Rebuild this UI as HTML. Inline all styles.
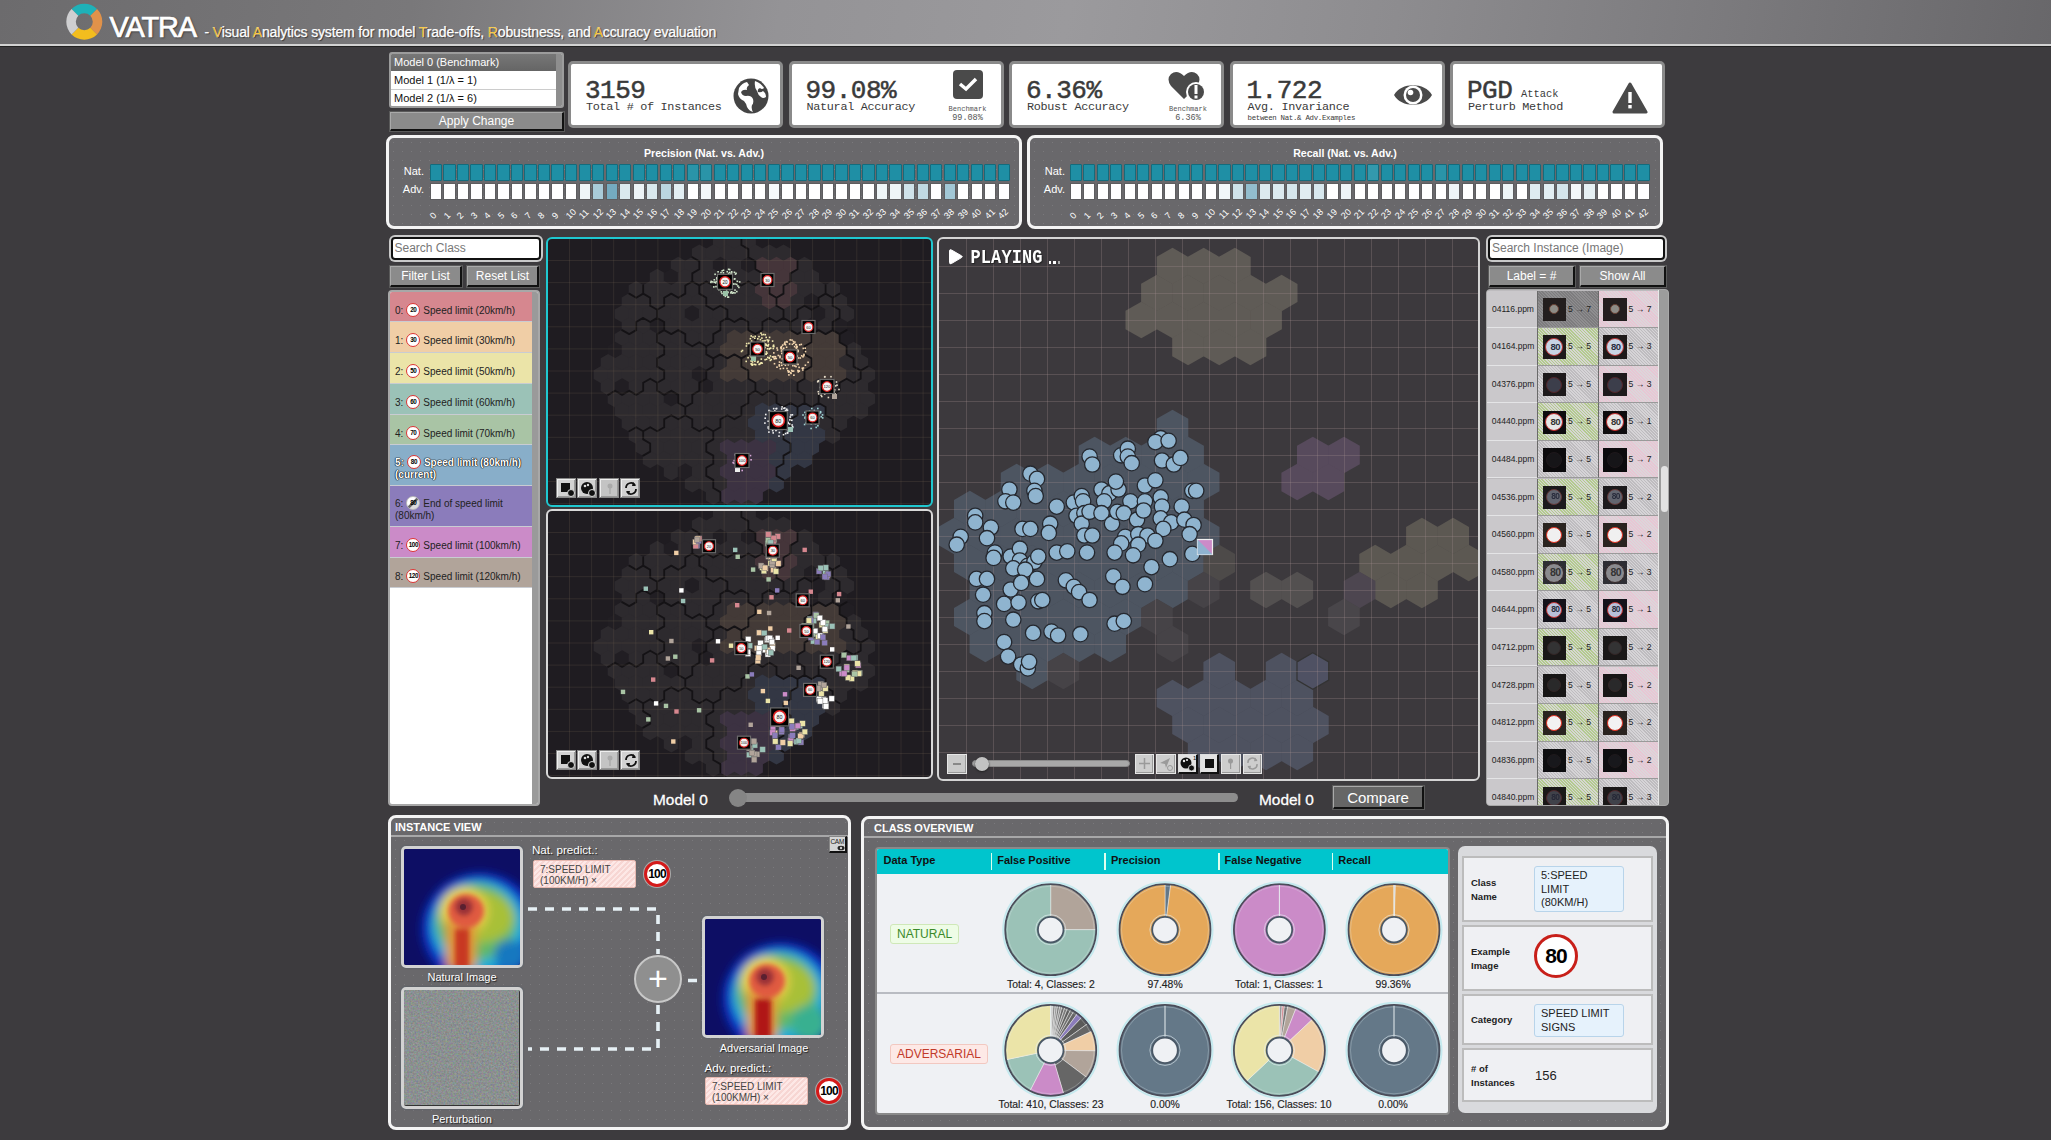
<!DOCTYPE html><html><head><meta charset="utf-8"><style>
*{box-sizing:border-box;margin:0;padding:0}
html,body{width:2051px;height:1140px;overflow:hidden;background:#3d3b3e;font-family:"Liberation Sans",sans-serif}
.abs{position:absolute}
#hdr{position:absolute;left:0;top:0;width:2051px;height:44px;background:linear-gradient(100deg,#6c6b6d 0%,#79787a 20%,#949396 38%,#9b9a9d 52%,#8d8c8f 68%,#7b7a7d 84%,#68676a 100%)}
#hdrline{position:absolute;left:0;top:44px;width:2051px;height:3px;background:#d2d2d2;border-bottom:1px solid #222}
.dots{background-color:#69686b;background-image:radial-gradient(circle,#7a797c 0.7px,transparent 0.9px);background-size:9px 9px}
.btn{position:absolute;background:#8b8b8b;border:1px solid #a9a9a9;border-right:2px solid #111;border-bottom:2px solid #111;color:#fff;text-align:center;font-size:12px;box-shadow:0 0 0 1px #5a5a5a}
.card{position:absolute;top:61px;width:215px;height:67px;background:#fff;border:3px solid #8a8a8a;border-radius:5px;font-family:"Liberation Mono",monospace;color:#3a3a3a}
.card .big{position:absolute;left:14px;top:13.5px;font-size:26px;line-height:26px;letter-spacing:-0.5px;-webkit-text-stroke:0.5px #3a3a3a}
.card .lab{position:absolute;left:15px;top:37px;font-size:11.8px;line-height:12px;letter-spacing:-0.3px}
.panel{position:absolute;border:3px solid #f4f4f4;border-radius:8px}
.inp{position:absolute;background:#fff;border:2px solid #111;box-shadow:0 0 0 2px #c9c9c9;border-radius:4px;color:#777;font-size:12px;padding-left:2px}
</style></head><body>
<div id="hdr"></div><div id="hdrline"></div>
<svg class="abs" style="left:0;top:0" width="120" height="44"><path d="M71.57,8.97 A18,18 0 0 1 97.03,8.97 L90.31,15.69 A8.5,8.5 0 0 0 78.29,15.69Z" fill="#1fb1b8"/><path d="M97.03,8.97 A18,18 0 0 1 97.03,34.43 L90.31,27.71 A8.5,8.5 0 0 0 90.31,15.69Z" fill="#e0924a"/><path d="M97.03,34.43 A18,18 0 0 1 71.57,34.43 L78.29,27.71 A8.5,8.5 0 0 0 90.31,27.71Z" fill="#f3bd1e"/><path d="M71.57,34.43 A18,18 0 0 1 71.57,8.97 L78.29,15.69 A8.5,8.5 0 0 0 78.29,27.71Z" fill="#cfcfd1"/></svg>
<div class="abs" style="left:109.5px;top:9.5px;font-size:29px;line-height:34px;color:#fff;letter-spacing:-1.2px;text-shadow:1px 1px 2px #333;-webkit-text-stroke:0.7px #fff">VATRA</div>
<div class="abs" style="left:204.5px;top:23px;font-size:14px;line-height:18px;color:#fff;text-shadow:1px 1px 1px #333;white-space:nowrap;letter-spacing:-0.15px;-webkit-text-stroke:0.25px #fff">- <span style="color:#f4b400">V</span>isual <span style="color:#f4b400">A</span>nalytics system for model <span style="color:#f4b400">T</span>rade-offs, <span style="color:#f4b400">R</span>obustness, and <span style="color:#f4b400">A</span>ccuracy evaluation</div>
<div class="abs" style="left:389px;top:52px;width:175px;height:56px;background:#fff;border:2px solid #9c9c9c;border-radius:3px;overflow:hidden;font-size:11px;color:#111"><div style="position:absolute;left:0;top:0;width:165px;height:17px;background:linear-gradient(#777,#656565);color:#fff;padding:2px 0 0 3px">Model 0 (Benchmark)</div><div style="position:absolute;left:0;top:18px;width:165px;height:18px;padding:2px 0 0 3px;border-bottom:1px solid #ccc">Model 1 (1/λ = 1)</div><div style="position:absolute;left:0;top:36px;width:165px;height:18px;padding:2px 0 0 3px">Model 2 (1/λ = 6)</div><div style="position:absolute;left:165px;top:0;width:8px;height:54px;background:#8e8e8e"></div></div>
<div class="btn" style="left:390px;top:112px;width:174px;height:19px;line-height:17px">Apply Change</div>
<div class="card" style="left:568px"><div class="big">3159</div><div class="lab">Total # of Instances</div><svg class="abs" style="left:161px;top:13px" width="38" height="38" viewBox="0 0 38 38"><circle cx="19" cy="19" r="17.5" fill="#444"/><path d="M7,11 Q10,6 15,5 L17,8 Q14,10 15,13 Q11,12 9,15 Q10,19 14,19 Q19,18 21,22 Q22,26 20,28 Q19,32 21,35 Q17,34 15,30 Q14,26 12,24 Q7,22 6,17Z M23,4 Q29,6 32,11 Q30,13 28,11 Q25,12 26,15 Q29,16 31,14 Q34,16 34,20 Q31,22 29,20 Q26,18 25,14 Q22,10 23,4Z" fill="#fff"/></svg></div>
<div class="card" style="left:788.5px"><div class="big">99.08%</div><div class="lab">Natural Accuracy</div><div class="abs" style="left:161px;top:6px;width:30px;height:29px;background:#4a4a4a;border-radius:4px"></div><svg class="abs" style="left:166px;top:12px" width="20" height="16"><path d="M2,8 L8,13 L18,3" stroke="#fff" stroke-width="3.5" fill="none"/></svg><div class="abs" style="left:152px;top:40.5px;width:48px;text-align:center;font-size:7px;line-height:8px;color:#555">Benchmark<br><span style="font-size:8.5px;line-height:11px">99.08%</span></div></div>
<div class="card" style="left:1009px"><div class="big">6.36%</div><div class="lab">Robust Accuracy</div><svg class="abs" style="left:155px;top:5px" width="40" height="36" viewBox="0 0 40 36"><path d="M17,30 L4,17 Q-1,10 4,5 Q10,0 17,7 Q24,0 30,5 Q35,10 30,17Z" fill="#4a4a4a"/><circle cx="29" cy="23" r="10" fill="#fff"/><circle cx="29" cy="23" r="8" fill="#4a4a4a"/><rect x="27.5" y="16" width="3" height="9" fill="#fff"/><rect x="27.5" y="26.5" width="3" height="3" fill="#fff"/></svg><div class="abs" style="left:152px;top:40.5px;width:48px;text-align:center;font-size:7px;line-height:8px;color:#555">Benchmark<br><span style="font-size:8.5px;line-height:11px">6.36%</span></div></div>
<div class="card" style="left:1229.5px"><div class="big">1.722</div><div class="lab">Avg. Invariance</div><svg class="abs" style="left:160px;top:14px" width="40" height="34" viewBox="0 0 40 34"><path d="M1,17 C8,4 32,4 39,17 C32,30 8,30 1,17Z" fill="#4a4a4a"/><circle cx="20" cy="17" r="9.5" fill="#fff"/><circle cx="20" cy="17" r="7" fill="#4a4a4a"/><circle cx="17.5" cy="14.5" r="2.8" fill="#fff"/></svg><div class="abs" style="left:15px;top:49.5px;font-size:7.4px;line-height:8px;letter-spacing:-0.3px">between Nat.& Adv.Examples</div></div>
<div class="card" style="left:1450px"><div class="big">PGD</div><div class="lab">Perturb Method</div><svg class="abs" style="left:159px;top:18px" width="36" height="32" viewBox="0 0 36 32"><path d="M18,2 L34,30 L2,30Z" fill="#4a4a4a" stroke="#4a4a4a" stroke-width="3" stroke-linejoin="round"/><rect x="16.3" y="10" width="3.4" height="11" fill="#fff"/><rect x="16.3" y="23" width="3.4" height="3.4" fill="#fff"/></svg><div class="abs" style="left:68px;top:24px;font-size:10.4px;line-height:12px">Attack</div></div>
<div class="panel dots" style="left:386px;top:135px;width:636px;height:94px"><div class="abs" style="left:0;top:9px;width:630px;text-align:center;color:#fff;font-size:10.6px;font-weight:bold">Precision (Nat. vs. Adv.)</div><div class="abs" style="left:10px;top:27px;width:25px;text-align:right;color:#fff;font-size:11px">Nat.</div><div class="abs" style="left:8px;top:45px;width:27px;text-align:right;color:#fff;font-size:11px">Adv.</div><div class="abs" style="left:40.80px;top:26px;width:12.2px;height:17px;background:#1f8fa5;border:1px solid #146b7c;border-radius:1px"></div><div class="abs" style="left:40.80px;top:45px;width:12.2px;height:17px;background:rgb(255,255,255);border:1px solid #5d5d5f"></div><div class="abs" style="left:46.30px;top:73px;width:14px;height:10px;color:#fff;font-size:9px;line-height:10px;transform:rotate(-45deg);transform-origin:0 100%;white-space:nowrap">0</div><div class="abs" style="left:54.32px;top:26px;width:12.2px;height:17px;background:#1f8fa5;border:1px solid #146b7c;border-radius:1px"></div><div class="abs" style="left:54.32px;top:45px;width:12.2px;height:17px;background:rgb(255,255,255);border:1px solid #5d5d5f"></div><div class="abs" style="left:59.82px;top:73px;width:14px;height:10px;color:#fff;font-size:9px;line-height:10px;transform:rotate(-45deg);transform-origin:0 100%;white-space:nowrap">1</div><div class="abs" style="left:67.84px;top:26px;width:12.2px;height:17px;background:#1f8fa5;border:1px solid #146b7c;border-radius:1px"></div><div class="abs" style="left:67.84px;top:45px;width:12.2px;height:17px;background:rgb(255,255,255);border:1px solid #5d5d5f"></div><div class="abs" style="left:73.34px;top:73px;width:14px;height:10px;color:#fff;font-size:9px;line-height:10px;transform:rotate(-45deg);transform-origin:0 100%;white-space:nowrap">2</div><div class="abs" style="left:81.36px;top:26px;width:12.2px;height:17px;background:#1f8fa5;border:1px solid #146b7c;border-radius:1px"></div><div class="abs" style="left:81.36px;top:45px;width:12.2px;height:17px;background:rgb(255,255,255);border:1px solid #5d5d5f"></div><div class="abs" style="left:86.86px;top:73px;width:14px;height:10px;color:#fff;font-size:9px;line-height:10px;transform:rotate(-45deg);transform-origin:0 100%;white-space:nowrap">3</div><div class="abs" style="left:94.88px;top:26px;width:12.2px;height:17px;background:#1f8fa5;border:1px solid #146b7c;border-radius:1px"></div><div class="abs" style="left:94.88px;top:45px;width:12.2px;height:17px;background:rgb(255,255,255);border:1px solid #5d5d5f"></div><div class="abs" style="left:100.38px;top:73px;width:14px;height:10px;color:#fff;font-size:9px;line-height:10px;transform:rotate(-45deg);transform-origin:0 100%;white-space:nowrap">4</div><div class="abs" style="left:108.40px;top:26px;width:12.2px;height:17px;background:#1f8fa5;border:1px solid #146b7c;border-radius:1px"></div><div class="abs" style="left:108.40px;top:45px;width:12.2px;height:17px;background:rgb(255,255,255);border:1px solid #5d5d5f"></div><div class="abs" style="left:113.90px;top:73px;width:14px;height:10px;color:#fff;font-size:9px;line-height:10px;transform:rotate(-45deg);transform-origin:0 100%;white-space:nowrap">5</div><div class="abs" style="left:121.92px;top:26px;width:12.2px;height:17px;background:#1f8fa5;border:1px solid #146b7c;border-radius:1px"></div><div class="abs" style="left:121.92px;top:45px;width:12.2px;height:17px;background:rgb(255,255,255);border:1px solid #5d5d5f"></div><div class="abs" style="left:127.42px;top:73px;width:14px;height:10px;color:#fff;font-size:9px;line-height:10px;transform:rotate(-45deg);transform-origin:0 100%;white-space:nowrap">6</div><div class="abs" style="left:135.44px;top:26px;width:12.2px;height:17px;background:#1f8fa5;border:1px solid #146b7c;border-radius:1px"></div><div class="abs" style="left:135.44px;top:45px;width:12.2px;height:17px;background:rgb(255,255,255);border:1px solid #5d5d5f"></div><div class="abs" style="left:140.94px;top:73px;width:14px;height:10px;color:#fff;font-size:9px;line-height:10px;transform:rotate(-45deg);transform-origin:0 100%;white-space:nowrap">7</div><div class="abs" style="left:148.96px;top:26px;width:12.2px;height:17px;background:#1f8fa5;border:1px solid #146b7c;border-radius:1px"></div><div class="abs" style="left:148.96px;top:45px;width:12.2px;height:17px;background:rgb(255,255,255);border:1px solid #5d5d5f"></div><div class="abs" style="left:154.46px;top:73px;width:14px;height:10px;color:#fff;font-size:9px;line-height:10px;transform:rotate(-45deg);transform-origin:0 100%;white-space:nowrap">8</div><div class="abs" style="left:162.48px;top:26px;width:12.2px;height:17px;background:#1f8fa5;border:1px solid #146b7c;border-radius:1px"></div><div class="abs" style="left:162.48px;top:45px;width:12.2px;height:17px;background:rgb(255,255,255);border:1px solid #5d5d5f"></div><div class="abs" style="left:167.98px;top:73px;width:14px;height:10px;color:#fff;font-size:9px;line-height:10px;transform:rotate(-45deg);transform-origin:0 100%;white-space:nowrap">9</div><div class="abs" style="left:176.00px;top:26px;width:12.2px;height:17px;background:#1f8fa5;border:1px solid #146b7c;border-radius:1px"></div><div class="abs" style="left:176.00px;top:45px;width:12.2px;height:17px;background:rgb(255,255,255);border:1px solid #5d5d5f"></div><div class="abs" style="left:181.50px;top:73px;width:14px;height:10px;color:#fff;font-size:9px;line-height:10px;transform:rotate(-45deg);transform-origin:0 100%;white-space:nowrap">10</div><div class="abs" style="left:189.52px;top:26px;width:12.2px;height:17px;background:#1f8fa5;border:1px solid #146b7c;border-radius:1px"></div><div class="abs" style="left:189.52px;top:45px;width:12.2px;height:17px;background:rgb(238,245,247);border:1px solid #5d5d5f"></div><div class="abs" style="left:195.02px;top:73px;width:14px;height:10px;color:#fff;font-size:9px;line-height:10px;transform:rotate(-45deg);transform-origin:0 100%;white-space:nowrap">11</div><div class="abs" style="left:203.04px;top:26px;width:12.2px;height:17px;background:#1f8fa5;border:1px solid #146b7c;border-radius:1px"></div><div class="abs" style="left:203.04px;top:45px;width:12.2px;height:17px;background:rgb(169,203,216);border:1px solid #5d5d5f"></div><div class="abs" style="left:208.54px;top:73px;width:14px;height:10px;color:#fff;font-size:9px;line-height:10px;transform:rotate(-45deg);transform-origin:0 100%;white-space:nowrap">12</div><div class="abs" style="left:216.56px;top:26px;width:12.2px;height:17px;background:#1f8fa5;border:1px solid #146b7c;border-radius:1px"></div><div class="abs" style="left:216.56px;top:45px;width:12.2px;height:17px;background:rgb(116,171,192);border:1px solid #5d5d5f"></div><div class="abs" style="left:222.06px;top:73px;width:14px;height:10px;color:#fff;font-size:9px;line-height:10px;transform:rotate(-45deg);transform-origin:0 100%;white-space:nowrap">13</div><div class="abs" style="left:230.08px;top:26px;width:12.2px;height:17px;background:#1f8fa5;border:1px solid #146b7c;border-radius:1px"></div><div class="abs" style="left:230.08px;top:45px;width:12.2px;height:17px;background:rgb(218,233,238);border:1px solid #5d5d5f"></div><div class="abs" style="left:235.58px;top:73px;width:14px;height:10px;color:#fff;font-size:9px;line-height:10px;transform:rotate(-45deg);transform-origin:0 100%;white-space:nowrap">14</div><div class="abs" style="left:243.60px;top:26px;width:12.2px;height:17px;background:#1f8fa5;border:1px solid #146b7c;border-radius:1px"></div><div class="abs" style="left:243.60px;top:45px;width:12.2px;height:17px;background:rgb(236,243,246);border:1px solid #5d5d5f"></div><div class="abs" style="left:249.10px;top:73px;width:14px;height:10px;color:#fff;font-size:9px;line-height:10px;transform:rotate(-45deg);transform-origin:0 100%;white-space:nowrap">15</div><div class="abs" style="left:257.12px;top:26px;width:12.2px;height:17px;background:#1f8fa5;border:1px solid #146b7c;border-radius:1px"></div><div class="abs" style="left:257.12px;top:45px;width:12.2px;height:17px;background:rgb(217,232,237);border:1px solid #5d5d5f"></div><div class="abs" style="left:262.62px;top:73px;width:14px;height:10px;color:#fff;font-size:9px;line-height:10px;transform:rotate(-45deg);transform-origin:0 100%;white-space:nowrap">16</div><div class="abs" style="left:270.64px;top:26px;width:12.2px;height:17px;background:#1f8fa5;border:1px solid #146b7c;border-radius:1px"></div><div class="abs" style="left:270.64px;top:45px;width:12.2px;height:17px;background:rgb(187,214,224);border:1px solid #5d5d5f"></div><div class="abs" style="left:276.14px;top:73px;width:14px;height:10px;color:#fff;font-size:9px;line-height:10px;transform:rotate(-45deg);transform-origin:0 100%;white-space:nowrap">17</div><div class="abs" style="left:284.16px;top:26px;width:12.2px;height:17px;background:#1f8fa5;border:1px solid #146b7c;border-radius:1px"></div><div class="abs" style="left:284.16px;top:45px;width:12.2px;height:17px;background:rgb(226,238,242);border:1px solid #5d5d5f"></div><div class="abs" style="left:289.66px;top:73px;width:14px;height:10px;color:#fff;font-size:9px;line-height:10px;transform:rotate(-45deg);transform-origin:0 100%;white-space:nowrap">18</div><div class="abs" style="left:297.68px;top:26px;width:12.2px;height:17px;background:#2a94a8;border:1px solid #146b7c;border-radius:1px"></div><div class="abs" style="left:297.68px;top:45px;width:12.2px;height:17px;background:rgb(255,255,255);border:1px solid #5d5d5f"></div><div class="abs" style="left:303.18px;top:73px;width:14px;height:10px;color:#fff;font-size:9px;line-height:10px;transform:rotate(-45deg);transform-origin:0 100%;white-space:nowrap">19</div><div class="abs" style="left:311.20px;top:26px;width:12.2px;height:17px;background:#2a94a8;border:1px solid #146b7c;border-radius:1px"></div><div class="abs" style="left:311.20px;top:45px;width:12.2px;height:17px;background:rgb(243,248,249);border:1px solid #5d5d5f"></div><div class="abs" style="left:316.70px;top:73px;width:14px;height:10px;color:#fff;font-size:9px;line-height:10px;transform:rotate(-45deg);transform-origin:0 100%;white-space:nowrap">20</div><div class="abs" style="left:324.72px;top:26px;width:12.2px;height:17px;background:#1f8fa5;border:1px solid #146b7c;border-radius:1px"></div><div class="abs" style="left:324.72px;top:45px;width:12.2px;height:17px;background:rgb(255,255,255);border:1px solid #5d5d5f"></div><div class="abs" style="left:330.22px;top:73px;width:14px;height:10px;color:#fff;font-size:9px;line-height:10px;transform:rotate(-45deg);transform-origin:0 100%;white-space:nowrap">21</div><div class="abs" style="left:338.24px;top:26px;width:12.2px;height:17px;background:#1f8fa5;border:1px solid #146b7c;border-radius:1px"></div><div class="abs" style="left:338.24px;top:45px;width:12.2px;height:17px;background:rgb(255,255,255);border:1px solid #5d5d5f"></div><div class="abs" style="left:343.74px;top:73px;width:14px;height:10px;color:#fff;font-size:9px;line-height:10px;transform:rotate(-45deg);transform-origin:0 100%;white-space:nowrap">22</div><div class="abs" style="left:351.76px;top:26px;width:12.2px;height:17px;background:#1f8fa5;border:1px solid #146b7c;border-radius:1px"></div><div class="abs" style="left:351.76px;top:45px;width:12.2px;height:17px;background:rgb(255,255,255);border:1px solid #5d5d5f"></div><div class="abs" style="left:357.26px;top:73px;width:14px;height:10px;color:#fff;font-size:9px;line-height:10px;transform:rotate(-45deg);transform-origin:0 100%;white-space:nowrap">23</div><div class="abs" style="left:365.28px;top:26px;width:12.2px;height:17px;background:#1f8fa5;border:1px solid #146b7c;border-radius:1px"></div><div class="abs" style="left:365.28px;top:45px;width:12.2px;height:17px;background:rgb(255,255,255);border:1px solid #5d5d5f"></div><div class="abs" style="left:370.78px;top:73px;width:14px;height:10px;color:#fff;font-size:9px;line-height:10px;transform:rotate(-45deg);transform-origin:0 100%;white-space:nowrap">24</div><div class="abs" style="left:378.80px;top:26px;width:12.2px;height:17px;background:#1f8fa5;border:1px solid #146b7c;border-radius:1px"></div><div class="abs" style="left:378.80px;top:45px;width:12.2px;height:17px;background:rgb(246,250,251);border:1px solid #5d5d5f"></div><div class="abs" style="left:384.30px;top:73px;width:14px;height:10px;color:#fff;font-size:9px;line-height:10px;transform:rotate(-45deg);transform-origin:0 100%;white-space:nowrap">25</div><div class="abs" style="left:392.32px;top:26px;width:12.2px;height:17px;background:#1f8fa5;border:1px solid #146b7c;border-radius:1px"></div><div class="abs" style="left:392.32px;top:45px;width:12.2px;height:17px;background:rgb(255,255,255);border:1px solid #5d5d5f"></div><div class="abs" style="left:397.82px;top:73px;width:14px;height:10px;color:#fff;font-size:9px;line-height:10px;transform:rotate(-45deg);transform-origin:0 100%;white-space:nowrap">26</div><div class="abs" style="left:405.84px;top:26px;width:12.2px;height:17px;background:#1f8fa5;border:1px solid #146b7c;border-radius:1px"></div><div class="abs" style="left:405.84px;top:45px;width:12.2px;height:17px;background:rgb(255,255,255);border:1px solid #5d5d5f"></div><div class="abs" style="left:411.34px;top:73px;width:14px;height:10px;color:#fff;font-size:9px;line-height:10px;transform:rotate(-45deg);transform-origin:0 100%;white-space:nowrap">27</div><div class="abs" style="left:419.36px;top:26px;width:12.2px;height:17px;background:#1f8fa5;border:1px solid #146b7c;border-radius:1px"></div><div class="abs" style="left:419.36px;top:45px;width:12.2px;height:17px;background:rgb(255,255,255);border:1px solid #5d5d5f"></div><div class="abs" style="left:424.86px;top:73px;width:14px;height:10px;color:#fff;font-size:9px;line-height:10px;transform:rotate(-45deg);transform-origin:0 100%;white-space:nowrap">28</div><div class="abs" style="left:432.88px;top:26px;width:12.2px;height:17px;background:#1f8fa5;border:1px solid #146b7c;border-radius:1px"></div><div class="abs" style="left:432.88px;top:45px;width:12.2px;height:17px;background:rgb(255,255,255);border:1px solid #5d5d5f"></div><div class="abs" style="left:438.38px;top:73px;width:14px;height:10px;color:#fff;font-size:9px;line-height:10px;transform:rotate(-45deg);transform-origin:0 100%;white-space:nowrap">29</div><div class="abs" style="left:446.40px;top:26px;width:12.2px;height:17px;background:#1f8fa5;border:1px solid #146b7c;border-radius:1px"></div><div class="abs" style="left:446.40px;top:45px;width:12.2px;height:17px;background:rgb(255,255,255);border:1px solid #5d5d5f"></div><div class="abs" style="left:451.90px;top:73px;width:14px;height:10px;color:#fff;font-size:9px;line-height:10px;transform:rotate(-45deg);transform-origin:0 100%;white-space:nowrap">30</div><div class="abs" style="left:459.92px;top:26px;width:12.2px;height:17px;background:#1f8fa5;border:1px solid #146b7c;border-radius:1px"></div><div class="abs" style="left:459.92px;top:45px;width:12.2px;height:17px;background:rgb(255,255,255);border:1px solid #5d5d5f"></div><div class="abs" style="left:465.42px;top:73px;width:14px;height:10px;color:#fff;font-size:9px;line-height:10px;transform:rotate(-45deg);transform-origin:0 100%;white-space:nowrap">31</div><div class="abs" style="left:473.44px;top:26px;width:12.2px;height:17px;background:#1f8fa5;border:1px solid #146b7c;border-radius:1px"></div><div class="abs" style="left:473.44px;top:45px;width:12.2px;height:17px;background:rgb(255,255,255);border:1px solid #5d5d5f"></div><div class="abs" style="left:478.94px;top:73px;width:14px;height:10px;color:#fff;font-size:9px;line-height:10px;transform:rotate(-45deg);transform-origin:0 100%;white-space:nowrap">32</div><div class="abs" style="left:486.96px;top:26px;width:12.2px;height:17px;background:#1f8fa5;border:1px solid #146b7c;border-radius:1px"></div><div class="abs" style="left:486.96px;top:45px;width:12.2px;height:17px;background:rgb(238,245,247);border:1px solid #5d5d5f"></div><div class="abs" style="left:492.46px;top:73px;width:14px;height:10px;color:#fff;font-size:9px;line-height:10px;transform:rotate(-45deg);transform-origin:0 100%;white-space:nowrap">33</div><div class="abs" style="left:500.48px;top:26px;width:12.2px;height:17px;background:#1f8fa5;border:1px solid #146b7c;border-radius:1px"></div><div class="abs" style="left:500.48px;top:45px;width:12.2px;height:17px;background:rgb(238,245,247);border:1px solid #5d5d5f"></div><div class="abs" style="left:505.98px;top:73px;width:14px;height:10px;color:#fff;font-size:9px;line-height:10px;transform:rotate(-45deg);transform-origin:0 100%;white-space:nowrap">34</div><div class="abs" style="left:514.00px;top:26px;width:12.2px;height:17px;background:#1f8fa5;border:1px solid #146b7c;border-radius:1px"></div><div class="abs" style="left:514.00px;top:45px;width:12.2px;height:17px;background:rgb(207,226,233);border:1px solid #5d5d5f"></div><div class="abs" style="left:519.50px;top:73px;width:14px;height:10px;color:#fff;font-size:9px;line-height:10px;transform:rotate(-45deg);transform-origin:0 100%;white-space:nowrap">35</div><div class="abs" style="left:527.52px;top:26px;width:12.2px;height:17px;background:#1f8fa5;border:1px solid #146b7c;border-radius:1px"></div><div class="abs" style="left:527.52px;top:45px;width:12.2px;height:17px;background:rgb(192,217,226);border:1px solid #5d5d5f"></div><div class="abs" style="left:533.02px;top:73px;width:14px;height:10px;color:#fff;font-size:9px;line-height:10px;transform:rotate(-45deg);transform-origin:0 100%;white-space:nowrap">36</div><div class="abs" style="left:541.04px;top:26px;width:12.2px;height:17px;background:#1f8fa5;border:1px solid #146b7c;border-radius:1px"></div><div class="abs" style="left:541.04px;top:45px;width:12.2px;height:17px;background:rgb(255,255,255);border:1px solid #5d5d5f"></div><div class="abs" style="left:546.54px;top:73px;width:14px;height:10px;color:#fff;font-size:9px;line-height:10px;transform:rotate(-45deg);transform-origin:0 100%;white-space:nowrap">37</div><div class="abs" style="left:554.56px;top:26px;width:12.2px;height:17px;background:#1f8fa5;border:1px solid #146b7c;border-radius:1px"></div><div class="abs" style="left:554.56px;top:45px;width:12.2px;height:17px;background:rgb(162,199,213);border:1px solid #5d5d5f"></div><div class="abs" style="left:560.06px;top:73px;width:14px;height:10px;color:#fff;font-size:9px;line-height:10px;transform:rotate(-45deg);transform-origin:0 100%;white-space:nowrap">38</div><div class="abs" style="left:568.08px;top:26px;width:12.2px;height:17px;background:#1f8fa5;border:1px solid #146b7c;border-radius:1px"></div><div class="abs" style="left:568.08px;top:45px;width:12.2px;height:17px;background:rgb(255,255,255);border:1px solid #5d5d5f"></div><div class="abs" style="left:573.58px;top:73px;width:14px;height:10px;color:#fff;font-size:9px;line-height:10px;transform:rotate(-45deg);transform-origin:0 100%;white-space:nowrap">39</div><div class="abs" style="left:581.60px;top:26px;width:12.2px;height:17px;background:#1f8fa5;border:1px solid #146b7c;border-radius:1px"></div><div class="abs" style="left:581.60px;top:45px;width:12.2px;height:17px;background:rgb(255,255,255);border:1px solid #5d5d5f"></div><div class="abs" style="left:587.10px;top:73px;width:14px;height:10px;color:#fff;font-size:9px;line-height:10px;transform:rotate(-45deg);transform-origin:0 100%;white-space:nowrap">40</div><div class="abs" style="left:595.12px;top:26px;width:12.2px;height:17px;background:#1f8fa5;border:1px solid #146b7c;border-radius:1px"></div><div class="abs" style="left:595.12px;top:45px;width:12.2px;height:17px;background:rgb(255,255,255);border:1px solid #5d5d5f"></div><div class="abs" style="left:600.62px;top:73px;width:14px;height:10px;color:#fff;font-size:9px;line-height:10px;transform:rotate(-45deg);transform-origin:0 100%;white-space:nowrap">41</div><div class="abs" style="left:608.64px;top:26px;width:12.2px;height:17px;background:#1f8fa5;border:1px solid #146b7c;border-radius:1px"></div><div class="abs" style="left:608.64px;top:45px;width:12.2px;height:17px;background:rgb(255,255,255);border:1px solid #5d5d5f"></div><div class="abs" style="left:614.14px;top:73px;width:14px;height:10px;color:#fff;font-size:9px;line-height:10px;transform:rotate(-45deg);transform-origin:0 100%;white-space:nowrap">42</div></div>
<div class="panel dots" style="left:1027px;top:135px;width:636px;height:94px"><div class="abs" style="left:0;top:9px;width:630px;text-align:center;color:#fff;font-size:10.6px;font-weight:bold">Recall (Nat. vs. Adv.)</div><div class="abs" style="left:10px;top:27px;width:25px;text-align:right;color:#fff;font-size:11px">Nat.</div><div class="abs" style="left:8px;top:45px;width:27px;text-align:right;color:#fff;font-size:11px">Adv.</div><div class="abs" style="left:39.60px;top:26px;width:12.2px;height:17px;background:#1f8fa5;border:1px solid #146b7c;border-radius:1px"></div><div class="abs" style="left:39.60px;top:45px;width:12.2px;height:17px;background:rgb(255,255,255);border:1px solid #5d5d5f"></div><div class="abs" style="left:45.10px;top:73px;width:14px;height:10px;color:#fff;font-size:9px;line-height:10px;transform:rotate(-45deg);transform-origin:0 100%;white-space:nowrap">0</div><div class="abs" style="left:53.12px;top:26px;width:12.2px;height:17px;background:#1f8fa5;border:1px solid #146b7c;border-radius:1px"></div><div class="abs" style="left:53.12px;top:45px;width:12.2px;height:17px;background:rgb(255,255,255);border:1px solid #5d5d5f"></div><div class="abs" style="left:58.62px;top:73px;width:14px;height:10px;color:#fff;font-size:9px;line-height:10px;transform:rotate(-45deg);transform-origin:0 100%;white-space:nowrap">1</div><div class="abs" style="left:66.64px;top:26px;width:12.2px;height:17px;background:#1f8fa5;border:1px solid #146b7c;border-radius:1px"></div><div class="abs" style="left:66.64px;top:45px;width:12.2px;height:17px;background:rgb(255,255,255);border:1px solid #5d5d5f"></div><div class="abs" style="left:72.14px;top:73px;width:14px;height:10px;color:#fff;font-size:9px;line-height:10px;transform:rotate(-45deg);transform-origin:0 100%;white-space:nowrap">2</div><div class="abs" style="left:80.16px;top:26px;width:12.2px;height:17px;background:#1f8fa5;border:1px solid #146b7c;border-radius:1px"></div><div class="abs" style="left:80.16px;top:45px;width:12.2px;height:17px;background:rgb(255,255,255);border:1px solid #5d5d5f"></div><div class="abs" style="left:85.66px;top:73px;width:14px;height:10px;color:#fff;font-size:9px;line-height:10px;transform:rotate(-45deg);transform-origin:0 100%;white-space:nowrap">3</div><div class="abs" style="left:93.68px;top:26px;width:12.2px;height:17px;background:#1f8fa5;border:1px solid #146b7c;border-radius:1px"></div><div class="abs" style="left:93.68px;top:45px;width:12.2px;height:17px;background:rgb(255,255,255);border:1px solid #5d5d5f"></div><div class="abs" style="left:99.18px;top:73px;width:14px;height:10px;color:#fff;font-size:9px;line-height:10px;transform:rotate(-45deg);transform-origin:0 100%;white-space:nowrap">4</div><div class="abs" style="left:107.20px;top:26px;width:12.2px;height:17px;background:#1f8fa5;border:1px solid #146b7c;border-radius:1px"></div><div class="abs" style="left:107.20px;top:45px;width:12.2px;height:17px;background:rgb(255,255,255);border:1px solid #5d5d5f"></div><div class="abs" style="left:112.70px;top:73px;width:14px;height:10px;color:#fff;font-size:9px;line-height:10px;transform:rotate(-45deg);transform-origin:0 100%;white-space:nowrap">5</div><div class="abs" style="left:120.72px;top:26px;width:12.2px;height:17px;background:#1f8fa5;border:1px solid #146b7c;border-radius:1px"></div><div class="abs" style="left:120.72px;top:45px;width:12.2px;height:17px;background:rgb(255,255,255);border:1px solid #5d5d5f"></div><div class="abs" style="left:126.22px;top:73px;width:14px;height:10px;color:#fff;font-size:9px;line-height:10px;transform:rotate(-45deg);transform-origin:0 100%;white-space:nowrap">6</div><div class="abs" style="left:134.24px;top:26px;width:12.2px;height:17px;background:#1f8fa5;border:1px solid #146b7c;border-radius:1px"></div><div class="abs" style="left:134.24px;top:45px;width:12.2px;height:17px;background:rgb(255,255,255);border:1px solid #5d5d5f"></div><div class="abs" style="left:139.74px;top:73px;width:14px;height:10px;color:#fff;font-size:9px;line-height:10px;transform:rotate(-45deg);transform-origin:0 100%;white-space:nowrap">7</div><div class="abs" style="left:147.76px;top:26px;width:12.2px;height:17px;background:#1f8fa5;border:1px solid #146b7c;border-radius:1px"></div><div class="abs" style="left:147.76px;top:45px;width:12.2px;height:17px;background:rgb(255,255,255);border:1px solid #5d5d5f"></div><div class="abs" style="left:153.26px;top:73px;width:14px;height:10px;color:#fff;font-size:9px;line-height:10px;transform:rotate(-45deg);transform-origin:0 100%;white-space:nowrap">8</div><div class="abs" style="left:161.28px;top:26px;width:12.2px;height:17px;background:#1f8fa5;border:1px solid #146b7c;border-radius:1px"></div><div class="abs" style="left:161.28px;top:45px;width:12.2px;height:17px;background:rgb(255,255,255);border:1px solid #5d5d5f"></div><div class="abs" style="left:166.78px;top:73px;width:14px;height:10px;color:#fff;font-size:9px;line-height:10px;transform:rotate(-45deg);transform-origin:0 100%;white-space:nowrap">9</div><div class="abs" style="left:174.80px;top:26px;width:12.2px;height:17px;background:#1f8fa5;border:1px solid #146b7c;border-radius:1px"></div><div class="abs" style="left:174.80px;top:45px;width:12.2px;height:17px;background:rgb(255,255,255);border:1px solid #5d5d5f"></div><div class="abs" style="left:180.30px;top:73px;width:14px;height:10px;color:#fff;font-size:9px;line-height:10px;transform:rotate(-45deg);transform-origin:0 100%;white-space:nowrap">10</div><div class="abs" style="left:188.32px;top:26px;width:12.2px;height:17px;background:#1f8fa5;border:1px solid #146b7c;border-radius:1px"></div><div class="abs" style="left:188.32px;top:45px;width:12.2px;height:17px;background:rgb(241,247,249);border:1px solid #5d5d5f"></div><div class="abs" style="left:193.82px;top:73px;width:14px;height:10px;color:#fff;font-size:9px;line-height:10px;transform:rotate(-45deg);transform-origin:0 100%;white-space:nowrap">11</div><div class="abs" style="left:201.84px;top:26px;width:12.2px;height:17px;background:#1f8fa5;border:1px solid #146b7c;border-radius:1px"></div><div class="abs" style="left:201.84px;top:45px;width:12.2px;height:17px;background:rgb(207,226,233);border:1px solid #5d5d5f"></div><div class="abs" style="left:207.34px;top:73px;width:14px;height:10px;color:#fff;font-size:9px;line-height:10px;transform:rotate(-45deg);transform-origin:0 100%;white-space:nowrap">12</div><div class="abs" style="left:215.36px;top:26px;width:12.2px;height:17px;background:#1f8fa5;border:1px solid #146b7c;border-radius:1px"></div><div class="abs" style="left:215.36px;top:45px;width:12.2px;height:17px;background:rgb(146,189,205);border:1px solid #5d5d5f"></div><div class="abs" style="left:220.86px;top:73px;width:14px;height:10px;color:#fff;font-size:9px;line-height:10px;transform:rotate(-45deg);transform-origin:0 100%;white-space:nowrap">13</div><div class="abs" style="left:228.88px;top:26px;width:12.2px;height:17px;background:#1f8fa5;border:1px solid #146b7c;border-radius:1px"></div><div class="abs" style="left:228.88px;top:45px;width:12.2px;height:17px;background:rgb(220,234,239);border:1px solid #5d5d5f"></div><div class="abs" style="left:234.38px;top:73px;width:14px;height:10px;color:#fff;font-size:9px;line-height:10px;transform:rotate(-45deg);transform-origin:0 100%;white-space:nowrap">14</div><div class="abs" style="left:242.40px;top:26px;width:12.2px;height:17px;background:#1f8fa5;border:1px solid #146b7c;border-radius:1px"></div><div class="abs" style="left:242.40px;top:45px;width:12.2px;height:17px;background:rgb(220,234,239);border:1px solid #5d5d5f"></div><div class="abs" style="left:247.90px;top:73px;width:14px;height:10px;color:#fff;font-size:9px;line-height:10px;transform:rotate(-45deg);transform-origin:0 100%;white-space:nowrap">15</div><div class="abs" style="left:255.92px;top:26px;width:12.2px;height:17px;background:#1f8fa5;border:1px solid #146b7c;border-radius:1px"></div><div class="abs" style="left:255.92px;top:45px;width:12.2px;height:17px;background:rgb(213,230,236);border:1px solid #5d5d5f"></div><div class="abs" style="left:261.42px;top:73px;width:14px;height:10px;color:#fff;font-size:9px;line-height:10px;transform:rotate(-45deg);transform-origin:0 100%;white-space:nowrap">16</div><div class="abs" style="left:269.44px;top:26px;width:12.2px;height:17px;background:#1f8fa5;border:1px solid #146b7c;border-radius:1px"></div><div class="abs" style="left:269.44px;top:45px;width:12.2px;height:17px;background:rgb(225,237,241);border:1px solid #5d5d5f"></div><div class="abs" style="left:274.94px;top:73px;width:14px;height:10px;color:#fff;font-size:9px;line-height:10px;transform:rotate(-45deg);transform-origin:0 100%;white-space:nowrap">17</div><div class="abs" style="left:282.96px;top:26px;width:12.2px;height:17px;background:#1f8fa5;border:1px solid #146b7c;border-radius:1px"></div><div class="abs" style="left:282.96px;top:45px;width:12.2px;height:17px;background:rgb(215,231,237);border:1px solid #5d5d5f"></div><div class="abs" style="left:288.46px;top:73px;width:14px;height:10px;color:#fff;font-size:9px;line-height:10px;transform:rotate(-45deg);transform-origin:0 100%;white-space:nowrap">18</div><div class="abs" style="left:296.48px;top:26px;width:12.2px;height:17px;background:#1f8fa5;border:1px solid #146b7c;border-radius:1px"></div><div class="abs" style="left:296.48px;top:45px;width:12.2px;height:17px;background:rgb(255,255,255);border:1px solid #5d5d5f"></div><div class="abs" style="left:301.98px;top:73px;width:14px;height:10px;color:#fff;font-size:9px;line-height:10px;transform:rotate(-45deg);transform-origin:0 100%;white-space:nowrap">19</div><div class="abs" style="left:310.00px;top:26px;width:12.2px;height:17px;background:#1f8fa5;border:1px solid #146b7c;border-radius:1px"></div><div class="abs" style="left:310.00px;top:45px;width:12.2px;height:17px;background:rgb(238,245,247);border:1px solid #5d5d5f"></div><div class="abs" style="left:315.50px;top:73px;width:14px;height:10px;color:#fff;font-size:9px;line-height:10px;transform:rotate(-45deg);transform-origin:0 100%;white-space:nowrap">20</div><div class="abs" style="left:323.52px;top:26px;width:12.2px;height:17px;background:#1f8fa5;border:1px solid #146b7c;border-radius:1px"></div><div class="abs" style="left:323.52px;top:45px;width:12.2px;height:17px;background:rgb(255,255,255);border:1px solid #5d5d5f"></div><div class="abs" style="left:329.02px;top:73px;width:14px;height:10px;color:#fff;font-size:9px;line-height:10px;transform:rotate(-45deg);transform-origin:0 100%;white-space:nowrap">21</div><div class="abs" style="left:337.04px;top:26px;width:12.2px;height:17px;background:#3399ad;border:1px solid #146b7c;border-radius:1px"></div><div class="abs" style="left:337.04px;top:45px;width:12.2px;height:17px;background:rgb(255,255,255);border:1px solid #5d5d5f"></div><div class="abs" style="left:342.54px;top:73px;width:14px;height:10px;color:#fff;font-size:9px;line-height:10px;transform:rotate(-45deg);transform-origin:0 100%;white-space:nowrap">22</div><div class="abs" style="left:350.56px;top:26px;width:12.2px;height:17px;background:#1f8fa5;border:1px solid #146b7c;border-radius:1px"></div><div class="abs" style="left:350.56px;top:45px;width:12.2px;height:17px;background:rgb(255,255,255);border:1px solid #5d5d5f"></div><div class="abs" style="left:356.06px;top:73px;width:14px;height:10px;color:#fff;font-size:9px;line-height:10px;transform:rotate(-45deg);transform-origin:0 100%;white-space:nowrap">23</div><div class="abs" style="left:364.08px;top:26px;width:12.2px;height:17px;background:#1f8fa5;border:1px solid #146b7c;border-radius:1px"></div><div class="abs" style="left:364.08px;top:45px;width:12.2px;height:17px;background:rgb(255,255,255);border:1px solid #5d5d5f"></div><div class="abs" style="left:369.58px;top:73px;width:14px;height:10px;color:#fff;font-size:9px;line-height:10px;transform:rotate(-45deg);transform-origin:0 100%;white-space:nowrap">24</div><div class="abs" style="left:377.60px;top:26px;width:12.2px;height:17px;background:#1f8fa5;border:1px solid #146b7c;border-radius:1px"></div><div class="abs" style="left:377.60px;top:45px;width:12.2px;height:17px;background:rgb(255,255,255);border:1px solid #5d5d5f"></div><div class="abs" style="left:383.10px;top:73px;width:14px;height:10px;color:#fff;font-size:9px;line-height:10px;transform:rotate(-45deg);transform-origin:0 100%;white-space:nowrap">25</div><div class="abs" style="left:391.12px;top:26px;width:12.2px;height:17px;background:#1f8fa5;border:1px solid #146b7c;border-radius:1px"></div><div class="abs" style="left:391.12px;top:45px;width:12.2px;height:17px;background:rgb(255,255,255);border:1px solid #5d5d5f"></div><div class="abs" style="left:396.62px;top:73px;width:14px;height:10px;color:#fff;font-size:9px;line-height:10px;transform:rotate(-45deg);transform-origin:0 100%;white-space:nowrap">26</div><div class="abs" style="left:404.64px;top:26px;width:12.2px;height:17px;background:#2a94a8;border:1px solid #146b7c;border-radius:1px"></div><div class="abs" style="left:404.64px;top:45px;width:12.2px;height:17px;background:rgb(255,255,255);border:1px solid #5d5d5f"></div><div class="abs" style="left:410.14px;top:73px;width:14px;height:10px;color:#fff;font-size:9px;line-height:10px;transform:rotate(-45deg);transform-origin:0 100%;white-space:nowrap">27</div><div class="abs" style="left:418.16px;top:26px;width:12.2px;height:17px;background:#1f8fa5;border:1px solid #146b7c;border-radius:1px"></div><div class="abs" style="left:418.16px;top:45px;width:12.2px;height:17px;background:rgb(238,245,247);border:1px solid #5d5d5f"></div><div class="abs" style="left:423.66px;top:73px;width:14px;height:10px;color:#fff;font-size:9px;line-height:10px;transform:rotate(-45deg);transform-origin:0 100%;white-space:nowrap">28</div><div class="abs" style="left:431.68px;top:26px;width:12.2px;height:17px;background:#1f8fa5;border:1px solid #146b7c;border-radius:1px"></div><div class="abs" style="left:431.68px;top:45px;width:12.2px;height:17px;background:rgb(255,255,255);border:1px solid #5d5d5f"></div><div class="abs" style="left:437.18px;top:73px;width:14px;height:10px;color:#fff;font-size:9px;line-height:10px;transform:rotate(-45deg);transform-origin:0 100%;white-space:nowrap">29</div><div class="abs" style="left:445.20px;top:26px;width:12.2px;height:17px;background:#1f8fa5;border:1px solid #146b7c;border-radius:1px"></div><div class="abs" style="left:445.20px;top:45px;width:12.2px;height:17px;background:rgb(255,255,255);border:1px solid #5d5d5f"></div><div class="abs" style="left:450.70px;top:73px;width:14px;height:10px;color:#fff;font-size:9px;line-height:10px;transform:rotate(-45deg);transform-origin:0 100%;white-space:nowrap">30</div><div class="abs" style="left:458.72px;top:26px;width:12.2px;height:17px;background:#1f8fa5;border:1px solid #146b7c;border-radius:1px"></div><div class="abs" style="left:458.72px;top:45px;width:12.2px;height:17px;background:rgb(255,255,255);border:1px solid #5d5d5f"></div><div class="abs" style="left:464.22px;top:73px;width:14px;height:10px;color:#fff;font-size:9px;line-height:10px;transform:rotate(-45deg);transform-origin:0 100%;white-space:nowrap">31</div><div class="abs" style="left:472.24px;top:26px;width:12.2px;height:17px;background:#1f8fa5;border:1px solid #146b7c;border-radius:1px"></div><div class="abs" style="left:472.24px;top:45px;width:12.2px;height:17px;background:rgb(238,245,247);border:1px solid #5d5d5f"></div><div class="abs" style="left:477.74px;top:73px;width:14px;height:10px;color:#fff;font-size:9px;line-height:10px;transform:rotate(-45deg);transform-origin:0 100%;white-space:nowrap">32</div><div class="abs" style="left:485.76px;top:26px;width:12.2px;height:17px;background:#1f8fa5;border:1px solid #146b7c;border-radius:1px"></div><div class="abs" style="left:485.76px;top:45px;width:12.2px;height:17px;background:rgb(255,255,255);border:1px solid #5d5d5f"></div><div class="abs" style="left:491.26px;top:73px;width:14px;height:10px;color:#fff;font-size:9px;line-height:10px;transform:rotate(-45deg);transform-origin:0 100%;white-space:nowrap">33</div><div class="abs" style="left:499.28px;top:26px;width:12.2px;height:17px;background:#1f8fa5;border:1px solid #146b7c;border-radius:1px"></div><div class="abs" style="left:499.28px;top:45px;width:12.2px;height:17px;background:rgb(222,235,240);border:1px solid #5d5d5f"></div><div class="abs" style="left:504.78px;top:73px;width:14px;height:10px;color:#fff;font-size:9px;line-height:10px;transform:rotate(-45deg);transform-origin:0 100%;white-space:nowrap">34</div><div class="abs" style="left:512.80px;top:26px;width:12.2px;height:17px;background:#1f8fa5;border:1px solid #146b7c;border-radius:1px"></div><div class="abs" style="left:512.80px;top:45px;width:12.2px;height:17px;background:rgb(226,238,242);border:1px solid #5d5d5f"></div><div class="abs" style="left:518.30px;top:73px;width:14px;height:10px;color:#fff;font-size:9px;line-height:10px;transform:rotate(-45deg);transform-origin:0 100%;white-space:nowrap">35</div><div class="abs" style="left:526.32px;top:26px;width:12.2px;height:17px;background:#1f8fa5;border:1px solid #146b7c;border-radius:1px"></div><div class="abs" style="left:526.32px;top:45px;width:12.2px;height:17px;background:rgb(212,229,235);border:1px solid #5d5d5f"></div><div class="abs" style="left:531.82px;top:73px;width:14px;height:10px;color:#fff;font-size:9px;line-height:10px;transform:rotate(-45deg);transform-origin:0 100%;white-space:nowrap">36</div><div class="abs" style="left:539.84px;top:26px;width:12.2px;height:17px;background:#1f8fa5;border:1px solid #146b7c;border-radius:1px"></div><div class="abs" style="left:539.84px;top:45px;width:12.2px;height:17px;background:rgb(243,248,249);border:1px solid #5d5d5f"></div><div class="abs" style="left:545.34px;top:73px;width:14px;height:10px;color:#fff;font-size:9px;line-height:10px;transform:rotate(-45deg);transform-origin:0 100%;white-space:nowrap">37</div><div class="abs" style="left:553.36px;top:26px;width:12.2px;height:17px;background:#1f8fa5;border:1px solid #146b7c;border-radius:1px"></div><div class="abs" style="left:553.36px;top:45px;width:12.2px;height:17px;background:rgb(230,240,243);border:1px solid #5d5d5f"></div><div class="abs" style="left:558.86px;top:73px;width:14px;height:10px;color:#fff;font-size:9px;line-height:10px;transform:rotate(-45deg);transform-origin:0 100%;white-space:nowrap">38</div><div class="abs" style="left:566.88px;top:26px;width:12.2px;height:17px;background:#1f8fa5;border:1px solid #146b7c;border-radius:1px"></div><div class="abs" style="left:566.88px;top:45px;width:12.2px;height:17px;background:rgb(255,255,255);border:1px solid #5d5d5f"></div><div class="abs" style="left:572.38px;top:73px;width:14px;height:10px;color:#fff;font-size:9px;line-height:10px;transform:rotate(-45deg);transform-origin:0 100%;white-space:nowrap">39</div><div class="abs" style="left:580.40px;top:26px;width:12.2px;height:17px;background:#1f8fa5;border:1px solid #146b7c;border-radius:1px"></div><div class="abs" style="left:580.40px;top:45px;width:12.2px;height:17px;background:rgb(255,255,255);border:1px solid #5d5d5f"></div><div class="abs" style="left:585.90px;top:73px;width:14px;height:10px;color:#fff;font-size:9px;line-height:10px;transform:rotate(-45deg);transform-origin:0 100%;white-space:nowrap">40</div><div class="abs" style="left:593.92px;top:26px;width:12.2px;height:17px;background:#1f8fa5;border:1px solid #146b7c;border-radius:1px"></div><div class="abs" style="left:593.92px;top:45px;width:12.2px;height:17px;background:rgb(255,255,255);border:1px solid #5d5d5f"></div><div class="abs" style="left:599.42px;top:73px;width:14px;height:10px;color:#fff;font-size:9px;line-height:10px;transform:rotate(-45deg);transform-origin:0 100%;white-space:nowrap">41</div><div class="abs" style="left:607.44px;top:26px;width:12.2px;height:17px;background:#1f8fa5;border:1px solid #146b7c;border-radius:1px"></div><div class="abs" style="left:607.44px;top:45px;width:12.2px;height:17px;background:rgb(255,255,255);border:1px solid #5d5d5f"></div><div class="abs" style="left:612.94px;top:73px;width:14px;height:10px;color:#fff;font-size:9px;line-height:10px;transform:rotate(-45deg);transform-origin:0 100%;white-space:nowrap">42</div></div>
<div class="inp" style="left:390.5px;top:236.5px;width:150px;height:23px;line-height:19px">Search Class</div>
<div class="btn" style="left:390px;top:266px;width:72px;height:21px;line-height:19px">Filter List</div>
<div class="btn" style="left:467px;top:266px;width:72px;height:21px;line-height:19px">Reset List</div>
<div class="abs" style="left:388px;top:290px;width:152px;height:516px;background:#fff;border:2px solid #a8a8a8;border-radius:4px;overflow:hidden"><div class="abs" style="left:0;top:0px;width:142px;height:30px;background:#d6878f;border-bottom:1.5px solid #c9ccd2;color:#222;font-size:10px;line-height:37px;padding-left:5px;">0:<span style="display:inline-block;width:14px;height:14px;border-radius:50%;border:1.5px solid #d33;background:#fff;font-size:6.3px;line-height:11px;text-align:center;color:#000;vertical-align:middle;margin:-2px 3px 0 3px;text-shadow:none;font-weight:bold;letter-spacing:-0.4px">20</span>Speed limit (20km/h)</div><div class="abs" style="left:0;top:30px;width:142px;height:31px;background:#f0cea6;border-bottom:1.5px solid #c9ccd2;color:#222;font-size:10px;line-height:38px;padding-left:5px;">1:<span style="display:inline-block;width:14px;height:14px;border-radius:50%;border:1.5px solid #d33;background:#fff;font-size:6.3px;line-height:11px;text-align:center;color:#000;vertical-align:middle;margin:-2px 3px 0 3px;text-shadow:none;font-weight:bold;letter-spacing:-0.4px">30</span>Speed limit (30km/h)</div><div class="abs" style="left:0;top:61px;width:142px;height:31px;background:#ebe4a8;border-bottom:1.5px solid #c9ccd2;color:#222;font-size:10px;line-height:38px;padding-left:5px;">2:<span style="display:inline-block;width:14px;height:14px;border-radius:50%;border:1.5px solid #d33;background:#fff;font-size:6.3px;line-height:11px;text-align:center;color:#000;vertical-align:middle;margin:-2px 3px 0 3px;text-shadow:none;font-weight:bold;letter-spacing:-0.4px">50</span>Speed limit (50km/h)</div><div class="abs" style="left:0;top:92px;width:142px;height:31px;background:#9bc2b7;border-bottom:1.5px solid #c9ccd2;color:#222;font-size:10px;line-height:38px;padding-left:5px;">3:<span style="display:inline-block;width:14px;height:14px;border-radius:50%;border:1.5px solid #d33;background:#fff;font-size:6.3px;line-height:11px;text-align:center;color:#000;vertical-align:middle;margin:-2px 3px 0 3px;text-shadow:none;font-weight:bold;letter-spacing:-0.4px">60</span>Speed limit (60km/h)</div><div class="abs" style="left:0;top:123px;width:142px;height:30px;background:#a9c4a5;border-bottom:1.5px solid #c9ccd2;color:#222;font-size:10px;line-height:37px;padding-left:5px;">4:<span style="display:inline-block;width:14px;height:14px;border-radius:50%;border:1.5px solid #d33;background:#fff;font-size:6.3px;line-height:11px;text-align:center;color:#000;vertical-align:middle;margin:-2px 3px 0 3px;text-shadow:none;font-weight:bold;letter-spacing:-0.4px">70</span>Speed limit (70km/h)</div><div class="abs" style="left:0;top:153px;width:142px;height:41px;background:#88aec9;border-bottom:1.5px solid #c9ccd2;color:#fff;font-size:10px;line-height:11px;padding:12px 0 0 5px;text-shadow:0 0 1px #000,0 0 1px #000,0 0 1px #000;font-weight:bold;">5:<span style="display:inline-block;width:14px;height:14px;border-radius:50%;border:1.5px solid #d33;background:#fff;font-size:6.3px;line-height:11px;text-align:center;color:#000;vertical-align:middle;margin:-2px 3px 0 3px;text-shadow:none;font-weight:bold;letter-spacing:-0.4px">80</span>Speed limit (80km/h)<br>(current)</div><div class="abs" style="left:0;top:194px;width:142px;height:41px;background:#8b7cbb;border-bottom:1.5px solid #c9ccd2;color:#222;font-size:10px;line-height:11px;padding:12px 0 0 5px;">6:<span style="display:inline-block;width:14px;height:14px;border-radius:50%;border:1.5px solid #bbb;background:linear-gradient(135deg,#fff 40%,#666 45%,#666 55%,#ddd 60%);font-size:6.3px;line-height:11px;text-align:center;color:#000;vertical-align:middle;margin:-2px 3px 0 3px;text-shadow:none;font-weight:bold;letter-spacing:-0.4px">80</span>End of speed limit<br>(80km/h)</div><div class="abs" style="left:0;top:235px;width:142px;height:31px;background:#cb8bc8;border-bottom:1.5px solid #c9ccd2;color:#222;font-size:10px;line-height:38px;padding-left:5px;">7:<span style="display:inline-block;width:14px;height:14px;border-radius:50%;border:1.5px solid #d33;background:#fff;font-size:6.3px;line-height:11px;text-align:center;color:#000;vertical-align:middle;margin:-2px 3px 0 3px;text-shadow:none;font-weight:bold;letter-spacing:-0.4px">100</span>Speed limit (100km/h)</div><div class="abs" style="left:0;top:266px;width:142px;height:30px;background:#b1a49a;border-bottom:1.5px solid #c9ccd2;color:#222;font-size:10px;line-height:37px;padding-left:5px;">8:<span style="display:inline-block;width:14px;height:14px;border-radius:50%;border:1.5px solid #d33;background:#fff;font-size:6.3px;line-height:11px;text-align:center;color:#000;vertical-align:middle;margin:-2px 3px 0 3px;text-shadow:none;font-weight:bold;letter-spacing:-0.4px">120</span>Speed limit (120km/h)</div><div class="abs" style="left:142px;top:0;width:8px;height:514px;background:#9a9a9a"></div></div>
<div class="abs" style="left:546px;top:237px;width:387px;height:270px;border:2.5px solid #1fc8d0;border-radius:6px;background:#1f1c21;overflow:hidden"><svg class="abs" style="left:0;top:0" width="383" height="266"><path d="M172.4,-6.6 L179.8,-2.3 L179.8,6.3 L172.4,10.6 L164.9,6.3 L164.9,-2.3Z" fill="#2d2a2e"/><path d="M186.4,-6.6 L193.8,-2.3 L193.8,6.3 L186.4,10.6 L178.9,6.3 L178.9,-2.3Z" fill="#2d2a2e"/><path d="M200.4,-6.6 L207.9,-2.3 L207.9,6.3 L200.4,10.6 L193.0,6.3 L193.0,-2.3Z" fill="#2d2a2e"/><path d="M151.3,5.5 L158.8,9.8 L158.8,18.4 L151.3,22.8 L143.9,18.4 L143.9,9.8Z" fill="#2d2a2e"/><path d="M165.3,5.5 L172.8,9.8 L172.8,18.4 L165.3,22.8 L157.9,18.4 L157.9,9.8Z" fill="#2d2a2e"/><path d="M179.4,5.5 L186.8,9.8 L186.8,18.4 L179.4,22.8 L171.9,18.4 L171.9,9.8Z" fill="#2d2a2e"/><path d="M193.4,5.5 L200.8,9.8 L200.8,18.4 L193.4,22.8 L186.0,18.4 L186.0,9.8Z" fill="#2d2a2e"/><path d="M207.4,5.5 L214.9,9.8 L214.9,18.4 L207.4,22.8 L200.0,18.4 L200.0,9.8Z" fill="#2d2a2e"/><path d="M221.5,5.5 L228.9,9.8 L228.9,18.4 L221.5,22.8 L214.0,18.4 L214.0,9.8Z" fill="#2d2a2e"/><path d="M235.5,5.5 L242.9,9.8 L242.9,18.4 L235.5,22.8 L228.0,18.4 L228.0,9.8Z" fill="#2d2a2e"/><path d="M130.3,17.7 L137.7,22.0 L137.7,30.6 L130.3,34.9 L122.8,30.6 L122.8,22.0Z" fill="#2d2a2e"/><path d="M144.3,17.7 L151.7,22.0 L151.7,30.6 L144.3,34.9 L136.8,30.6 L136.8,22.0Z" fill="#2d2a2e"/><path d="M158.3,17.7 L165.8,22.0 L165.8,30.6 L158.3,34.9 L150.9,30.6 L150.9,22.0Z" fill="#2d2a2e"/><path d="M172.4,17.7 L179.8,22.0 L179.8,30.6 L172.4,34.9 L164.9,30.6 L164.9,22.0Z" fill="#211e23"/><path d="M186.4,17.7 L193.8,22.0 L193.8,30.6 L186.4,34.9 L178.9,30.6 L178.9,22.0Z" fill="#2d2a2e"/><path d="M200.4,17.7 L207.9,22.0 L207.9,30.6 L200.4,34.9 L193.0,30.6 L193.0,22.0Z" fill="#211e23"/><path d="M214.4,17.7 L221.9,22.0 L221.9,30.6 L214.4,34.9 L207.0,30.6 L207.0,22.0Z" fill="#45353a"/><path d="M228.5,17.7 L235.9,22.0 L235.9,30.6 L228.5,34.9 L221.0,30.6 L221.0,22.0Z" fill="#45353a"/><path d="M242.5,17.7 L250.0,22.0 L250.0,30.6 L242.5,34.9 L235.1,30.6 L235.1,22.0Z" fill="#45353a"/><path d="M256.5,17.7 L264.0,22.0 L264.0,30.6 L256.5,34.9 L249.1,30.6 L249.1,22.0Z" fill="#2d2a2e"/><path d="M109.2,29.8 L116.7,34.1 L116.7,42.7 L109.2,47.0 L101.8,42.7 L101.8,34.1Z" fill="#2d2a2e"/><path d="M123.3,29.8 L130.7,34.1 L130.7,42.7 L123.3,47.0 L115.8,42.7 L115.8,34.1Z" fill="#211e23"/><path d="M137.3,29.8 L144.7,34.1 L144.7,42.7 L137.3,47.0 L129.8,42.7 L129.8,34.1Z" fill="#2d2a2e"/><path d="M151.3,29.8 L158.8,34.1 L158.8,42.7 L151.3,47.0 L143.9,42.7 L143.9,34.1Z" fill="#2d2a2e"/><path d="M165.3,29.8 L172.8,34.1 L172.8,42.7 L165.3,47.0 L157.9,42.7 L157.9,34.1Z" fill="#2d2a2e"/><path d="M179.4,29.8 L186.8,34.1 L186.8,42.7 L179.4,47.0 L171.9,42.7 L171.9,34.1Z" fill="#2d2a2e"/><path d="M193.4,29.8 L200.8,34.1 L200.8,42.7 L193.4,47.0 L186.0,42.7 L186.0,34.1Z" fill="#2d2a2e"/><path d="M207.4,29.8 L214.9,34.1 L214.9,42.7 L207.4,47.0 L200.0,42.7 L200.0,34.1Z" fill="#2d2a2e"/><path d="M221.5,29.8 L228.9,34.1 L228.9,42.7 L221.5,47.0 L214.0,42.7 L214.0,34.1Z" fill="#45353a"/><path d="M235.5,29.8 L242.9,34.1 L242.9,42.7 L235.5,47.0 L228.0,42.7 L228.0,34.1Z" fill="#45353a"/><path d="M249.5,29.8 L257.0,34.1 L257.0,42.7 L249.5,47.0 L242.1,42.7 L242.1,34.1Z" fill="#2d2a2e"/><path d="M263.5,29.8 L271.0,34.1 L271.0,42.7 L263.5,47.0 L256.1,42.7 L256.1,34.1Z" fill="#2d2a2e"/><path d="M88.2,42.0 L95.6,46.3 L95.6,54.9 L88.2,59.2 L80.7,54.9 L80.7,46.3Z" fill="#2d2a2e"/><path d="M102.2,42.0 L109.7,46.3 L109.7,54.9 L102.2,59.2 L94.8,54.9 L94.8,46.3Z" fill="#2d2a2e"/><path d="M116.2,42.0 L123.7,46.3 L123.7,54.9 L116.2,59.2 L108.8,54.9 L108.8,46.3Z" fill="#2d2a2e"/><path d="M130.3,42.0 L137.7,46.3 L137.7,54.9 L130.3,59.2 L122.8,54.9 L122.8,46.3Z" fill="#2d2a2e"/><path d="M144.3,42.0 L151.7,46.3 L151.7,54.9 L144.3,59.2 L136.8,54.9 L136.8,46.3Z" fill="#2d2a2e"/><path d="M158.3,42.0 L165.8,46.3 L165.8,54.9 L158.3,59.2 L150.9,54.9 L150.9,46.3Z" fill="#2d2a2e"/><path d="M172.4,42.0 L179.8,46.3 L179.8,54.9 L172.4,59.2 L164.9,54.9 L164.9,46.3Z" fill="#2d2a2e"/><path d="M186.4,42.0 L193.8,46.3 L193.8,54.9 L186.4,59.2 L178.9,54.9 L178.9,46.3Z" fill="#2d2a2e"/><path d="M200.4,42.0 L207.9,46.3 L207.9,54.9 L200.4,59.2 L193.0,54.9 L193.0,46.3Z" fill="#2d2a2e"/><path d="M214.4,42.0 L221.9,46.3 L221.9,54.9 L214.4,59.2 L207.0,54.9 L207.0,46.3Z" fill="#45353a"/><path d="M228.5,42.0 L235.9,46.3 L235.9,54.9 L228.5,59.2 L221.0,54.9 L221.0,46.3Z" fill="#45353a"/><path d="M242.5,42.0 L250.0,46.3 L250.0,54.9 L242.5,59.2 L235.1,54.9 L235.1,46.3Z" fill="#45353a"/><path d="M256.5,42.0 L264.0,46.3 L264.0,54.9 L256.5,59.2 L249.1,54.9 L249.1,46.3Z" fill="#2d2a2e"/><path d="M270.6,42.0 L278.0,46.3 L278.0,54.9 L270.6,59.2 L263.1,54.9 L263.1,46.3Z" fill="#2d2a2e"/><path d="M284.6,42.0 L292.0,46.3 L292.0,54.9 L284.6,59.2 L277.1,54.9 L277.1,46.3Z" fill="#2d2a2e"/><path d="M81.2,54.1 L88.6,58.5 L88.6,67.0 L81.2,71.3 L73.7,67.0 L73.7,58.5Z" fill="#2d2a2e"/><path d="M95.2,54.1 L102.6,58.5 L102.6,67.0 L95.2,71.3 L87.7,67.0 L87.7,58.5Z" fill="#2d2a2e"/><path d="M109.2,54.1 L116.7,58.5 L116.7,67.0 L109.2,71.3 L101.8,67.0 L101.8,58.5Z" fill="#2d2a2e"/><path d="M123.3,54.1 L130.7,58.5 L130.7,67.0 L123.3,71.3 L115.8,67.0 L115.8,58.5Z" fill="#2d2a2e"/><path d="M137.3,54.1 L144.7,58.5 L144.7,67.0 L137.3,71.3 L129.8,67.0 L129.8,58.5Z" fill="#2d2a2e"/><path d="M151.3,54.1 L158.8,58.5 L158.8,67.0 L151.3,71.3 L143.9,67.0 L143.9,58.5Z" fill="#2d2a2e"/><path d="M165.3,54.1 L172.8,58.5 L172.8,67.0 L165.3,71.3 L157.9,67.0 L157.9,58.5Z" fill="#2d2a2e"/><path d="M179.4,54.1 L186.8,58.5 L186.8,67.0 L179.4,71.3 L171.9,67.0 L171.9,58.5Z" fill="#2d2a2e"/><path d="M193.4,54.1 L200.8,58.5 L200.8,67.0 L193.4,71.3 L186.0,67.0 L186.0,58.5Z" fill="#2d2a2e"/><path d="M207.4,54.1 L214.9,58.5 L214.9,67.0 L207.4,71.3 L200.0,67.0 L200.0,58.5Z" fill="#2d2a2e"/><path d="M221.5,54.1 L228.9,58.5 L228.9,67.0 L221.5,71.3 L214.0,67.0 L214.0,58.5Z" fill="#45353a"/><path d="M235.5,54.1 L242.9,58.5 L242.9,67.0 L235.5,71.3 L228.0,67.0 L228.0,58.5Z" fill="#45353a"/><path d="M249.5,54.1 L257.0,58.5 L257.0,67.0 L249.5,71.3 L242.1,67.0 L242.1,58.5Z" fill="#2d2a2e"/><path d="M263.5,54.1 L271.0,58.5 L271.0,67.0 L263.5,71.3 L256.1,67.0 L256.1,58.5Z" fill="#211e23"/><path d="M277.6,54.1 L285.0,58.5 L285.0,67.0 L277.6,71.3 L270.1,67.0 L270.1,58.5Z" fill="#2d2a2e"/><path d="M291.6,54.1 L299.1,58.5 L299.1,67.0 L291.6,71.3 L284.2,67.0 L284.2,58.5Z" fill="#2d2a2e"/><path d="M74.1,66.3 L81.6,70.6 L81.6,79.2 L74.1,83.5 L66.7,79.2 L66.7,70.6Z" fill="#2d2a2e"/><path d="M88.2,66.3 L95.6,70.6 L95.6,79.2 L88.2,83.5 L80.7,79.2 L80.7,70.6Z" fill="#2d2a2e"/><path d="M102.2,66.3 L109.7,70.6 L109.7,79.2 L102.2,83.5 L94.8,79.2 L94.8,70.6Z" fill="#2d2a2e"/><path d="M116.2,66.3 L123.7,70.6 L123.7,79.2 L116.2,83.5 L108.8,79.2 L108.8,70.6Z" fill="#2d2a2e"/><path d="M130.3,66.3 L137.7,70.6 L137.7,79.2 L130.3,83.5 L122.8,79.2 L122.8,70.6Z" fill="#2d2a2e"/><path d="M144.3,66.3 L151.7,70.6 L151.7,79.2 L144.3,83.5 L136.8,79.2 L136.8,70.6Z" fill="#211e23"/><path d="M158.3,66.3 L165.8,70.6 L165.8,79.2 L158.3,83.5 L150.9,79.2 L150.9,70.6Z" fill="#2d2a2e"/><path d="M172.4,66.3 L179.8,70.6 L179.8,79.2 L172.4,83.5 L164.9,79.2 L164.9,70.6Z" fill="#2d2a2e"/><path d="M186.4,66.3 L193.8,70.6 L193.8,79.2 L186.4,83.5 L178.9,79.2 L178.9,70.6Z" fill="#2d2a2e"/><path d="M200.4,66.3 L207.9,70.6 L207.9,79.2 L200.4,83.5 L193.0,79.2 L193.0,70.6Z" fill="#2d2a2e"/><path d="M214.4,66.3 L221.9,70.6 L221.9,79.2 L214.4,83.5 L207.0,79.2 L207.0,70.6Z" fill="#2d2a2e"/><path d="M228.5,66.3 L235.9,70.6 L235.9,79.2 L228.5,83.5 L221.0,79.2 L221.0,70.6Z" fill="#2d2a2e"/><path d="M242.5,66.3 L250.0,70.6 L250.0,79.2 L242.5,83.5 L235.1,79.2 L235.1,70.6Z" fill="#2d2a2e"/><path d="M256.5,66.3 L264.0,70.6 L264.0,79.2 L256.5,83.5 L249.1,79.2 L249.1,70.6Z" fill="#2d2a2e"/><path d="M270.6,66.3 L278.0,70.6 L278.0,79.2 L270.6,83.5 L263.1,79.2 L263.1,70.6Z" fill="#211e23"/><path d="M284.6,66.3 L292.0,70.6 L292.0,79.2 L284.6,83.5 L277.1,79.2 L277.1,70.6Z" fill="#2d2a2e"/><path d="M298.6,66.3 L306.1,70.6 L306.1,79.2 L298.6,83.5 L291.2,79.2 L291.2,70.6Z" fill="#2d2a2e"/><path d="M81.2,78.5 L88.6,82.8 L88.6,91.3 L81.2,95.6 L73.7,91.3 L73.7,82.8Z" fill="#2d2a2e"/><path d="M95.2,78.5 L102.6,82.8 L102.6,91.3 L95.2,95.6 L87.7,91.3 L87.7,82.8Z" fill="#2d2a2e"/><path d="M109.2,78.5 L116.7,82.8 L116.7,91.3 L109.2,95.6 L101.8,91.3 L101.8,82.8Z" fill="#211e23"/><path d="M123.3,78.5 L130.7,82.8 L130.7,91.3 L123.3,95.6 L115.8,91.3 L115.8,82.8Z" fill="#2d2a2e"/><path d="M137.3,78.5 L144.7,82.8 L144.7,91.3 L137.3,95.6 L129.8,91.3 L129.8,82.8Z" fill="#2d2a2e"/><path d="M151.3,78.5 L158.8,82.8 L158.8,91.3 L151.3,95.6 L143.9,91.3 L143.9,82.8Z" fill="#2d2a2e"/><path d="M165.3,78.5 L172.8,82.8 L172.8,91.3 L165.3,95.6 L157.9,91.3 L157.9,82.8Z" fill="#2d2a2e"/><path d="M179.4,78.5 L186.8,82.8 L186.8,91.3 L179.4,95.6 L171.9,91.3 L171.9,82.8Z" fill="#2d2a2e"/><path d="M193.4,78.5 L200.8,82.8 L200.8,91.3 L193.4,95.6 L186.0,91.3 L186.0,82.8Z" fill="#2d2a2e"/><path d="M207.4,78.5 L214.9,82.8 L214.9,91.3 L207.4,95.6 L200.0,91.3 L200.0,82.8Z" fill="#2d2a2e"/><path d="M221.5,78.5 L228.9,82.8 L228.9,91.3 L221.5,95.6 L214.0,91.3 L214.0,82.8Z" fill="#2d2a2e"/><path d="M235.5,78.5 L242.9,82.8 L242.9,91.3 L235.5,95.6 L228.0,91.3 L228.0,82.8Z" fill="#2d2a2e"/><path d="M249.5,78.5 L257.0,82.8 L257.0,91.3 L249.5,95.6 L242.1,91.3 L242.1,82.8Z" fill="#2d2a2e"/><path d="M263.5,78.5 L271.0,82.8 L271.0,91.3 L263.5,95.6 L256.1,91.3 L256.1,82.8Z" fill="#211e23"/><path d="M277.6,78.5 L285.0,82.8 L285.0,91.3 L277.6,95.6 L270.1,91.3 L270.1,82.8Z" fill="#2d2a2e"/><path d="M291.6,78.5 L299.1,82.8 L299.1,91.3 L291.6,95.6 L284.2,91.3 L284.2,82.8Z" fill="#211e23"/><path d="M74.1,90.6 L81.6,94.9 L81.6,103.5 L74.1,107.8 L66.7,103.5 L66.7,94.9Z" fill="#2d2a2e"/><path d="M88.2,90.6 L95.6,94.9 L95.6,103.5 L88.2,107.8 L80.7,103.5 L80.7,94.9Z" fill="#2d2a2e"/><path d="M102.2,90.6 L109.7,94.9 L109.7,103.5 L102.2,107.8 L94.8,103.5 L94.8,94.9Z" fill="#2d2a2e"/><path d="M116.2,90.6 L123.7,94.9 L123.7,103.5 L116.2,107.8 L108.8,103.5 L108.8,94.9Z" fill="#2d2a2e"/><path d="M130.3,90.6 L137.7,94.9 L137.7,103.5 L130.3,107.8 L122.8,103.5 L122.8,94.9Z" fill="#2d2a2e"/><path d="M144.3,90.6 L151.7,94.9 L151.7,103.5 L144.3,107.8 L136.8,103.5 L136.8,94.9Z" fill="#2d2a2e"/><path d="M158.3,90.6 L165.8,94.9 L165.8,103.5 L158.3,107.8 L150.9,103.5 L150.9,94.9Z" fill="#2d2a2e"/><path d="M172.4,90.6 L179.8,94.9 L179.8,103.5 L172.4,107.8 L164.9,103.5 L164.9,94.9Z" fill="#2d2a2e"/><path d="M186.4,90.6 L193.8,94.9 L193.8,103.5 L186.4,107.8 L178.9,103.5 L178.9,94.9Z" fill="#433a37"/><path d="M200.4,90.6 L207.9,94.9 L207.9,103.5 L200.4,107.8 L193.0,103.5 L193.0,94.9Z" fill="#433a37"/><path d="M214.4,90.6 L221.9,94.9 L221.9,103.5 L214.4,107.8 L207.0,103.5 L207.0,94.9Z" fill="#433a37"/><path d="M228.5,90.6 L235.9,94.9 L235.9,103.5 L228.5,107.8 L221.0,103.5 L221.0,94.9Z" fill="#433a37"/><path d="M242.5,90.6 L250.0,94.9 L250.0,103.5 L242.5,107.8 L235.1,103.5 L235.1,94.9Z" fill="#433a37"/><path d="M256.5,90.6 L264.0,94.9 L264.0,103.5 L256.5,107.8 L249.1,103.5 L249.1,94.9Z" fill="#433a37"/><path d="M270.6,90.6 L278.0,94.9 L278.0,103.5 L270.6,107.8 L263.1,103.5 L263.1,94.9Z" fill="#433a37"/><path d="M284.6,90.6 L292.0,94.9 L292.0,103.5 L284.6,107.8 L277.1,103.5 L277.1,94.9Z" fill="#433a37"/><path d="M298.6,90.6 L306.1,94.9 L306.1,103.5 L298.6,107.8 L291.2,103.5 L291.2,94.9Z" fill="#211e23"/><path d="M67.1,102.8 L74.6,107.0 L74.6,115.6 L67.1,119.9 L59.7,115.6 L59.7,107.0Z" fill="#211e23"/><path d="M81.2,102.8 L88.6,107.0 L88.6,115.6 L81.2,119.9 L73.7,115.6 L73.7,107.0Z" fill="#2d2a2e"/><path d="M95.2,102.8 L102.6,107.0 L102.6,115.6 L95.2,119.9 L87.7,115.6 L87.7,107.0Z" fill="#2d2a2e"/><path d="M109.2,102.8 L116.7,107.0 L116.7,115.6 L109.2,119.9 L101.8,115.6 L101.8,107.0Z" fill="#2d2a2e"/><path d="M123.3,102.8 L130.7,107.0 L130.7,115.6 L123.3,119.9 L115.8,115.6 L115.8,107.0Z" fill="#2d2a2e"/><path d="M137.3,102.8 L144.7,107.0 L144.7,115.6 L137.3,119.9 L129.8,115.6 L129.8,107.0Z" fill="#2d2a2e"/><path d="M151.3,102.8 L158.8,107.0 L158.8,115.6 L151.3,119.9 L143.9,115.6 L143.9,107.0Z" fill="#2d2a2e"/><path d="M165.3,102.8 L172.8,107.0 L172.8,115.6 L165.3,119.9 L157.9,115.6 L157.9,107.0Z" fill="#2d2a2e"/><path d="M179.4,102.8 L186.8,107.0 L186.8,115.6 L179.4,119.9 L171.9,115.6 L171.9,107.0Z" fill="#433a37"/><path d="M193.4,102.8 L200.8,107.0 L200.8,115.6 L193.4,119.9 L186.0,115.6 L186.0,107.0Z" fill="#433a37"/><path d="M207.4,102.8 L214.9,107.0 L214.9,115.6 L207.4,119.9 L200.0,115.6 L200.0,107.0Z" fill="#433a37"/><path d="M221.5,102.8 L228.9,107.0 L228.9,115.6 L221.5,119.9 L214.0,115.6 L214.0,107.0Z" fill="#433a37"/><path d="M235.5,102.8 L242.9,107.0 L242.9,115.6 L235.5,119.9 L228.0,115.6 L228.0,107.0Z" fill="#433a37"/><path d="M249.5,102.8 L257.0,107.0 L257.0,115.6 L249.5,119.9 L242.1,115.6 L242.1,107.0Z" fill="#433a37"/><path d="M263.5,102.8 L271.0,107.0 L271.0,115.6 L263.5,119.9 L256.1,115.6 L256.1,107.0Z" fill="#433a37"/><path d="M277.6,102.8 L285.0,107.0 L285.0,115.6 L277.6,119.9 L270.1,115.6 L270.1,107.0Z" fill="#433a37"/><path d="M291.6,102.8 L299.1,107.0 L299.1,115.6 L291.6,119.9 L284.2,115.6 L284.2,107.0Z" fill="#433a37"/><path d="M305.6,102.8 L313.1,107.0 L313.1,115.6 L305.6,119.9 L298.2,115.6 L298.2,107.0Z" fill="#2d2a2e"/><path d="M60.1,114.9 L67.6,119.2 L67.6,127.8 L60.1,132.1 L52.7,127.8 L52.7,119.2Z" fill="#2d2a2e"/><path d="M74.1,114.9 L81.6,119.2 L81.6,127.8 L74.1,132.1 L66.7,127.8 L66.7,119.2Z" fill="#2d2a2e"/><path d="M88.2,114.9 L95.6,119.2 L95.6,127.8 L88.2,132.1 L80.7,127.8 L80.7,119.2Z" fill="#2d2a2e"/><path d="M102.2,114.9 L109.7,119.2 L109.7,127.8 L102.2,132.1 L94.8,127.8 L94.8,119.2Z" fill="#2d2a2e"/><path d="M116.2,114.9 L123.7,119.2 L123.7,127.8 L116.2,132.1 L108.8,127.8 L108.8,119.2Z" fill="#2d2a2e"/><path d="M130.3,114.9 L137.7,119.2 L137.7,127.8 L130.3,132.1 L122.8,127.8 L122.8,119.2Z" fill="#2d2a2e"/><path d="M144.3,114.9 L151.7,119.2 L151.7,127.8 L144.3,132.1 L136.8,127.8 L136.8,119.2Z" fill="#2d2a2e"/><path d="M158.3,114.9 L165.8,119.2 L165.8,127.8 L158.3,132.1 L150.9,127.8 L150.9,119.2Z" fill="#2d2a2e"/><path d="M172.4,114.9 L179.8,119.2 L179.8,127.8 L172.4,132.1 L164.9,127.8 L164.9,119.2Z" fill="#2d2a2e"/><path d="M186.4,114.9 L193.8,119.2 L193.8,127.8 L186.4,132.1 L178.9,127.8 L178.9,119.2Z" fill="#433a37"/><path d="M200.4,114.9 L207.9,119.2 L207.9,127.8 L200.4,132.1 L193.0,127.8 L193.0,119.2Z" fill="#433a37"/><path d="M214.4,114.9 L221.9,119.2 L221.9,127.8 L214.4,132.1 L207.0,127.8 L207.0,119.2Z" fill="#433a37"/><path d="M228.5,114.9 L235.9,119.2 L235.9,127.8 L228.5,132.1 L221.0,127.8 L221.0,119.2Z" fill="#433a37"/><path d="M242.5,114.9 L250.0,119.2 L250.0,127.8 L242.5,132.1 L235.1,127.8 L235.1,119.2Z" fill="#433a37"/><path d="M256.5,114.9 L264.0,119.2 L264.0,127.8 L256.5,132.1 L249.1,127.8 L249.1,119.2Z" fill="#433a37"/><path d="M270.6,114.9 L278.0,119.2 L278.0,127.8 L270.6,132.1 L263.1,127.8 L263.1,119.2Z" fill="#433a37"/><path d="M284.6,114.9 L292.0,119.2 L292.0,127.8 L284.6,132.1 L277.1,127.8 L277.1,119.2Z" fill="#433a37"/><path d="M298.6,114.9 L306.1,119.2 L306.1,127.8 L298.6,132.1 L291.2,127.8 L291.2,119.2Z" fill="#2d2a2e"/><path d="M312.7,114.9 L320.1,119.2 L320.1,127.8 L312.7,132.1 L305.2,127.8 L305.2,119.2Z" fill="#2d2a2e"/><path d="M53.1,127.1 L60.6,131.3 L60.6,140.0 L53.1,144.2 L45.7,140.0 L45.7,131.3Z" fill="#2d2a2e"/><path d="M67.1,127.1 L74.6,131.3 L74.6,140.0 L67.1,144.2 L59.7,140.0 L59.7,131.3Z" fill="#2d2a2e"/><path d="M81.2,127.1 L88.6,131.3 L88.6,140.0 L81.2,144.2 L73.7,140.0 L73.7,131.3Z" fill="#2d2a2e"/><path d="M95.2,127.1 L102.6,131.3 L102.6,140.0 L95.2,144.2 L87.7,140.0 L87.7,131.3Z" fill="#2d2a2e"/><path d="M109.2,127.1 L116.7,131.3 L116.7,140.0 L109.2,144.2 L101.8,140.0 L101.8,131.3Z" fill="#2d2a2e"/><path d="M123.3,127.1 L130.7,131.3 L130.7,140.0 L123.3,144.2 L115.8,140.0 L115.8,131.3Z" fill="#2d2a2e"/><path d="M137.3,127.1 L144.7,131.3 L144.7,140.0 L137.3,144.2 L129.8,140.0 L129.8,131.3Z" fill="#2d2a2e"/><path d="M151.3,127.1 L158.8,131.3 L158.8,140.0 L151.3,144.2 L143.9,140.0 L143.9,131.3Z" fill="#211e23"/><path d="M165.3,127.1 L172.8,131.3 L172.8,140.0 L165.3,144.2 L157.9,140.0 L157.9,131.3Z" fill="#2d2a2e"/><path d="M179.4,127.1 L186.8,131.3 L186.8,140.0 L179.4,144.2 L171.9,140.0 L171.9,131.3Z" fill="#433a37"/><path d="M193.4,127.1 L200.8,131.3 L200.8,140.0 L193.4,144.2 L186.0,140.0 L186.0,131.3Z" fill="#433a37"/><path d="M207.4,127.1 L214.9,131.3 L214.9,140.0 L207.4,144.2 L200.0,140.0 L200.0,131.3Z" fill="#433a37"/><path d="M221.5,127.1 L228.9,131.3 L228.9,140.0 L221.5,144.2 L214.0,140.0 L214.0,131.3Z" fill="#433a37"/><path d="M235.5,127.1 L242.9,131.3 L242.9,140.0 L235.5,144.2 L228.0,140.0 L228.0,131.3Z" fill="#433a37"/><path d="M249.5,127.1 L257.0,131.3 L257.0,140.0 L249.5,144.2 L242.1,140.0 L242.1,131.3Z" fill="#433a37"/><path d="M263.5,127.1 L271.0,131.3 L271.0,140.0 L263.5,144.2 L256.1,140.0 L256.1,131.3Z" fill="#433a37"/><path d="M277.6,127.1 L285.0,131.3 L285.0,140.0 L277.6,144.2 L270.1,140.0 L270.1,131.3Z" fill="#433a37"/><path d="M291.6,127.1 L299.1,131.3 L299.1,140.0 L291.6,144.2 L284.2,140.0 L284.2,131.3Z" fill="#433a37"/><path d="M305.6,127.1 L313.1,131.3 L313.1,140.0 L305.6,144.2 L298.2,140.0 L298.2,131.3Z" fill="#2d2a2e"/><path d="M319.7,127.1 L327.1,131.3 L327.1,140.0 L319.7,144.2 L312.2,140.0 L312.2,131.3Z" fill="#2d2a2e"/><path d="M60.1,139.2 L67.6,143.5 L67.6,152.1 L60.1,156.4 L52.7,152.1 L52.7,143.5Z" fill="#2d2a2e"/><path d="M74.1,139.2 L81.6,143.5 L81.6,152.1 L74.1,156.4 L66.7,152.1 L66.7,143.5Z" fill="#211e23"/><path d="M88.2,139.2 L95.6,143.5 L95.6,152.1 L88.2,156.4 L80.7,152.1 L80.7,143.5Z" fill="#2d2a2e"/><path d="M102.2,139.2 L109.7,143.5 L109.7,152.1 L102.2,156.4 L94.8,152.1 L94.8,143.5Z" fill="#2d2a2e"/><path d="M116.2,139.2 L123.7,143.5 L123.7,152.1 L116.2,156.4 L108.8,152.1 L108.8,143.5Z" fill="#2d2a2e"/><path d="M130.3,139.2 L137.7,143.5 L137.7,152.1 L130.3,156.4 L122.8,152.1 L122.8,143.5Z" fill="#2d2a2e"/><path d="M144.3,139.2 L151.7,143.5 L151.7,152.1 L144.3,156.4 L136.8,152.1 L136.8,143.5Z" fill="#2d2a2e"/><path d="M158.3,139.2 L165.8,143.5 L165.8,152.1 L158.3,156.4 L150.9,152.1 L150.9,143.5Z" fill="#211e23"/><path d="M172.4,139.2 L179.8,143.5 L179.8,152.1 L172.4,156.4 L164.9,152.1 L164.9,143.5Z" fill="#2d2a2e"/><path d="M186.4,139.2 L193.8,143.5 L193.8,152.1 L186.4,156.4 L178.9,152.1 L178.9,143.5Z" fill="#2d2a2e"/><path d="M200.4,139.2 L207.9,143.5 L207.9,152.1 L200.4,156.4 L193.0,152.1 L193.0,143.5Z" fill="#2d2a2e"/><path d="M214.4,139.2 L221.9,143.5 L221.9,152.1 L214.4,156.4 L207.0,152.1 L207.0,143.5Z" fill="#2d2a2e"/><path d="M228.5,139.2 L235.9,143.5 L235.9,152.1 L228.5,156.4 L221.0,152.1 L221.0,143.5Z" fill="#2d2a2e"/><path d="M242.5,139.2 L250.0,143.5 L250.0,152.1 L242.5,156.4 L235.1,152.1 L235.1,143.5Z" fill="#2d2a2e"/><path d="M256.5,139.2 L264.0,143.5 L264.0,152.1 L256.5,156.4 L249.1,152.1 L249.1,143.5Z" fill="#2d2a2e"/><path d="M270.6,139.2 L278.0,143.5 L278.0,152.1 L270.6,156.4 L263.1,152.1 L263.1,143.5Z" fill="#2d2a2e"/><path d="M284.6,139.2 L292.0,143.5 L292.0,152.1 L284.6,156.4 L277.1,152.1 L277.1,143.5Z" fill="#2d2a2e"/><path d="M298.6,139.2 L306.1,143.5 L306.1,152.1 L298.6,156.4 L291.2,152.1 L291.2,143.5Z" fill="#2d2a2e"/><path d="M312.7,139.2 L320.1,143.5 L320.1,152.1 L312.7,156.4 L305.2,152.1 L305.2,143.5Z" fill="#2d2a2e"/><path d="M67.1,151.3 L74.6,155.6 L74.6,164.2 L67.1,168.5 L59.7,164.2 L59.7,155.6Z" fill="#2d2a2e"/><path d="M81.2,151.3 L88.6,155.6 L88.6,164.2 L81.2,168.5 L73.7,164.2 L73.7,155.6Z" fill="#2d2a2e"/><path d="M95.2,151.3 L102.6,155.6 L102.6,164.2 L95.2,168.5 L87.7,164.2 L87.7,155.6Z" fill="#2d2a2e"/><path d="M109.2,151.3 L116.7,155.6 L116.7,164.2 L109.2,168.5 L101.8,164.2 L101.8,155.6Z" fill="#2d2a2e"/><path d="M123.3,151.3 L130.7,155.6 L130.7,164.2 L123.3,168.5 L115.8,164.2 L115.8,155.6Z" fill="#211e23"/><path d="M137.3,151.3 L144.7,155.6 L144.7,164.2 L137.3,168.5 L129.8,164.2 L129.8,155.6Z" fill="#2d2a2e"/><path d="M151.3,151.3 L158.8,155.6 L158.8,164.2 L151.3,168.5 L143.9,164.2 L143.9,155.6Z" fill="#2d2a2e"/><path d="M165.3,151.3 L172.8,155.6 L172.8,164.2 L165.3,168.5 L157.9,164.2 L157.9,155.6Z" fill="#2d2a2e"/><path d="M179.4,151.3 L186.8,155.6 L186.8,164.2 L179.4,168.5 L171.9,164.2 L171.9,155.6Z" fill="#2d2a2e"/><path d="M193.4,151.3 L200.8,155.6 L200.8,164.2 L193.4,168.5 L186.0,164.2 L186.0,155.6Z" fill="#2d2a2e"/><path d="M207.4,151.3 L214.9,155.6 L214.9,164.2 L207.4,168.5 L200.0,164.2 L200.0,155.6Z" fill="#2d2a2e"/><path d="M221.5,151.3 L228.9,155.6 L228.9,164.2 L221.5,168.5 L214.0,164.2 L214.0,155.6Z" fill="#2d2a2e"/><path d="M235.5,151.3 L242.9,155.6 L242.9,164.2 L235.5,168.5 L228.0,164.2 L228.0,155.6Z" fill="#2d2a2e"/><path d="M249.5,151.3 L257.0,155.6 L257.0,164.2 L249.5,168.5 L242.1,164.2 L242.1,155.6Z" fill="#2d2a2e"/><path d="M263.5,151.3 L271.0,155.6 L271.0,164.2 L263.5,168.5 L256.1,164.2 L256.1,155.6Z" fill="#2d2a2e"/><path d="M277.6,151.3 L285.0,155.6 L285.0,164.2 L277.6,168.5 L270.1,164.2 L270.1,155.6Z" fill="#2d2a2e"/><path d="M291.6,151.3 L299.1,155.6 L299.1,164.2 L291.6,168.5 L284.2,164.2 L284.2,155.6Z" fill="#2d2a2e"/><path d="M305.6,151.3 L313.1,155.6 L313.1,164.2 L305.6,168.5 L298.2,164.2 L298.2,155.6Z" fill="#2d2a2e"/><path d="M319.7,151.3 L327.1,155.6 L327.1,164.2 L319.7,168.5 L312.2,164.2 L312.2,155.6Z" fill="#2d2a2e"/><path d="M74.1,163.5 L81.6,167.8 L81.6,176.4 L74.1,180.7 L66.7,176.4 L66.7,167.8Z" fill="#2d2a2e"/><path d="M88.2,163.5 L95.6,167.8 L95.6,176.4 L88.2,180.7 L80.7,176.4 L80.7,167.8Z" fill="#2d2a2e"/><path d="M102.2,163.5 L109.7,167.8 L109.7,176.4 L102.2,180.7 L94.8,176.4 L94.8,167.8Z" fill="#2d2a2e"/><path d="M116.2,163.5 L123.7,167.8 L123.7,176.4 L116.2,180.7 L108.8,176.4 L108.8,167.8Z" fill="#2d2a2e"/><path d="M130.3,163.5 L137.7,167.8 L137.7,176.4 L130.3,180.7 L122.8,176.4 L122.8,167.8Z" fill="#2d2a2e"/><path d="M144.3,163.5 L151.7,167.8 L151.7,176.4 L144.3,180.7 L136.8,176.4 L136.8,167.8Z" fill="#2d2a2e"/><path d="M158.3,163.5 L165.8,167.8 L165.8,176.4 L158.3,180.7 L150.9,176.4 L150.9,167.8Z" fill="#2d2a2e"/><path d="M172.4,163.5 L179.8,167.8 L179.8,176.4 L172.4,180.7 L164.9,176.4 L164.9,167.8Z" fill="#2d2a2e"/><path d="M186.4,163.5 L193.8,167.8 L193.8,176.4 L186.4,180.7 L178.9,176.4 L178.9,167.8Z" fill="#2d2a2e"/><path d="M200.4,163.5 L207.9,167.8 L207.9,176.4 L200.4,180.7 L193.0,176.4 L193.0,167.8Z" fill="#2d2a2e"/><path d="M214.4,163.5 L221.9,167.8 L221.9,176.4 L214.4,180.7 L207.0,176.4 L207.0,167.8Z" fill="#333744"/><path d="M228.5,163.5 L235.9,167.8 L235.9,176.4 L228.5,180.7 L221.0,176.4 L221.0,167.8Z" fill="#333744"/><path d="M242.5,163.5 L250.0,167.8 L250.0,176.4 L242.5,180.7 L235.1,176.4 L235.1,167.8Z" fill="#333744"/><path d="M256.5,163.5 L264.0,167.8 L264.0,176.4 L256.5,180.7 L249.1,176.4 L249.1,167.8Z" fill="#333744"/><path d="M270.6,163.5 L278.0,167.8 L278.0,176.4 L270.6,180.7 L263.1,176.4 L263.1,167.8Z" fill="#333744"/><path d="M284.6,163.5 L292.0,167.8 L292.0,176.4 L284.6,180.7 L277.1,176.4 L277.1,167.8Z" fill="#2d2a2e"/><path d="M298.6,163.5 L306.1,167.8 L306.1,176.4 L298.6,180.7 L291.2,176.4 L291.2,167.8Z" fill="#2d2a2e"/><path d="M312.7,163.5 L320.1,167.8 L320.1,176.4 L312.7,180.7 L305.2,176.4 L305.2,167.8Z" fill="#2d2a2e"/><path d="M81.2,175.7 L88.6,179.9 L88.6,188.6 L81.2,192.8 L73.7,188.6 L73.7,179.9Z" fill="#2d2a2e"/><path d="M95.2,175.7 L102.6,179.9 L102.6,188.6 L95.2,192.8 L87.7,188.6 L87.7,179.9Z" fill="#2d2a2e"/><path d="M109.2,175.7 L116.7,179.9 L116.7,188.6 L109.2,192.8 L101.8,188.6 L101.8,179.9Z" fill="#2d2a2e"/><path d="M123.3,175.7 L130.7,179.9 L130.7,188.6 L123.3,192.8 L115.8,188.6 L115.8,179.9Z" fill="#2d2a2e"/><path d="M137.3,175.7 L144.7,179.9 L144.7,188.6 L137.3,192.8 L129.8,188.6 L129.8,179.9Z" fill="#2d2a2e"/><path d="M151.3,175.7 L158.8,179.9 L158.8,188.6 L151.3,192.8 L143.9,188.6 L143.9,179.9Z" fill="#2d2a2e"/><path d="M165.3,175.7 L172.8,179.9 L172.8,188.6 L165.3,192.8 L157.9,188.6 L157.9,179.9Z" fill="#2d2a2e"/><path d="M179.4,175.7 L186.8,179.9 L186.8,188.6 L179.4,192.8 L171.9,188.6 L171.9,179.9Z" fill="#2d2a2e"/><path d="M193.4,175.7 L200.8,179.9 L200.8,188.6 L193.4,192.8 L186.0,188.6 L186.0,179.9Z" fill="#2d2a2e"/><path d="M207.4,175.7 L214.9,179.9 L214.9,188.6 L207.4,192.8 L200.0,188.6 L200.0,179.9Z" fill="#333744"/><path d="M221.5,175.7 L228.9,179.9 L228.9,188.6 L221.5,192.8 L214.0,188.6 L214.0,179.9Z" fill="#333744"/><path d="M235.5,175.7 L242.9,179.9 L242.9,188.6 L235.5,192.8 L228.0,188.6 L228.0,179.9Z" fill="#333744"/><path d="M249.5,175.7 L257.0,179.9 L257.0,188.6 L249.5,192.8 L242.1,188.6 L242.1,179.9Z" fill="#333744"/><path d="M263.5,175.7 L271.0,179.9 L271.0,188.6 L263.5,192.8 L256.1,188.6 L256.1,179.9Z" fill="#333744"/><path d="M277.6,175.7 L285.0,179.9 L285.0,188.6 L277.6,192.8 L270.1,188.6 L270.1,179.9Z" fill="#2d2a2e"/><path d="M291.6,175.7 L299.1,179.9 L299.1,188.6 L291.6,192.8 L284.2,188.6 L284.2,179.9Z" fill="#2d2a2e"/><path d="M88.2,187.8 L95.6,192.1 L95.6,200.7 L88.2,205.0 L80.7,200.7 L80.7,192.1Z" fill="#2d2a2e"/><path d="M102.2,187.8 L109.7,192.1 L109.7,200.7 L102.2,205.0 L94.8,200.7 L94.8,192.1Z" fill="#2d2a2e"/><path d="M116.2,187.8 L123.7,192.1 L123.7,200.7 L116.2,205.0 L108.8,200.7 L108.8,192.1Z" fill="#2d2a2e"/><path d="M130.3,187.8 L137.7,192.1 L137.7,200.7 L130.3,205.0 L122.8,200.7 L122.8,192.1Z" fill="#2d2a2e"/><path d="M144.3,187.8 L151.7,192.1 L151.7,200.7 L144.3,205.0 L136.8,200.7 L136.8,192.1Z" fill="#2d2a2e"/><path d="M158.3,187.8 L165.8,192.1 L165.8,200.7 L158.3,205.0 L150.9,200.7 L150.9,192.1Z" fill="#2d2a2e"/><path d="M172.4,187.8 L179.8,192.1 L179.8,200.7 L172.4,205.0 L164.9,200.7 L164.9,192.1Z" fill="#2d2a2e"/><path d="M186.4,187.8 L193.8,192.1 L193.8,200.7 L186.4,205.0 L178.9,200.7 L178.9,192.1Z" fill="#2d2a2e"/><path d="M200.4,187.8 L207.9,192.1 L207.9,200.7 L200.4,205.0 L193.0,200.7 L193.0,192.1Z" fill="#2d2a2e"/><path d="M214.4,187.8 L221.9,192.1 L221.9,200.7 L214.4,205.0 L207.0,200.7 L207.0,192.1Z" fill="#333744"/><path d="M228.5,187.8 L235.9,192.1 L235.9,200.7 L228.5,205.0 L221.0,200.7 L221.0,192.1Z" fill="#333744"/><path d="M242.5,187.8 L250.0,192.1 L250.0,200.7 L242.5,205.0 L235.1,200.7 L235.1,192.1Z" fill="#333744"/><path d="M256.5,187.8 L264.0,192.1 L264.0,200.7 L256.5,205.0 L249.1,200.7 L249.1,192.1Z" fill="#333744"/><path d="M270.6,187.8 L278.0,192.1 L278.0,200.7 L270.6,205.0 L263.1,200.7 L263.1,192.1Z" fill="#333744"/><path d="M284.6,187.8 L292.0,192.1 L292.0,200.7 L284.6,205.0 L277.1,200.7 L277.1,192.1Z" fill="#2d2a2e"/><path d="M95.2,199.9 L102.6,204.2 L102.6,212.8 L95.2,217.1 L87.7,212.8 L87.7,204.2Z" fill="#2d2a2e"/><path d="M109.2,199.9 L116.7,204.2 L116.7,212.8 L109.2,217.1 L101.8,212.8 L101.8,204.2Z" fill="#2d2a2e"/><path d="M123.3,199.9 L130.7,204.2 L130.7,212.8 L123.3,217.1 L115.8,212.8 L115.8,204.2Z" fill="#2d2a2e"/><path d="M137.3,199.9 L144.7,204.2 L144.7,212.8 L137.3,217.1 L129.8,212.8 L129.8,204.2Z" fill="#2d2a2e"/><path d="M151.3,199.9 L158.8,204.2 L158.8,212.8 L151.3,217.1 L143.9,212.8 L143.9,204.2Z" fill="#2d2a2e"/><path d="M165.3,199.9 L172.8,204.2 L172.8,212.8 L165.3,217.1 L157.9,212.8 L157.9,204.2Z" fill="#2d2a2e"/><path d="M179.4,199.9 L186.8,204.2 L186.8,212.8 L179.4,217.1 L171.9,212.8 L171.9,204.2Z" fill="#3c3242"/><path d="M193.4,199.9 L200.8,204.2 L200.8,212.8 L193.4,217.1 L186.0,212.8 L186.0,204.2Z" fill="#3c3242"/><path d="M207.4,199.9 L214.9,204.2 L214.9,212.8 L207.4,217.1 L200.0,212.8 L200.0,204.2Z" fill="#3c3242"/><path d="M221.5,199.9 L228.9,204.2 L228.9,212.8 L221.5,217.1 L214.0,212.8 L214.0,204.2Z" fill="#3c3242"/><path d="M235.5,199.9 L242.9,204.2 L242.9,212.8 L235.5,217.1 L228.0,212.8 L228.0,204.2Z" fill="#333744"/><path d="M249.5,199.9 L257.0,204.2 L257.0,212.8 L249.5,217.1 L242.1,212.8 L242.1,204.2Z" fill="#333744"/><path d="M263.5,199.9 L271.0,204.2 L271.0,212.8 L263.5,217.1 L256.1,212.8 L256.1,204.2Z" fill="#333744"/><path d="M102.2,212.1 L109.7,216.4 L109.7,225.0 L102.2,229.3 L94.8,225.0 L94.8,216.4Z" fill="#2d2a2e"/><path d="M116.2,212.1 L123.7,216.4 L123.7,225.0 L116.2,229.3 L108.8,225.0 L108.8,216.4Z" fill="#2d2a2e"/><path d="M130.3,212.1 L137.7,216.4 L137.7,225.0 L130.3,229.3 L122.8,225.0 L122.8,216.4Z" fill="#2d2a2e"/><path d="M144.3,212.1 L151.7,216.4 L151.7,225.0 L144.3,229.3 L136.8,225.0 L136.8,216.4Z" fill="#2d2a2e"/><path d="M158.3,212.1 L165.8,216.4 L165.8,225.0 L158.3,229.3 L150.9,225.0 L150.9,216.4Z" fill="#2d2a2e"/><path d="M172.4,212.1 L179.8,216.4 L179.8,225.0 L172.4,229.3 L164.9,225.0 L164.9,216.4Z" fill="#2d2a2e"/><path d="M186.4,212.1 L193.8,216.4 L193.8,225.0 L186.4,229.3 L178.9,225.0 L178.9,216.4Z" fill="#3c3242"/><path d="M200.4,212.1 L207.9,216.4 L207.9,225.0 L200.4,229.3 L193.0,225.0 L193.0,216.4Z" fill="#3c3242"/><path d="M214.4,212.1 L221.9,216.4 L221.9,225.0 L214.4,229.3 L207.0,225.0 L207.0,216.4Z" fill="#3c3242"/><path d="M228.5,212.1 L235.9,216.4 L235.9,225.0 L228.5,229.3 L221.0,225.0 L221.0,216.4Z" fill="#333744"/><path d="M242.5,212.1 L250.0,216.4 L250.0,225.0 L242.5,229.3 L235.1,225.0 L235.1,216.4Z" fill="#333744"/><path d="M256.5,212.1 L264.0,216.4 L264.0,225.0 L256.5,229.3 L249.1,225.0 L249.1,216.4Z" fill="#333744"/><path d="M123.3,224.2 L130.7,228.5 L130.7,237.2 L123.3,241.4 L115.8,237.2 L115.8,228.5Z" fill="#2d2a2e"/><path d="M137.3,224.2 L144.7,228.5 L144.7,237.2 L137.3,241.4 L129.8,237.2 L129.8,228.5Z" fill="#211e23"/><path d="M151.3,224.2 L158.8,228.5 L158.8,237.2 L151.3,241.4 L143.9,237.2 L143.9,228.5Z" fill="#2d2a2e"/><path d="M165.3,224.2 L172.8,228.5 L172.8,237.2 L165.3,241.4 L157.9,237.2 L157.9,228.5Z" fill="#2d2a2e"/><path d="M179.4,224.2 L186.8,228.5 L186.8,237.2 L179.4,241.4 L171.9,237.2 L171.9,228.5Z" fill="#3c3242"/><path d="M193.4,224.2 L200.8,228.5 L200.8,237.2 L193.4,241.4 L186.0,237.2 L186.0,228.5Z" fill="#3c3242"/><path d="M207.4,224.2 L214.9,228.5 L214.9,237.2 L207.4,241.4 L200.0,237.2 L200.0,228.5Z" fill="#3c3242"/><path d="M221.5,224.2 L228.9,228.5 L228.9,237.2 L221.5,241.4 L214.0,237.2 L214.0,228.5Z" fill="#3c3242"/><path d="M235.5,224.2 L242.9,228.5 L242.9,237.2 L235.5,241.4 L228.0,237.2 L228.0,228.5Z" fill="#333744"/><path d="M144.3,236.4 L151.7,240.7 L151.7,249.3 L144.3,253.6 L136.8,249.3 L136.8,240.7Z" fill="#2d2a2e"/><path d="M158.3,236.4 L165.8,240.7 L165.8,249.3 L158.3,253.6 L150.9,249.3 L150.9,240.7Z" fill="#2d2a2e"/><path d="M172.4,236.4 L179.8,240.7 L179.8,249.3 L172.4,253.6 L164.9,249.3 L164.9,240.7Z" fill="#2d2a2e"/><path d="M186.4,236.4 L193.8,240.7 L193.8,249.3 L186.4,253.6 L178.9,249.3 L178.9,240.7Z" fill="#3c3242"/><path d="M200.4,236.4 L207.9,240.7 L207.9,249.3 L200.4,253.6 L193.0,249.3 L193.0,240.7Z" fill="#3c3242"/><path d="M214.4,236.4 L221.9,240.7 L221.9,249.3 L214.4,253.6 L207.0,249.3 L207.0,240.7Z" fill="#3c3242"/><path d="M228.5,236.4 L235.9,240.7 L235.9,249.3 L228.5,253.6 L221.0,249.3 L221.0,240.7Z" fill="#333744"/><path d="M165.3,248.5 L172.8,252.8 L172.8,261.4 L165.3,265.8 L157.9,261.4 L157.9,252.8Z" fill="#2d2a2e"/><path d="M179.4,248.5 L186.8,252.8 L186.8,261.4 L179.4,265.8 L171.9,261.4 L171.9,252.8Z" fill="#3c3242"/><path d="M193.4,248.5 L200.8,252.8 L200.8,261.4 L193.4,265.8 L186.0,261.4 L186.0,252.8Z" fill="#3c3242"/><path d="M207.4,248.5 L214.9,252.8 L214.9,261.4 L207.4,265.8 L200.0,261.4 L200.0,252.8Z" fill="#3c3242"/><path d="M186.4,260.7 L193.8,265.0 L193.8,273.6 L186.4,277.9 L178.9,273.6 L178.9,265.0Z" fill="#2d2a2e"/><path d="M200.4,260.7 L207.9,265.0 L207.9,273.6 L200.4,277.9 L193.0,273.6 L193.0,265.0Z" fill="#2d2a2e"/><path d="M193.4,-2.0L193.4,6.0M151.3,22.2L144.3,18.2M193.4,6.0L200.4,10.1M200.4,10.1L200.4,18.2M207.4,22.2L200.4,18.2M151.3,22.2L151.3,30.3M151.3,30.3L144.3,34.4M207.4,22.2L207.4,30.3M249.5,22.2L249.5,30.3M249.5,30.3L242.5,34.4M144.3,34.4L144.3,42.5M144.3,42.5L137.3,46.5M158.3,42.5L151.3,46.5M151.3,46.5L144.3,42.5M172.4,42.5L165.3,46.5M165.3,46.5L158.3,42.5M186.4,42.5L179.4,46.5M179.4,46.5L172.4,42.5M200.4,42.5L193.4,46.5M193.4,46.5L186.4,42.5M207.4,30.3L214.4,34.4M214.4,34.4L214.4,42.5M214.4,42.5L207.4,46.5M207.4,46.5L200.4,42.5M221.5,46.5L214.4,42.5M242.5,34.4L242.5,42.5M242.5,42.5L235.5,46.5M95.2,46.5L95.2,54.6M95.2,54.6L88.2,58.7M123.3,54.6L116.2,58.7M137.3,46.5L137.3,54.6M137.3,54.6L130.3,58.7M151.3,46.5L151.3,54.6M221.5,46.5L221.5,54.6M235.5,46.5L235.5,54.6M235.5,54.6L228.5,58.7M277.6,46.5L277.6,54.6M277.6,54.6L270.6,58.7M291.6,54.6L284.6,58.7M81.2,54.6L88.2,58.7M95.2,54.6L102.2,58.7M102.2,58.7L102.2,66.8M116.2,58.7L116.2,66.8M116.2,66.8L109.2,70.8M109.2,70.8L102.2,66.8M123.3,54.6L130.3,58.7M151.3,54.6L158.3,58.7M158.3,58.7L158.3,66.8M172.4,66.8L165.3,70.8M165.3,70.8L158.3,66.8M179.4,70.8L172.4,66.8M221.5,54.6L228.5,58.7M228.5,58.7L228.5,66.8M235.5,70.8L228.5,66.8M256.5,66.8L249.5,70.8M270.6,58.7L270.6,66.8M270.6,66.8L263.5,70.8M263.5,70.8L256.5,66.8M277.6,54.6L284.6,58.7M284.6,58.7L284.6,66.8M291.6,70.8L284.6,66.8M95.2,78.9L88.2,83.0M109.2,70.8L109.2,78.9M109.2,78.9L102.2,83.0M179.4,70.8L179.4,78.9M179.4,78.9L172.4,83.0M193.4,78.9L186.4,83.0M221.5,78.9L214.4,83.0M235.5,70.8L235.5,78.9M235.5,78.9L228.5,83.0M249.5,70.8L249.5,78.9M249.5,78.9L242.5,83.0M291.6,70.8L291.6,78.9M291.6,78.9L284.6,83.0M88.2,83.0L88.2,91.1M88.2,91.1L81.2,95.1M81.2,95.1L74.1,91.1M95.2,79.0L102.2,83.0M109.2,79.0L116.2,83.0M116.2,83.0L116.2,91.1M116.2,91.1L109.2,95.1M130.3,91.1L123.3,95.1M123.3,95.1L116.2,91.1M137.3,95.1L130.3,91.1M172.4,83.0L172.4,91.1M172.4,91.1L165.3,95.1M179.4,79.0L186.4,83.0M193.4,79.0L200.4,83.0M200.4,83.0L200.4,91.1M214.4,83.0L214.4,91.1M214.4,91.1L207.4,95.1M207.4,95.1L200.4,91.1M221.5,79.0L228.5,83.0M235.5,79.0L242.5,83.0M242.5,83.0L242.5,91.1M256.5,91.1L249.5,95.1M249.5,95.1L242.5,91.1M270.6,91.1L263.5,95.1M263.5,95.1L256.5,91.1M284.6,83.0L284.6,91.1M284.6,91.1L277.6,95.1M277.6,95.1L270.6,91.1M298.6,91.1L291.6,95.1M291.6,95.1L284.6,91.1M109.2,95.1L109.2,103.2M137.3,95.1L137.3,103.2M151.3,103.2L144.3,107.3M165.3,95.1L165.3,103.2M165.3,103.2L158.3,107.3M207.4,95.1L207.4,103.2M207.4,103.2L200.4,107.3M263.5,95.1L263.5,103.2M263.5,103.2L256.5,107.3M291.6,95.1L291.6,103.2M109.2,103.2L116.2,107.3M116.2,107.3L116.2,115.4M116.2,115.4L109.2,119.4M137.3,103.2L144.3,107.3M151.3,103.2L158.3,107.3M158.3,107.3L158.3,115.4M172.4,115.4L165.3,119.4M165.3,119.4L158.3,115.4M186.4,115.4L179.4,119.4M179.4,119.4L172.4,115.4M200.4,107.3L200.4,115.4M200.4,115.4L193.4,119.4M193.4,119.4L186.4,115.4M256.5,107.3L256.5,115.4M263.5,119.4L256.5,115.4M291.6,103.2L298.6,107.3M298.6,107.3L298.6,115.4M305.6,119.4L298.6,115.4M109.2,119.5L109.2,127.5M165.3,119.5L165.3,127.5M165.3,127.5L158.3,131.6M193.4,119.5L193.4,127.5M263.5,119.5L263.5,127.5M263.5,127.5L256.5,131.6M305.6,119.5L305.6,127.5M319.7,127.5L312.7,131.6M102.2,139.7L95.2,143.8M109.2,127.6L116.2,131.6M116.2,131.6L116.2,139.7M116.2,139.7L109.2,143.8M109.2,143.8L102.2,139.7M158.3,131.6L158.3,139.7M158.3,139.7L151.3,143.8M193.4,127.6L200.4,131.6M200.4,131.6L200.4,139.7M207.4,143.8L200.4,139.7M256.5,131.6L256.5,139.7M256.5,139.7L249.5,143.8M298.6,139.7L291.6,143.8M305.6,127.6L312.7,131.6M312.7,131.6L312.7,139.7M312.7,139.7L305.6,143.8M305.6,143.8L298.6,139.7M67.1,151.8L60.1,155.9M81.2,151.8L74.1,155.9M95.2,143.7L95.2,151.8M95.2,151.8L88.2,155.9M109.2,143.7L109.2,151.8M123.3,151.8L116.2,155.9M151.3,143.7L151.3,151.8M151.3,151.8L144.3,155.9M207.4,143.7L207.4,151.8M207.4,151.8L200.4,155.9M221.5,151.8L214.4,155.9M249.5,143.7L249.5,151.8M277.6,151.8L270.6,155.9M291.6,143.7L291.6,151.8M291.6,151.8L284.6,155.9M67.1,151.8L74.1,155.9M81.2,151.8L88.2,155.9M109.2,151.8L116.2,155.9M123.3,151.8L130.3,155.9M130.3,155.9L130.3,164.0M144.3,155.9L144.3,164.0M144.3,164.0L137.3,168.0M137.3,168.0L130.3,164.0M200.4,155.9L200.4,164.0M200.4,164.0L193.4,168.0M207.4,151.8L214.4,155.9M221.5,151.8L228.5,155.9M228.5,155.9L228.5,164.0M242.5,164.0L235.5,168.0M235.5,168.0L228.5,164.0M249.5,151.8L256.5,155.9M256.5,155.9L256.5,164.0M256.5,164.0L249.5,168.0M249.5,168.0L242.5,164.0M270.6,155.9L270.6,164.0M270.6,164.0L263.5,168.0M263.5,168.0L256.5,164.0M277.6,151.8L284.6,155.9M277.6,168.0L270.6,164.0M123.3,176.2L116.2,180.2M137.3,168.0L137.3,176.2M137.3,176.2L130.3,180.2M179.4,176.2L172.4,180.2M193.4,168.0L193.4,176.2M193.4,176.2L186.4,180.2M249.5,168.0L249.5,176.2M249.5,176.2L242.5,180.2M277.6,168.0L277.6,176.2M88.2,188.3L81.2,192.3M102.2,188.3L95.2,192.3M95.2,192.3L88.2,188.3M116.2,180.2L116.2,188.3M116.2,188.3L109.2,192.3M109.2,192.3L102.2,188.3M123.3,176.2L130.3,180.2M137.3,176.2L144.3,180.2M144.3,180.2L144.3,188.3M158.3,188.3L151.3,192.3M151.3,192.3L144.3,188.3M172.4,180.2L172.4,188.3M172.4,188.3L165.3,192.3M165.3,192.3L158.3,188.3M179.4,176.2L186.4,180.2M242.5,180.2L242.5,188.3M242.5,188.3L235.5,192.3M277.6,176.2L284.6,180.2M284.6,180.2L284.6,188.3M291.6,192.3L284.6,188.3M95.2,192.3L95.2,200.4M165.3,192.3L165.3,200.4M165.3,200.4L158.3,204.5M235.5,192.3L235.5,200.4M95.2,200.4L102.2,204.5M102.2,204.5L102.2,212.6M102.2,212.6L95.2,216.6M158.3,204.5L158.3,212.6M165.3,216.6L158.3,212.6M235.5,200.4L242.5,204.5M242.5,204.5L242.5,212.6M242.5,212.6L235.5,216.6M165.3,216.6L165.3,224.8M165.3,224.8L158.3,228.8M235.5,216.6L235.5,224.8M235.5,224.8L228.5,228.8M158.3,228.8L158.3,236.9M165.3,240.9L158.3,236.9M228.5,228.8L228.5,236.9M235.5,240.9L228.5,236.9M165.3,240.9L165.3,249.1M165.3,249.0L172.4,253.1M172.4,253.1L172.4,261.2" stroke="#141215" stroke-width="1.8" fill="none" stroke-linecap="round"/><line x1="21.5" y1="0" x2="21.5" y2="266" stroke="rgba(120,105,85,0.22)" stroke-width="1"/><line x1="43.6" y1="0" x2="43.6" y2="266" stroke="rgba(120,105,85,0.22)" stroke-width="1"/><line x1="65.7" y1="0" x2="65.7" y2="266" stroke="rgba(120,105,85,0.22)" stroke-width="1"/><line x1="87.80000000000001" y1="0" x2="87.80000000000001" y2="266" stroke="rgba(120,105,85,0.22)" stroke-width="1"/><line x1="109.9" y1="0" x2="109.9" y2="266" stroke="rgba(120,105,85,0.22)" stroke-width="1"/><line x1="132.0" y1="0" x2="132.0" y2="266" stroke="rgba(120,105,85,0.22)" stroke-width="1"/><line x1="154.1" y1="0" x2="154.1" y2="266" stroke="rgba(120,105,85,0.22)" stroke-width="1"/><line x1="176.2" y1="0" x2="176.2" y2="266" stroke="rgba(120,105,85,0.22)" stroke-width="1"/><line x1="198.29999999999998" y1="0" x2="198.29999999999998" y2="266" stroke="rgba(120,105,85,0.22)" stroke-width="1"/><line x1="220.39999999999998" y1="0" x2="220.39999999999998" y2="266" stroke="rgba(120,105,85,0.22)" stroke-width="1"/><line x1="242.49999999999997" y1="0" x2="242.49999999999997" y2="266" stroke="rgba(120,105,85,0.22)" stroke-width="1"/><line x1="264.59999999999997" y1="0" x2="264.59999999999997" y2="266" stroke="rgba(120,105,85,0.22)" stroke-width="1"/><line x1="286.7" y1="0" x2="286.7" y2="266" stroke="rgba(120,105,85,0.22)" stroke-width="1"/><line x1="308.8" y1="0" x2="308.8" y2="266" stroke="rgba(120,105,85,0.22)" stroke-width="1"/><line x1="330.90000000000003" y1="0" x2="330.90000000000003" y2="266" stroke="rgba(120,105,85,0.22)" stroke-width="1"/><line x1="353.00000000000006" y1="0" x2="353.00000000000006" y2="266" stroke="rgba(120,105,85,0.22)" stroke-width="1"/><line x1="375.1000000000001" y1="0" x2="375.1000000000001" y2="266" stroke="rgba(120,105,85,0.22)" stroke-width="1"/><line x1="0" y1="21.5" x2="383" y2="21.5" stroke="rgba(120,105,85,0.22)" stroke-width="1"/><line x1="0" y1="43.6" x2="383" y2="43.6" stroke="rgba(120,105,85,0.22)" stroke-width="1"/><line x1="0" y1="65.7" x2="383" y2="65.7" stroke="rgba(120,105,85,0.22)" stroke-width="1"/><line x1="0" y1="87.80000000000001" x2="383" y2="87.80000000000001" stroke="rgba(120,105,85,0.22)" stroke-width="1"/><line x1="0" y1="109.9" x2="383" y2="109.9" stroke="rgba(120,105,85,0.22)" stroke-width="1"/><line x1="0" y1="132.0" x2="383" y2="132.0" stroke="rgba(120,105,85,0.22)" stroke-width="1"/><line x1="0" y1="154.1" x2="383" y2="154.1" stroke="rgba(120,105,85,0.22)" stroke-width="1"/><line x1="0" y1="176.2" x2="383" y2="176.2" stroke="rgba(120,105,85,0.22)" stroke-width="1"/><line x1="0" y1="198.29999999999998" x2="383" y2="198.29999999999998" stroke="rgba(120,105,85,0.22)" stroke-width="1"/><line x1="0" y1="220.39999999999998" x2="383" y2="220.39999999999998" stroke="rgba(120,105,85,0.22)" stroke-width="1"/><line x1="0" y1="242.49999999999997" x2="383" y2="242.49999999999997" stroke="rgba(120,105,85,0.22)" stroke-width="1"/><line x1="0" y1="264.59999999999997" x2="383" y2="264.59999999999997" stroke="rgba(120,105,85,0.22)" stroke-width="1"/><rect x="186.2" y="53.1" width="1.6" height="1.6" fill="#cfe3c8"/><rect x="177.6" y="35.3" width="1.6" height="1.6" fill="#cfe3c8"/><rect x="166.9" y="43.1" width="1.6" height="1.6" fill="#cfe3c8"/><rect x="169.3" y="32.0" width="1.6" height="1.6" fill="#cfe3c8"/><rect x="179.1" y="44.2" width="1.6" height="1.6" fill="#cfe3c8"/><rect x="182.0" y="34.3" width="1.6" height="1.6" fill="#cfe3c8"/><rect x="177.1" y="42.1" width="1.6" height="1.6" fill="#cfe3c8"/><rect x="165.0" y="47.1" width="1.6" height="1.6" fill="#cfe3c8"/><rect x="179.0" y="57.3" width="1.6" height="1.6" fill="#cfe3c8"/><rect x="179.1" y="41.3" width="1.6" height="1.6" fill="#cfe3c8"/><rect x="187.9" y="44.6" width="1.6" height="1.6" fill="#cfe3c8"/><rect x="185.6" y="39.3" width="1.6" height="1.6" fill="#cfe3c8"/><rect x="179.0" y="52.3" width="1.6" height="1.6" fill="#cfe3c8"/><rect x="183.9" y="44.1" width="1.6" height="1.6" fill="#cfe3c8"/><rect x="167.2" y="46.8" width="1.6" height="1.6" fill="#cfe3c8"/><rect x="177.8" y="50.0" width="1.6" height="1.6" fill="#cfe3c8"/><rect x="179.0" y="52.8" width="1.6" height="1.6" fill="#cfe3c8"/><rect x="176.5" y="44.9" width="1.6" height="1.6" fill="#cfe3c8"/><rect x="182.8" y="33.2" width="1.6" height="1.6" fill="#cfe3c8"/><rect x="172.9" y="37.8" width="1.6" height="1.6" fill="#cfe3c8"/><rect x="190.9" y="42.1" width="1.6" height="1.6" fill="#cfe3c8"/><rect x="183.3" y="48.8" width="1.6" height="1.6" fill="#cfe3c8"/><rect x="174.7" y="30.4" width="1.6" height="1.6" fill="#cfe3c8"/><rect x="186.0" y="39.0" width="1.6" height="1.6" fill="#cfe3c8"/><rect x="182.9" y="32.0" width="1.6" height="1.6" fill="#cfe3c8"/><rect x="173.2" y="53.7" width="1.6" height="1.6" fill="#cfe3c8"/><rect x="187.2" y="33.5" width="1.6" height="1.6" fill="#cfe3c8"/><rect x="165.5" y="42.4" width="1.6" height="1.6" fill="#cfe3c8"/><rect x="184.2" y="44.4" width="1.6" height="1.6" fill="#cfe3c8"/><rect x="179.8" y="33.6" width="1.6" height="1.6" fill="#cfe3c8"/><rect x="182.2" y="52.6" width="1.6" height="1.6" fill="#cfe3c8"/><rect x="173.4" y="31.0" width="1.6" height="1.6" fill="#cfe3c8"/><rect x="170.0" y="49.8" width="1.6" height="1.6" fill="#cfe3c8"/><rect x="163.8" y="42.1" width="1.6" height="1.6" fill="#cfe3c8"/><rect x="167.7" y="41.6" width="1.6" height="1.6" fill="#cfe3c8"/><rect x="174.4" y="43.0" width="1.6" height="1.6" fill="#cfe3c8"/><rect x="189.1" y="46.2" width="1.6" height="1.6" fill="#cfe3c8"/><rect x="188.5" y="41.5" width="1.6" height="1.6" fill="#cfe3c8"/><rect x="172.1" y="46.6" width="1.6" height="1.6" fill="#cfe3c8"/><rect x="162.1" y="42.6" width="1.6" height="1.6" fill="#cfe3c8"/><rect x="178.4" y="31.9" width="1.6" height="1.6" fill="#cfe3c8"/><rect x="181.6" y="37.2" width="1.6" height="1.6" fill="#cfe3c8"/><rect x="162.4" y="41.6" width="1.6" height="1.6" fill="#cfe3c8"/><rect x="168.0" y="38.0" width="1.6" height="1.6" fill="#cfe3c8"/><rect x="175.7" y="53.8" width="1.6" height="1.6" fill="#cfe3c8"/><rect x="178.1" y="42.5" width="1.6" height="1.6" fill="#cfe3c8"/><rect x="179.8" y="29.5" width="1.6" height="1.6" fill="#cfe3c8"/><rect x="186.7" y="34.3" width="1.6" height="1.6" fill="#cfe3c8"/><rect x="180.9" y="32.7" width="1.6" height="1.6" fill="#cfe3c8"/><rect x="167.9" y="39.1" width="1.6" height="1.6" fill="#cfe3c8"/><rect x="190.1" y="47.6" width="1.6" height="1.6" fill="#cfe3c8"/><rect x="170.9" y="40.0" width="1.6" height="1.6" fill="#cfe3c8"/><rect x="166.6" y="42.5" width="1.6" height="1.6" fill="#cfe3c8"/><rect x="171.5" y="49.7" width="1.6" height="1.6" fill="#cfe3c8"/><rect x="165.5" y="40.0" width="1.6" height="1.6" fill="#cfe3c8"/><rect x="169.3" y="36.2" width="1.6" height="1.6" fill="#cfe3c8"/><rect x="184.1" y="44.1" width="1.6" height="1.6" fill="#cfe3c8"/><rect x="182.1" y="53.1" width="1.6" height="1.6" fill="#cfe3c8"/><rect x="185.6" y="32.5" width="1.6" height="1.6" fill="#cfe3c8"/><rect x="180.9" y="29.8" width="1.6" height="1.6" fill="#cfe3c8"/><rect x="176.6" y="56.6" width="1.6" height="1.6" fill="#cfe3c8"/><rect x="175.0" y="39.0" width="1.6" height="1.6" fill="#cfe3c8"/><rect x="178.8" y="43.0" width="1.6" height="1.6" fill="#cfe3c8"/><rect x="177.2" y="35.3" width="1.6" height="1.6" fill="#cfe3c8"/><rect x="186.2" y="50.3" width="1.6" height="1.6" fill="#cfe3c8"/><rect x="174.8" y="46.1" width="1.6" height="1.6" fill="#cfe3c8"/><rect x="182.9" y="52.0" width="1.6" height="1.6" fill="#cfe3c8"/><rect x="180.9" y="49.6" width="1.6" height="1.6" fill="#cfe3c8"/><rect x="174.6" y="33.0" width="1.6" height="1.6" fill="#cfe3c8"/><rect x="172.5" y="52.1" width="1.6" height="1.6" fill="#cfe3c8"/><rect x="186.2" y="44.2" width="1.6" height="1.6" fill="#cfe3c8"/><rect x="171.3" y="45.9" width="1.6" height="1.6" fill="#cfe3c8"/><rect x="188.0" y="51.8" width="1.6" height="1.6" fill="#cfe3c8"/><rect x="170.2" y="42.4" width="1.6" height="1.6" fill="#cfe3c8"/><rect x="166.3" y="34.5" width="1.6" height="1.6" fill="#cfe3c8"/><rect x="179.0" y="43.1" width="1.6" height="1.6" fill="#cfe3c8"/><rect x="184.7" y="52.9" width="1.6" height="1.6" fill="#cfe3c8"/><rect x="183.7" y="53.4" width="1.6" height="1.6" fill="#cfe3c8"/><rect x="172.2" y="32.8" width="1.6" height="1.6" fill="#cfe3c8"/><rect x="179.7" y="57.4" width="1.6" height="1.6" fill="#cfe3c8"/><rect x="213.1" y="98.3" width="1.6" height="1.6" fill="#f2eab0"/><rect x="211.8" y="123.5" width="1.6" height="1.6" fill="#f2eab0"/><rect x="199.3" y="117.9" width="1.6" height="1.6" fill="#f2eab0"/><rect x="203.7" y="122.2" width="1.6" height="1.6" fill="#f2eab0"/><rect x="218.2" y="113.4" width="1.6" height="1.6" fill="#f2eab0"/><rect x="225.1" y="106.8" width="1.6" height="1.6" fill="#f2eab0"/><rect x="204.0" y="124.8" width="1.6" height="1.6" fill="#f2eab0"/><rect x="203.4" y="125.3" width="1.6" height="1.6" fill="#f2eab0"/><rect x="209.0" y="99.0" width="1.6" height="1.6" fill="#f2eab0"/><rect x="209.5" y="111.6" width="1.6" height="1.6" fill="#f2eab0"/><rect x="211.9" y="107.7" width="1.6" height="1.6" fill="#f2eab0"/><rect x="216.5" y="94.9" width="1.6" height="1.6" fill="#f2eab0"/><rect x="203.1" y="107.0" width="1.6" height="1.6" fill="#f2eab0"/><rect x="220.8" y="97.6" width="1.6" height="1.6" fill="#f2eab0"/><rect x="206.0" y="98.4" width="1.6" height="1.6" fill="#f2eab0"/><rect x="202.3" y="117.0" width="1.6" height="1.6" fill="#f2eab0"/><rect x="213.3" y="123.4" width="1.6" height="1.6" fill="#f2eab0"/><rect x="202.7" y="113.1" width="1.6" height="1.6" fill="#f2eab0"/><rect x="220.5" y="118.5" width="1.6" height="1.6" fill="#f2eab0"/><rect x="206.1" y="121.5" width="1.6" height="1.6" fill="#f2eab0"/><rect x="202.3" y="124.1" width="1.6" height="1.6" fill="#f2eab0"/><rect x="211.3" y="108.6" width="1.6" height="1.6" fill="#f2eab0"/><rect x="212.5" y="119.3" width="1.6" height="1.6" fill="#f2eab0"/><rect x="224.5" y="108.7" width="1.6" height="1.6" fill="#f2eab0"/><rect x="205.3" y="116.7" width="1.6" height="1.6" fill="#f2eab0"/><rect x="202.4" y="96.2" width="1.6" height="1.6" fill="#f2eab0"/><rect x="218.6" y="105.9" width="1.6" height="1.6" fill="#f2eab0"/><rect x="219.9" y="100.5" width="1.6" height="1.6" fill="#f2eab0"/><rect x="192.7" y="111.7" width="1.6" height="1.6" fill="#f2eab0"/><rect x="210.9" y="124.4" width="1.6" height="1.6" fill="#f2eab0"/><rect x="215.5" y="113.6" width="1.6" height="1.6" fill="#f2eab0"/><rect x="216.1" y="105.8" width="1.6" height="1.6" fill="#f2eab0"/><rect x="210.2" y="96.8" width="1.6" height="1.6" fill="#f2eab0"/><rect x="215.1" y="101.3" width="1.6" height="1.6" fill="#f2eab0"/><rect x="204.6" y="117.7" width="1.6" height="1.6" fill="#f2eab0"/><rect x="218.4" y="100.2" width="1.6" height="1.6" fill="#f2eab0"/><rect x="224.8" y="105.4" width="1.6" height="1.6" fill="#f2eab0"/><rect x="217.8" y="119.5" width="1.6" height="1.6" fill="#f2eab0"/><rect x="212.2" y="112.0" width="1.6" height="1.6" fill="#f2eab0"/><rect x="223.7" y="117.0" width="1.6" height="1.6" fill="#f2eab0"/><rect x="213.1" y="95.0" width="1.6" height="1.6" fill="#f2eab0"/><rect x="202.3" y="121.2" width="1.6" height="1.6" fill="#f2eab0"/><rect x="211.6" y="99.8" width="1.6" height="1.6" fill="#f2eab0"/><rect x="202.2" y="106.6" width="1.6" height="1.6" fill="#f2eab0"/><rect x="217.1" y="114.3" width="1.6" height="1.6" fill="#f2eab0"/><rect x="219.4" y="101.9" width="1.6" height="1.6" fill="#f2eab0"/><rect x="219.7" y="104.8" width="1.6" height="1.6" fill="#f2eab0"/><rect x="206.9" y="124.9" width="1.6" height="1.6" fill="#f2eab0"/><rect x="210.4" y="108.3" width="1.6" height="1.6" fill="#f2eab0"/><rect x="207.0" y="105.5" width="1.6" height="1.6" fill="#f2eab0"/><rect x="221.5" y="120.6" width="1.6" height="1.6" fill="#f2eab0"/><rect x="217.6" y="112.1" width="1.6" height="1.6" fill="#f2eab0"/><rect x="220.5" y="109.1" width="1.6" height="1.6" fill="#f2eab0"/><rect x="214.7" y="114.6" width="1.6" height="1.6" fill="#f2eab0"/><rect x="210.3" y="124.6" width="1.6" height="1.6" fill="#f2eab0"/><rect x="222.5" y="119.8" width="1.6" height="1.6" fill="#f2eab0"/><rect x="197.4" y="121.6" width="1.6" height="1.6" fill="#f2eab0"/><rect x="217.2" y="105.0" width="1.6" height="1.6" fill="#f2eab0"/><rect x="209.3" y="121.7" width="1.6" height="1.6" fill="#f2eab0"/><rect x="220.6" y="118.1" width="1.6" height="1.6" fill="#f2eab0"/><rect x="211.2" y="110.4" width="1.6" height="1.6" fill="#f2eab0"/><rect x="218.7" y="109.0" width="1.6" height="1.6" fill="#f2eab0"/><rect x="200.1" y="103.5" width="1.6" height="1.6" fill="#f2eab0"/><rect x="207.9" y="113.9" width="1.6" height="1.6" fill="#f2eab0"/><rect x="223.8" y="101.3" width="1.6" height="1.6" fill="#f2eab0"/><rect x="215.1" y="108.9" width="1.6" height="1.6" fill="#f2eab0"/><rect x="212.4" y="123.0" width="1.6" height="1.6" fill="#f2eab0"/><rect x="221.9" y="108.4" width="1.6" height="1.6" fill="#f2eab0"/><rect x="204.2" y="97.2" width="1.6" height="1.6" fill="#f2eab0"/><rect x="208.8" y="122.5" width="1.6" height="1.6" fill="#f2eab0"/><rect x="206.5" y="117.9" width="1.6" height="1.6" fill="#f2eab0"/><rect x="217.4" y="114.4" width="1.6" height="1.6" fill="#f2eab0"/><rect x="220.8" y="108.8" width="1.6" height="1.6" fill="#f2eab0"/><rect x="201.6" y="98.9" width="1.6" height="1.6" fill="#f2eab0"/><rect x="219.4" y="106.1" width="1.6" height="1.6" fill="#f2eab0"/><rect x="206.1" y="119.1" width="1.6" height="1.6" fill="#f2eab0"/><rect x="203.1" y="124.3" width="1.6" height="1.6" fill="#f2eab0"/><rect x="216.8" y="104.2" width="1.6" height="1.6" fill="#f2eab0"/><rect x="203.2" y="120.8" width="1.6" height="1.6" fill="#f2eab0"/><rect x="197.9" y="103.8" width="1.6" height="1.6" fill="#f2eab0"/><rect x="209.6" y="112.4" width="1.6" height="1.6" fill="#f2eab0"/><rect x="209.7" y="114.6" width="1.6" height="1.6" fill="#f2eab0"/><rect x="205.2" y="108.6" width="1.6" height="1.6" fill="#f2eab0"/><rect x="221.6" y="116.2" width="1.6" height="1.6" fill="#f2eab0"/><rect x="205.7" y="124.6" width="1.6" height="1.6" fill="#f2eab0"/><rect x="193.7" y="110.7" width="1.6" height="1.6" fill="#f2eab0"/><rect x="216.3" y="119.9" width="1.6" height="1.6" fill="#f2eab0"/><rect x="210.8" y="105.5" width="1.6" height="1.6" fill="#f2eab0"/><rect x="216.2" y="107.8" width="1.6" height="1.6" fill="#f2eab0"/><rect x="212.2" y="93.4" width="1.6" height="1.6" fill="#f2eab0"/><rect x="213.7" y="101.3" width="1.6" height="1.6" fill="#f2eab0"/><rect x="219.0" y="117.6" width="1.6" height="1.6" fill="#f2eab0"/><rect x="217.5" y="105.5" width="1.6" height="1.6" fill="#f2eab0"/><rect x="214.5" y="106.0" width="1.6" height="1.6" fill="#f2eab0"/><rect x="212.1" y="108.4" width="1.6" height="1.6" fill="#f2eab0"/><rect x="203.0" y="124.8" width="1.6" height="1.6" fill="#f2eab0"/><rect x="214.8" y="94.7" width="1.6" height="1.6" fill="#f2eab0"/><rect x="217.4" y="97.6" width="1.6" height="1.6" fill="#f2eab0"/><rect x="206.8" y="103.3" width="1.6" height="1.6" fill="#f2eab0"/><rect x="203.3" y="112.8" width="1.6" height="1.6" fill="#f2eab0"/><rect x="206.4" y="96.5" width="1.6" height="1.6" fill="#f2eab0"/><rect x="209.4" y="114.3" width="1.6" height="1.6" fill="#f2eab0"/><rect x="224.4" y="106.5" width="1.6" height="1.6" fill="#f2eab0"/><rect x="197.6" y="106.2" width="1.6" height="1.6" fill="#f2eab0"/><rect x="216.3" y="100.8" width="1.6" height="1.6" fill="#f2eab0"/><rect x="201.7" y="116.0" width="1.6" height="1.6" fill="#f2eab0"/><rect x="209.4" y="112.7" width="1.6" height="1.6" fill="#f2eab0"/><rect x="202.8" y="101.3" width="1.6" height="1.6" fill="#f2eab0"/><rect x="205.7" y="108.2" width="1.6" height="1.6" fill="#f2eab0"/><rect x="205.6" y="115.0" width="1.6" height="1.6" fill="#f2eab0"/><rect x="248.5" y="124.5" width="1.6" height="1.6" fill="#f5d8b0"/><rect x="247.4" y="108.0" width="1.6" height="1.6" fill="#f5d8b0"/><rect x="230.6" y="126.2" width="1.6" height="1.6" fill="#f5d8b0"/><rect x="242.2" y="119.5" width="1.6" height="1.6" fill="#f5d8b0"/><rect x="229.5" y="115.7" width="1.6" height="1.6" fill="#f5d8b0"/><rect x="234.9" y="108.4" width="1.6" height="1.6" fill="#f5d8b0"/><rect x="236.0" y="103.8" width="1.6" height="1.6" fill="#f5d8b0"/><rect x="242.9" y="130.6" width="1.6" height="1.6" fill="#f5d8b0"/><rect x="233.5" y="119.1" width="1.6" height="1.6" fill="#f5d8b0"/><rect x="230.5" y="125.1" width="1.6" height="1.6" fill="#f5d8b0"/><rect x="256.4" y="108.4" width="1.6" height="1.6" fill="#f5d8b0"/><rect x="239.7" y="132.3" width="1.6" height="1.6" fill="#f5d8b0"/><rect x="246.6" y="119.4" width="1.6" height="1.6" fill="#f5d8b0"/><rect x="225.2" y="116.8" width="1.6" height="1.6" fill="#f5d8b0"/><rect x="250.5" y="131.3" width="1.6" height="1.6" fill="#f5d8b0"/><rect x="249.4" y="111.2" width="1.6" height="1.6" fill="#f5d8b0"/><rect x="236.1" y="102.5" width="1.6" height="1.6" fill="#f5d8b0"/><rect x="231.6" y="128.9" width="1.6" height="1.6" fill="#f5d8b0"/><rect x="240.8" y="104.2" width="1.6" height="1.6" fill="#f5d8b0"/><rect x="252.5" y="104.6" width="1.6" height="1.6" fill="#f5d8b0"/><rect x="255.2" y="114.6" width="1.6" height="1.6" fill="#f5d8b0"/><rect x="246.0" y="126.1" width="1.6" height="1.6" fill="#f5d8b0"/><rect x="244.8" y="131.3" width="1.6" height="1.6" fill="#f5d8b0"/><rect x="242.2" y="113.9" width="1.6" height="1.6" fill="#f5d8b0"/><rect x="235.6" y="104.2" width="1.6" height="1.6" fill="#f5d8b0"/><rect x="234.6" y="128.6" width="1.6" height="1.6" fill="#f5d8b0"/><rect x="249.9" y="131.2" width="1.6" height="1.6" fill="#f5d8b0"/><rect x="259.3" y="122.5" width="1.6" height="1.6" fill="#f5d8b0"/><rect x="247.0" y="104.7" width="1.6" height="1.6" fill="#f5d8b0"/><rect x="240.1" y="135.1" width="1.6" height="1.6" fill="#f5d8b0"/><rect x="248.5" y="116.3" width="1.6" height="1.6" fill="#f5d8b0"/><rect x="244.6" y="101.7" width="1.6" height="1.6" fill="#f5d8b0"/><rect x="233.9" y="105.3" width="1.6" height="1.6" fill="#f5d8b0"/><rect x="225.7" y="123.9" width="1.6" height="1.6" fill="#f5d8b0"/><rect x="252.9" y="116.0" width="1.6" height="1.6" fill="#f5d8b0"/><rect x="245.8" y="106.8" width="1.6" height="1.6" fill="#f5d8b0"/><rect x="247.2" y="126.8" width="1.6" height="1.6" fill="#f5d8b0"/><rect x="254.0" y="130.2" width="1.6" height="1.6" fill="#f5d8b0"/><rect x="248.0" y="116.4" width="1.6" height="1.6" fill="#f5d8b0"/><rect x="232.7" y="111.2" width="1.6" height="1.6" fill="#f5d8b0"/><rect x="249.2" y="124.6" width="1.6" height="1.6" fill="#f5d8b0"/><rect x="242.2" y="133.6" width="1.6" height="1.6" fill="#f5d8b0"/><rect x="249.8" y="118.2" width="1.6" height="1.6" fill="#f5d8b0"/><rect x="239.6" y="119.0" width="1.6" height="1.6" fill="#f5d8b0"/><rect x="232.2" y="108.0" width="1.6" height="1.6" fill="#f5d8b0"/><rect x="246.2" y="111.0" width="1.6" height="1.6" fill="#f5d8b0"/><rect x="239.1" y="130.9" width="1.6" height="1.6" fill="#f5d8b0"/><rect x="240.0" y="131.6" width="1.6" height="1.6" fill="#f5d8b0"/><rect x="241.9" y="132.9" width="1.6" height="1.6" fill="#f5d8b0"/><rect x="246.1" y="102.3" width="1.6" height="1.6" fill="#f5d8b0"/><rect x="255.1" y="115.8" width="1.6" height="1.6" fill="#f5d8b0"/><rect x="225.4" y="119.0" width="1.6" height="1.6" fill="#f5d8b0"/><rect x="243.6" y="104.5" width="1.6" height="1.6" fill="#f5d8b0"/><rect x="234.9" y="124.4" width="1.6" height="1.6" fill="#f5d8b0"/><rect x="254.6" y="128.2" width="1.6" height="1.6" fill="#f5d8b0"/><rect x="253.5" y="128.5" width="1.6" height="1.6" fill="#f5d8b0"/><rect x="225.0" y="113.1" width="1.6" height="1.6" fill="#f5d8b0"/><rect x="243.2" y="100.3" width="1.6" height="1.6" fill="#f5d8b0"/><rect x="250.3" y="127.6" width="1.6" height="1.6" fill="#f5d8b0"/><rect x="233.0" y="113.6" width="1.6" height="1.6" fill="#f5d8b0"/><rect x="231.2" y="117.8" width="1.6" height="1.6" fill="#f5d8b0"/><rect x="241.5" y="117.9" width="1.6" height="1.6" fill="#f5d8b0"/><rect x="230.7" y="122.3" width="1.6" height="1.6" fill="#f5d8b0"/><rect x="238.2" y="128.7" width="1.6" height="1.6" fill="#f5d8b0"/><rect x="245.0" y="103.4" width="1.6" height="1.6" fill="#f5d8b0"/><rect x="227.5" y="118.7" width="1.6" height="1.6" fill="#f5d8b0"/><rect x="236.2" y="123.7" width="1.6" height="1.6" fill="#f5d8b0"/><rect x="251.5" y="118.2" width="1.6" height="1.6" fill="#f5d8b0"/><rect x="228.2" y="108.3" width="1.6" height="1.6" fill="#f5d8b0"/><rect x="248.1" y="106.7" width="1.6" height="1.6" fill="#f5d8b0"/><rect x="254.2" y="117.0" width="1.6" height="1.6" fill="#f5d8b0"/><rect x="247.8" y="108.1" width="1.6" height="1.6" fill="#f5d8b0"/><rect x="241.4" y="100.1" width="1.6" height="1.6" fill="#f5d8b0"/><rect x="239.5" y="125.0" width="1.6" height="1.6" fill="#f5d8b0"/><rect x="232.4" y="109.0" width="1.6" height="1.6" fill="#f5d8b0"/><rect x="241.3" y="118.8" width="1.6" height="1.6" fill="#f5d8b0"/><rect x="233.0" y="125.5" width="1.6" height="1.6" fill="#f5d8b0"/><rect x="228.2" y="127.4" width="1.6" height="1.6" fill="#f5d8b0"/><rect x="228.7" y="110.2" width="1.6" height="1.6" fill="#f5d8b0"/><rect x="254.5" y="108.6" width="1.6" height="1.6" fill="#f5d8b0"/><rect x="226.5" y="118.7" width="1.6" height="1.6" fill="#f5d8b0"/><rect x="232.8" y="106.8" width="1.6" height="1.6" fill="#f5d8b0"/><rect x="234.1" y="109.7" width="1.6" height="1.6" fill="#f5d8b0"/><rect x="232.1" y="107.6" width="1.6" height="1.6" fill="#f5d8b0"/><rect x="256.7" y="111.8" width="1.6" height="1.6" fill="#f5d8b0"/><rect x="250.9" y="105.0" width="1.6" height="1.6" fill="#f5d8b0"/><rect x="247.6" y="105.1" width="1.6" height="1.6" fill="#f5d8b0"/><rect x="236.6" y="125.5" width="1.6" height="1.6" fill="#f5d8b0"/><rect x="237.6" y="101.8" width="1.6" height="1.6" fill="#f5d8b0"/><rect x="235.2" y="116.1" width="1.6" height="1.6" fill="#f5d8b0"/><rect x="248.2" y="107.1" width="1.6" height="1.6" fill="#f5d8b0"/><rect x="238.2" y="118.8" width="1.6" height="1.6" fill="#f5d8b0"/><rect x="226.5" y="117.0" width="1.6" height="1.6" fill="#f5d8b0"/><rect x="232.5" y="123.0" width="1.6" height="1.6" fill="#f5d8b0"/><rect x="240.6" y="115.9" width="1.6" height="1.6" fill="#f5d8b0"/><rect x="224.5" y="117.2" width="1.6" height="1.6" fill="#f5d8b0"/><rect x="237.8" y="107.4" width="1.6" height="1.6" fill="#f5d8b0"/><rect x="236.7" y="105.0" width="1.6" height="1.6" fill="#f5d8b0"/><rect x="244.1" y="125.9" width="1.6" height="1.6" fill="#f5d8b0"/><rect x="249.0" y="111.9" width="1.6" height="1.6" fill="#f5d8b0"/><rect x="256.6" y="125.4" width="1.6" height="1.6" fill="#f5d8b0"/><rect x="231.2" y="116.4" width="1.6" height="1.6" fill="#f5d8b0"/><rect x="226.6" y="116.9" width="1.6" height="1.6" fill="#f5d8b0"/><rect x="249.1" y="130.7" width="1.6" height="1.6" fill="#f5d8b0"/><rect x="238.3" y="102.2" width="1.6" height="1.6" fill="#f5d8b0"/><rect x="240.3" y="131.9" width="1.6" height="1.6" fill="#f5d8b0"/><rect x="243.5" y="131.4" width="1.6" height="1.6" fill="#f5d8b0"/><rect x="249.5" y="132.1" width="1.6" height="1.6" fill="#f5d8b0"/><rect x="248.9" y="110.3" width="1.6" height="1.6" fill="#f5d8b0"/><rect x="245.1" y="135.4" width="1.6" height="1.6" fill="#f5d8b0"/><rect x="276.0" y="136.9" width="1.6" height="1.6" fill="#e6dcc8"/><rect x="290.2" y="149.7" width="1.6" height="1.6" fill="#e6dcc8"/><rect x="274.1" y="142.8" width="1.6" height="1.6" fill="#e6dcc8"/><rect x="269.5" y="151.9" width="1.6" height="1.6" fill="#e6dcc8"/><rect x="280.1" y="142.4" width="1.6" height="1.6" fill="#e6dcc8"/><rect x="275.6" y="144.0" width="1.6" height="1.6" fill="#e6dcc8"/><rect x="286.9" y="146.1" width="1.6" height="1.6" fill="#e6dcc8"/><rect x="287.7" y="142.2" width="1.6" height="1.6" fill="#e6dcc8"/><rect x="274.2" y="143.7" width="1.6" height="1.6" fill="#e6dcc8"/><rect x="274.6" y="146.8" width="1.6" height="1.6" fill="#e6dcc8"/><rect x="285.6" y="155.2" width="1.6" height="1.6" fill="#e6dcc8"/><rect x="272.3" y="155.5" width="1.6" height="1.6" fill="#e6dcc8"/><rect x="279.6" y="157.7" width="1.6" height="1.6" fill="#e6dcc8"/><rect x="277.7" y="141.0" width="1.6" height="1.6" fill="#e6dcc8"/><rect x="284.9" y="152.2" width="1.6" height="1.6" fill="#e6dcc8"/><rect x="275.2" y="147.7" width="1.6" height="1.6" fill="#e6dcc8"/><rect x="280.1" y="150.1" width="1.6" height="1.6" fill="#e6dcc8"/><rect x="269.7" y="141.0" width="1.6" height="1.6" fill="#e6dcc8"/><rect x="279.5" y="149.7" width="1.6" height="1.6" fill="#e6dcc8"/><rect x="275.9" y="137.1" width="1.6" height="1.6" fill="#e6dcc8"/><rect x="288.2" y="145.4" width="1.6" height="1.6" fill="#e6dcc8"/><rect x="273.0" y="156.7" width="1.6" height="1.6" fill="#e6dcc8"/><rect x="286.4" y="154.2" width="1.6" height="1.6" fill="#e6dcc8"/><rect x="285.3" y="151.8" width="1.6" height="1.6" fill="#e6dcc8"/><rect x="271.6" y="147.7" width="1.6" height="1.6" fill="#e6dcc8"/><rect x="281.8" y="152.5" width="1.6" height="1.6" fill="#e6dcc8"/><rect x="282.5" y="140.1" width="1.6" height="1.6" fill="#e6dcc8"/><rect x="274.2" y="144.8" width="1.6" height="1.6" fill="#e6dcc8"/><rect x="277.5" y="140.8" width="1.6" height="1.6" fill="#e6dcc8"/><rect x="269.5" y="141.2" width="1.6" height="1.6" fill="#e6dcc8"/><rect x="281.6" y="147.4" width="1.6" height="1.6" fill="#e6dcc8"/><rect x="282.2" y="136.9" width="1.6" height="1.6" fill="#e6dcc8"/><rect x="275.9" y="154.2" width="1.6" height="1.6" fill="#e6dcc8"/><rect x="268.9" y="142.0" width="1.6" height="1.6" fill="#e6dcc8"/><rect x="269.9" y="154.1" width="1.6" height="1.6" fill="#e6dcc8"/><rect x="279.2" y="142.8" width="1.6" height="1.6" fill="#e6dcc8"/><rect x="280.3" y="146.7" width="1.6" height="1.6" fill="#e6dcc8"/><rect x="285.0" y="155.2" width="1.6" height="1.6" fill="#e6dcc8"/><rect x="285.9" y="150.1" width="1.6" height="1.6" fill="#e6dcc8"/><rect x="284.6" y="153.4" width="1.6" height="1.6" fill="#e6dcc8"/><rect x="237.9" y="169.4" width="1.6" height="1.6" fill="#f0f0f0"/><rect x="233.9" y="182.3" width="1.6" height="1.6" fill="#f0f0f0"/><rect x="232.0" y="178.9" width="1.6" height="1.6" fill="#f0f0f0"/><rect x="229.5" y="186.6" width="1.6" height="1.6" fill="#f0f0f0"/><rect x="232.4" y="182.8" width="1.6" height="1.6" fill="#f0f0f0"/><rect x="221.9" y="171.7" width="1.6" height="1.6" fill="#f0f0f0"/><rect x="224.9" y="168.8" width="1.6" height="1.6" fill="#f0f0f0"/><rect x="225.4" y="173.5" width="1.6" height="1.6" fill="#f0f0f0"/><rect x="220.2" y="170.7" width="1.6" height="1.6" fill="#f0f0f0"/><rect x="225.6" y="175.8" width="1.6" height="1.6" fill="#f0f0f0"/><rect x="243.8" y="186.9" width="1.6" height="1.6" fill="#f0f0f0"/><rect x="222.8" y="176.7" width="1.6" height="1.6" fill="#f0f0f0"/><rect x="221.4" y="174.6" width="1.6" height="1.6" fill="#f0f0f0"/><rect x="226.6" y="181.0" width="1.6" height="1.6" fill="#f0f0f0"/><rect x="224.5" y="189.2" width="1.6" height="1.6" fill="#f0f0f0"/><rect x="234.7" y="194.9" width="1.6" height="1.6" fill="#f0f0f0"/><rect x="219.5" y="187.1" width="1.6" height="1.6" fill="#f0f0f0"/><rect x="227.3" y="168.9" width="1.6" height="1.6" fill="#f0f0f0"/><rect x="227.9" y="168.7" width="1.6" height="1.6" fill="#f0f0f0"/><rect x="230.2" y="196.3" width="1.6" height="1.6" fill="#f0f0f0"/><rect x="238.7" y="193.2" width="1.6" height="1.6" fill="#f0f0f0"/><rect x="238.7" y="170.5" width="1.6" height="1.6" fill="#f0f0f0"/><rect x="234.6" y="183.0" width="1.6" height="1.6" fill="#f0f0f0"/><rect x="234.2" y="172.0" width="1.6" height="1.6" fill="#f0f0f0"/><rect x="220.1" y="192.3" width="1.6" height="1.6" fill="#f0f0f0"/><rect x="240.9" y="184.2" width="1.6" height="1.6" fill="#f0f0f0"/><rect x="225.3" y="183.4" width="1.6" height="1.6" fill="#f0f0f0"/><rect x="220.3" y="189.2" width="1.6" height="1.6" fill="#f0f0f0"/><rect x="232.0" y="179.9" width="1.6" height="1.6" fill="#f0f0f0"/><rect x="225.8" y="180.8" width="1.6" height="1.6" fill="#f0f0f0"/><rect x="231.7" y="177.3" width="1.6" height="1.6" fill="#f0f0f0"/><rect x="239.4" y="183.5" width="1.6" height="1.6" fill="#f0f0f0"/><rect x="229.4" y="173.2" width="1.6" height="1.6" fill="#f0f0f0"/><rect x="239.5" y="191.2" width="1.6" height="1.6" fill="#f0f0f0"/><rect x="235.1" y="168.5" width="1.6" height="1.6" fill="#f0f0f0"/><rect x="227.1" y="190.7" width="1.6" height="1.6" fill="#f0f0f0"/><rect x="230.6" y="192.7" width="1.6" height="1.6" fill="#f0f0f0"/><rect x="226.1" y="189.2" width="1.6" height="1.6" fill="#f0f0f0"/><rect x="233.3" y="167.1" width="1.6" height="1.6" fill="#f0f0f0"/><rect x="226.1" y="179.1" width="1.6" height="1.6" fill="#f0f0f0"/><rect x="224.5" y="173.3" width="1.6" height="1.6" fill="#f0f0f0"/><rect x="243.0" y="180.5" width="1.6" height="1.6" fill="#f0f0f0"/><rect x="236.7" y="170.7" width="1.6" height="1.6" fill="#f0f0f0"/><rect x="216.4" y="178.4" width="1.6" height="1.6" fill="#f0f0f0"/><rect x="234.3" y="174.4" width="1.6" height="1.6" fill="#f0f0f0"/><rect x="235.3" y="189.1" width="1.6" height="1.6" fill="#f0f0f0"/><rect x="225.7" y="180.9" width="1.6" height="1.6" fill="#f0f0f0"/><rect x="223.9" y="190.9" width="1.6" height="1.6" fill="#f0f0f0"/><rect x="243.3" y="185.2" width="1.6" height="1.6" fill="#f0f0f0"/><rect x="225.4" y="174.7" width="1.6" height="1.6" fill="#f0f0f0"/><rect x="227.6" y="190.0" width="1.6" height="1.6" fill="#f0f0f0"/><rect x="224.4" y="193.1" width="1.6" height="1.6" fill="#f0f0f0"/><rect x="219.4" y="181.4" width="1.6" height="1.6" fill="#f0f0f0"/><rect x="238.8" y="193.0" width="1.6" height="1.6" fill="#f0f0f0"/><rect x="226.4" y="189.1" width="1.6" height="1.6" fill="#f0f0f0"/><rect x="243.8" y="187.7" width="1.6" height="1.6" fill="#f0f0f0"/><rect x="216.1" y="183.3" width="1.6" height="1.6" fill="#f0f0f0"/><rect x="243.6" y="175.0" width="1.6" height="1.6" fill="#f0f0f0"/><rect x="236.0" y="168.3" width="1.6" height="1.6" fill="#f0f0f0"/><rect x="242.1" y="175.2" width="1.6" height="1.6" fill="#f0f0f0"/><rect x="237.5" y="189.6" width="1.6" height="1.6" fill="#f0f0f0"/><rect x="217.0" y="174.7" width="1.6" height="1.6" fill="#f0f0f0"/><rect x="232.9" y="169.2" width="1.6" height="1.6" fill="#f0f0f0"/><rect x="230.1" y="172.5" width="1.6" height="1.6" fill="#f0f0f0"/><rect x="241.5" y="177.2" width="1.6" height="1.6" fill="#f0f0f0"/><rect x="221.9" y="187.4" width="1.6" height="1.6" fill="#f0f0f0"/><rect x="241.1" y="180.1" width="1.6" height="1.6" fill="#f0f0f0"/><rect x="233.2" y="186.5" width="1.6" height="1.6" fill="#f0f0f0"/><rect x="226.0" y="171.1" width="1.6" height="1.6" fill="#f0f0f0"/><rect x="235.7" y="177.9" width="1.6" height="1.6" fill="#f0f0f0"/><rect x="219.5" y="188.3" width="1.6" height="1.6" fill="#f0f0f0"/><rect x="234.8" y="183.0" width="1.6" height="1.6" fill="#f0f0f0"/><rect x="222.9" y="179.3" width="1.6" height="1.6" fill="#f0f0f0"/><rect x="236.3" y="186.3" width="1.6" height="1.6" fill="#f0f0f0"/><rect x="222.9" y="173.5" width="1.6" height="1.6" fill="#f0f0f0"/><rect x="233.9" y="183.4" width="1.6" height="1.6" fill="#f0f0f0"/><rect x="237.4" y="171.8" width="1.6" height="1.6" fill="#f0f0f0"/><rect x="236.8" y="193.8" width="1.6" height="1.6" fill="#f0f0f0"/><rect x="239.3" y="182.7" width="1.6" height="1.6" fill="#f0f0f0"/><rect x="237.5" y="171.1" width="1.6" height="1.6" fill="#f0f0f0"/><rect x="262.3" y="188.7" width="1.6" height="1.6" fill="#a0d4d4"/><rect x="256.1" y="172.6" width="1.6" height="1.6" fill="#a0d4d4"/><rect x="270.1" y="174.0" width="1.6" height="1.6" fill="#a0d4d4"/><rect x="260.8" y="171.3" width="1.6" height="1.6" fill="#a0d4d4"/><rect x="273.7" y="175.1" width="1.6" height="1.6" fill="#a0d4d4"/><rect x="263.0" y="168.7" width="1.6" height="1.6" fill="#a0d4d4"/><rect x="270.1" y="178.4" width="1.6" height="1.6" fill="#a0d4d4"/><rect x="267.4" y="187.6" width="1.6" height="1.6" fill="#a0d4d4"/><rect x="265.5" y="170.7" width="1.6" height="1.6" fill="#a0d4d4"/><rect x="257.5" y="179.1" width="1.6" height="1.6" fill="#a0d4d4"/><rect x="271.7" y="171.9" width="1.6" height="1.6" fill="#a0d4d4"/><rect x="262.6" y="177.4" width="1.6" height="1.6" fill="#a0d4d4"/><rect x="268.9" y="172.5" width="1.6" height="1.6" fill="#a0d4d4"/><rect x="266.7" y="184.1" width="1.6" height="1.6" fill="#a0d4d4"/><rect x="264.2" y="177.7" width="1.6" height="1.6" fill="#a0d4d4"/><rect x="268.9" y="182.6" width="1.6" height="1.6" fill="#a0d4d4"/><rect x="271.7" y="172.3" width="1.6" height="1.6" fill="#a0d4d4"/><rect x="272.5" y="177.0" width="1.6" height="1.6" fill="#a0d4d4"/><rect x="257.1" y="174.9" width="1.6" height="1.6" fill="#a0d4d4"/><rect x="256.5" y="177.2" width="1.6" height="1.6" fill="#a0d4d4"/><rect x="269.0" y="168.7" width="1.6" height="1.6" fill="#a0d4d4"/><rect x="257.2" y="183.3" width="1.6" height="1.6" fill="#a0d4d4"/><rect x="262.4" y="184.2" width="1.6" height="1.6" fill="#a0d4d4"/><rect x="256.1" y="178.2" width="1.6" height="1.6" fill="#a0d4d4"/><rect x="254.2" y="175.2" width="1.6" height="1.6" fill="#a0d4d4"/><rect x="269.1" y="186.0" width="1.6" height="1.6" fill="#a0d4d4"/><rect x="273.9" y="178.1" width="1.6" height="1.6" fill="#a0d4d4"/><rect x="258.4" y="175.8" width="1.6" height="1.6" fill="#a0d4d4"/><rect x="255.8" y="184.7" width="1.6" height="1.6" fill="#a0d4d4"/><rect x="271.6" y="173.0" width="1.6" height="1.6" fill="#a0d4d4"/><rect x="201.7" y="215.8" width="1.6" height="1.6" fill="#d8a8d8"/><rect x="197.5" y="216.4" width="1.6" height="1.6" fill="#d8a8d8"/><rect x="185.3" y="223.5" width="1.6" height="1.6" fill="#d8a8d8"/><rect x="188.0" y="227.7" width="1.6" height="1.6" fill="#d8a8d8"/><rect x="188.2" y="222.2" width="1.6" height="1.6" fill="#d8a8d8"/><rect x="190.7" y="222.4" width="1.6" height="1.6" fill="#d8a8d8"/><rect x="190.1" y="226.6" width="1.6" height="1.6" fill="#d8a8d8"/><rect x="198.1" y="222.0" width="1.6" height="1.6" fill="#d8a8d8"/><rect x="193.4" y="230.7" width="1.6" height="1.6" fill="#d8a8d8"/><rect x="189.5" y="218.6" width="1.6" height="1.6" fill="#d8a8d8"/><rect x="199.1" y="221.4" width="1.6" height="1.6" fill="#d8a8d8"/><rect x="185.4" y="220.8" width="1.6" height="1.6" fill="#d8a8d8"/><rect x="191.6" y="215.4" width="1.6" height="1.6" fill="#d8a8d8"/><rect x="195.2" y="214.6" width="1.6" height="1.6" fill="#d8a8d8"/><rect x="192.5" y="214.7" width="1.6" height="1.6" fill="#d8a8d8"/><rect x="202.3" y="220.0" width="1.6" height="1.6" fill="#d8a8d8"/><rect x="197.0" y="223.5" width="1.6" height="1.6" fill="#d8a8d8"/><rect x="198.7" y="220.5" width="1.6" height="1.6" fill="#d8a8d8"/><rect x="199.0" y="222.3" width="1.6" height="1.6" fill="#d8a8d8"/><rect x="184.3" y="222.8" width="1.6" height="1.6" fill="#d8a8d8"/><rect x="187.2" y="226.5" width="1.6" height="1.6" fill="#d8a8d8"/><rect x="195.5" y="218.9" width="1.6" height="1.6" fill="#d8a8d8"/><rect x="186.4" y="215.1" width="1.6" height="1.6" fill="#d8a8d8"/><rect x="187.0" y="219.3" width="1.6" height="1.6" fill="#d8a8d8"/><rect x="188.5" y="229.5" width="1.6" height="1.6" fill="#d8a8d8"/><rect x="175" y="52" width="5" height="5" fill="#9bc2a7"/><rect x="203" y="117" width="5" height="5" fill="#9bc2a7"/><rect x="284" y="155" width="5" height="5" fill="#b1a49a"/><rect x="240" y="188" width="5" height="5" fill="#9bc2b7"/><rect x="187" y="228" width="5" height="5" fill="#eee"/><rect x="169.5" y="35.3" width="15" height="15" fill="#000" stroke="#6a6a6a" stroke-width="1.2"/><circle cx="177" cy="42.8" r="5.1000000000000005" fill="#f4f4f4" stroke="#d22" stroke-width="1.3499999999999999"/><text x="177" y="44.599999999999994" font-size="4.5" text-anchor="middle" font-family="Liberation Sans" fill="#222">20</text><rect x="213.0" y="34.5" width="13" height="13" fill="#000" stroke="#6a6a6a" stroke-width="1.2"/><circle cx="219.5" cy="41" r="4.42" fill="#f4f4f4" stroke="#d22" stroke-width="1.17"/><text x="219.5" y="42.56" font-size="3.9" text-anchor="middle" font-family="Liberation Sans" fill="#222">30</text><rect x="254.0" y="81.5" width="13" height="13" fill="#000" stroke="#6a6a6a" stroke-width="1.2"/><circle cx="260.5" cy="88" r="4.42" fill="#f4f4f4" stroke="#d22" stroke-width="1.17"/><text x="260.5" y="89.56" font-size="3.9" text-anchor="middle" font-family="Liberation Sans" fill="#222">60</text><rect x="202.5" y="103.0" width="14" height="14" fill="#000" stroke="#6a6a6a" stroke-width="1.2"/><circle cx="209.5" cy="110" r="4.760000000000001" fill="#f4f4f4" stroke="#d22" stroke-width="1.26"/><text x="209.5" y="111.68" font-size="4.2" text-anchor="middle" font-family="Liberation Sans" fill="#222">50</text><rect x="235.0" y="111.0" width="14" height="14" fill="#000" stroke="#6a6a6a" stroke-width="1.2"/><circle cx="242" cy="118" r="4.760000000000001" fill="#f4f4f4" stroke="#d22" stroke-width="1.26"/><text x="242" y="119.68" font-size="4.2" text-anchor="middle" font-family="Liberation Sans" fill="#222">50</text><rect x="272.0" y="140.5" width="14" height="14" fill="#000" stroke="#6a6a6a" stroke-width="1.2"/><circle cx="279" cy="147.5" r="4.760000000000001" fill="#f4f4f4" stroke="#d22" stroke-width="1.26"/><text x="279" y="149.18" font-size="4.2" text-anchor="middle" font-family="Liberation Sans" fill="#222">120</text><rect x="221.3" y="172.5" width="18" height="18" fill="#000" stroke="#6a6a6a" stroke-width="1.2"/><circle cx="230.3" cy="181.5" r="6.12" fill="#f4f4f4" stroke="#d22" stroke-width="1.6199999999999999"/><text x="230.3" y="183.66" font-size="5.3999999999999995" text-anchor="middle" font-family="Liberation Sans" fill="#222">80</text><rect x="258.0" y="172.0" width="13" height="13" fill="#000" stroke="#6a6a6a" stroke-width="1.2"/><circle cx="264.5" cy="178.5" r="4.42" fill="#f4f4f4" stroke="#d22" stroke-width="1.17"/><text x="264.5" y="180.06" font-size="3.9" text-anchor="middle" font-family="Liberation Sans" fill="#222">60</text><rect x="187.0" y="214.5" width="14" height="14" fill="#000" stroke="#6a6a6a" stroke-width="1.2"/><circle cx="194" cy="221.5" r="4.760000000000001" fill="#f4f4f4" stroke="#d22" stroke-width="1.26"/><text x="194" y="223.18" font-size="4.2" text-anchor="middle" font-family="Liberation Sans" fill="#222">100</text></svg><div class="abs" style="left:7.5px;top:239px;width:100px;height:22px"><div class="abs" style="left:0.0px;top:0;width:20px;height:20px;background:#d2d2d2;border:1px solid #888;box-shadow:inset 1px 1px 0 #eee,inset -1px -1px 0 #999"><svg width="18" height="18" style="position:absolute;left:0;top:0"><rect x="4" y="4" width="9" height="9" fill="#111"/><circle cx="14" cy="14" r="3.5" fill="#111" stroke="#ddd" stroke-width="1"/></svg></div><div class="abs" style="left:21.5px;top:0;width:20px;height:20px;background:#d2d2d2;border:1px solid #888;box-shadow:inset 1px 1px 0 #eee,inset -1px -1px 0 #999"><svg width="18" height="18" style="position:absolute;left:0;top:0"><circle cx="9" cy="9" r="6" fill="#111"/><circle cx="7" cy="7" r="1.3" fill="#ddd"/><circle cx="10" cy="6" r="1.2" fill="#ddd"/><circle cx="14" cy="14" r="3.5" fill="#111" stroke="#ddd" stroke-width="1"/></svg></div><div class="abs" style="left:43.0px;top:0;width:20px;height:20px;background:#c4c4c4;border:1px solid #888;box-shadow:inset 1px 1px 0 #eee,inset -1px -1px 0 #999"><svg width="18" height="18" style="position:absolute;left:0;top:0"><circle cx="10" cy="7" r="2.5" fill="#aaa"/><rect x="9.3" y="8" width="1.4" height="7" fill="#aaa"/></svg></div><div class="abs" style="left:64.5px;top:0;width:20px;height:20px;background:#d2d2d2;border:1px solid #888;box-shadow:inset 1px 1px 0 #eee,inset -1px -1px 0 #999"><svg width="18" height="18" style="position:absolute;left:0;top:0"><path d="M5,9 A5,5 0 0 1 14,6 M15,10 A5,5 0 0 1 6,13" stroke="#111" stroke-width="1.8" fill="none"/><path d="M12,3 L15,7 L11,7Z M8,16 L5,12 L9,12Z" fill="#111"/></svg></div></div></div>
<div class="abs" style="left:546px;top:509px;width:387px;height:270px;border:2.5px solid #d9d9d9;border-radius:6px;background:#1f1c21;overflow:hidden"><svg class="abs" style="left:0;top:0" width="383" height="266"><path d="M172.4,-6.6 L179.8,-2.3 L179.8,6.3 L172.4,10.6 L164.9,6.3 L164.9,-2.3Z" fill="#2d2a2e"/><path d="M186.4,-6.6 L193.8,-2.3 L193.8,6.3 L186.4,10.6 L178.9,6.3 L178.9,-2.3Z" fill="#2d2a2e"/><path d="M200.4,-6.6 L207.9,-2.3 L207.9,6.3 L200.4,10.6 L193.0,6.3 L193.0,-2.3Z" fill="#2d2a2e"/><path d="M151.3,5.5 L158.8,9.8 L158.8,18.4 L151.3,22.8 L143.9,18.4 L143.9,9.8Z" fill="#2d2a2e"/><path d="M165.3,5.5 L172.8,9.8 L172.8,18.4 L165.3,22.8 L157.9,18.4 L157.9,9.8Z" fill="#2d2a2e"/><path d="M179.4,5.5 L186.8,9.8 L186.8,18.4 L179.4,22.8 L171.9,18.4 L171.9,9.8Z" fill="#2d2a2e"/><path d="M193.4,5.5 L200.8,9.8 L200.8,18.4 L193.4,22.8 L186.0,18.4 L186.0,9.8Z" fill="#2d2a2e"/><path d="M207.4,5.5 L214.9,9.8 L214.9,18.4 L207.4,22.8 L200.0,18.4 L200.0,9.8Z" fill="#2d2a2e"/><path d="M221.5,5.5 L228.9,9.8 L228.9,18.4 L221.5,22.8 L214.0,18.4 L214.0,9.8Z" fill="#2d2a2e"/><path d="M235.5,5.5 L242.9,9.8 L242.9,18.4 L235.5,22.8 L228.0,18.4 L228.0,9.8Z" fill="#2d2a2e"/><path d="M130.3,17.7 L137.7,22.0 L137.7,30.6 L130.3,34.9 L122.8,30.6 L122.8,22.0Z" fill="#2d2a2e"/><path d="M144.3,17.7 L151.7,22.0 L151.7,30.6 L144.3,34.9 L136.8,30.6 L136.8,22.0Z" fill="#2d2a2e"/><path d="M158.3,17.7 L165.8,22.0 L165.8,30.6 L158.3,34.9 L150.9,30.6 L150.9,22.0Z" fill="#2d2a2e"/><path d="M172.4,17.7 L179.8,22.0 L179.8,30.6 L172.4,34.9 L164.9,30.6 L164.9,22.0Z" fill="#211e23"/><path d="M186.4,17.7 L193.8,22.0 L193.8,30.6 L186.4,34.9 L178.9,30.6 L178.9,22.0Z" fill="#2d2a2e"/><path d="M200.4,17.7 L207.9,22.0 L207.9,30.6 L200.4,34.9 L193.0,30.6 L193.0,22.0Z" fill="#211e23"/><path d="M214.4,17.7 L221.9,22.0 L221.9,30.6 L214.4,34.9 L207.0,30.6 L207.0,22.0Z" fill="#45353a"/><path d="M228.5,17.7 L235.9,22.0 L235.9,30.6 L228.5,34.9 L221.0,30.6 L221.0,22.0Z" fill="#45353a"/><path d="M242.5,17.7 L250.0,22.0 L250.0,30.6 L242.5,34.9 L235.1,30.6 L235.1,22.0Z" fill="#45353a"/><path d="M256.5,17.7 L264.0,22.0 L264.0,30.6 L256.5,34.9 L249.1,30.6 L249.1,22.0Z" fill="#2d2a2e"/><path d="M109.2,29.8 L116.7,34.1 L116.7,42.7 L109.2,47.0 L101.8,42.7 L101.8,34.1Z" fill="#2d2a2e"/><path d="M123.3,29.8 L130.7,34.1 L130.7,42.7 L123.3,47.0 L115.8,42.7 L115.8,34.1Z" fill="#211e23"/><path d="M137.3,29.8 L144.7,34.1 L144.7,42.7 L137.3,47.0 L129.8,42.7 L129.8,34.1Z" fill="#2d2a2e"/><path d="M151.3,29.8 L158.8,34.1 L158.8,42.7 L151.3,47.0 L143.9,42.7 L143.9,34.1Z" fill="#2d2a2e"/><path d="M165.3,29.8 L172.8,34.1 L172.8,42.7 L165.3,47.0 L157.9,42.7 L157.9,34.1Z" fill="#2d2a2e"/><path d="M179.4,29.8 L186.8,34.1 L186.8,42.7 L179.4,47.0 L171.9,42.7 L171.9,34.1Z" fill="#2d2a2e"/><path d="M193.4,29.8 L200.8,34.1 L200.8,42.7 L193.4,47.0 L186.0,42.7 L186.0,34.1Z" fill="#2d2a2e"/><path d="M207.4,29.8 L214.9,34.1 L214.9,42.7 L207.4,47.0 L200.0,42.7 L200.0,34.1Z" fill="#2d2a2e"/><path d="M221.5,29.8 L228.9,34.1 L228.9,42.7 L221.5,47.0 L214.0,42.7 L214.0,34.1Z" fill="#45353a"/><path d="M235.5,29.8 L242.9,34.1 L242.9,42.7 L235.5,47.0 L228.0,42.7 L228.0,34.1Z" fill="#45353a"/><path d="M249.5,29.8 L257.0,34.1 L257.0,42.7 L249.5,47.0 L242.1,42.7 L242.1,34.1Z" fill="#2d2a2e"/><path d="M263.5,29.8 L271.0,34.1 L271.0,42.7 L263.5,47.0 L256.1,42.7 L256.1,34.1Z" fill="#2d2a2e"/><path d="M88.2,42.0 L95.6,46.3 L95.6,54.9 L88.2,59.2 L80.7,54.9 L80.7,46.3Z" fill="#2d2a2e"/><path d="M102.2,42.0 L109.7,46.3 L109.7,54.9 L102.2,59.2 L94.8,54.9 L94.8,46.3Z" fill="#2d2a2e"/><path d="M116.2,42.0 L123.7,46.3 L123.7,54.9 L116.2,59.2 L108.8,54.9 L108.8,46.3Z" fill="#2d2a2e"/><path d="M130.3,42.0 L137.7,46.3 L137.7,54.9 L130.3,59.2 L122.8,54.9 L122.8,46.3Z" fill="#2d2a2e"/><path d="M144.3,42.0 L151.7,46.3 L151.7,54.9 L144.3,59.2 L136.8,54.9 L136.8,46.3Z" fill="#2d2a2e"/><path d="M158.3,42.0 L165.8,46.3 L165.8,54.9 L158.3,59.2 L150.9,54.9 L150.9,46.3Z" fill="#2d2a2e"/><path d="M172.4,42.0 L179.8,46.3 L179.8,54.9 L172.4,59.2 L164.9,54.9 L164.9,46.3Z" fill="#2d2a2e"/><path d="M186.4,42.0 L193.8,46.3 L193.8,54.9 L186.4,59.2 L178.9,54.9 L178.9,46.3Z" fill="#2d2a2e"/><path d="M200.4,42.0 L207.9,46.3 L207.9,54.9 L200.4,59.2 L193.0,54.9 L193.0,46.3Z" fill="#2d2a2e"/><path d="M214.4,42.0 L221.9,46.3 L221.9,54.9 L214.4,59.2 L207.0,54.9 L207.0,46.3Z" fill="#45353a"/><path d="M228.5,42.0 L235.9,46.3 L235.9,54.9 L228.5,59.2 L221.0,54.9 L221.0,46.3Z" fill="#45353a"/><path d="M242.5,42.0 L250.0,46.3 L250.0,54.9 L242.5,59.2 L235.1,54.9 L235.1,46.3Z" fill="#45353a"/><path d="M256.5,42.0 L264.0,46.3 L264.0,54.9 L256.5,59.2 L249.1,54.9 L249.1,46.3Z" fill="#2d2a2e"/><path d="M270.6,42.0 L278.0,46.3 L278.0,54.9 L270.6,59.2 L263.1,54.9 L263.1,46.3Z" fill="#2d2a2e"/><path d="M284.6,42.0 L292.0,46.3 L292.0,54.9 L284.6,59.2 L277.1,54.9 L277.1,46.3Z" fill="#2d2a2e"/><path d="M81.2,54.1 L88.6,58.5 L88.6,67.0 L81.2,71.3 L73.7,67.0 L73.7,58.5Z" fill="#2d2a2e"/><path d="M95.2,54.1 L102.6,58.5 L102.6,67.0 L95.2,71.3 L87.7,67.0 L87.7,58.5Z" fill="#2d2a2e"/><path d="M109.2,54.1 L116.7,58.5 L116.7,67.0 L109.2,71.3 L101.8,67.0 L101.8,58.5Z" fill="#2d2a2e"/><path d="M123.3,54.1 L130.7,58.5 L130.7,67.0 L123.3,71.3 L115.8,67.0 L115.8,58.5Z" fill="#2d2a2e"/><path d="M137.3,54.1 L144.7,58.5 L144.7,67.0 L137.3,71.3 L129.8,67.0 L129.8,58.5Z" fill="#2d2a2e"/><path d="M151.3,54.1 L158.8,58.5 L158.8,67.0 L151.3,71.3 L143.9,67.0 L143.9,58.5Z" fill="#2d2a2e"/><path d="M165.3,54.1 L172.8,58.5 L172.8,67.0 L165.3,71.3 L157.9,67.0 L157.9,58.5Z" fill="#2d2a2e"/><path d="M179.4,54.1 L186.8,58.5 L186.8,67.0 L179.4,71.3 L171.9,67.0 L171.9,58.5Z" fill="#2d2a2e"/><path d="M193.4,54.1 L200.8,58.5 L200.8,67.0 L193.4,71.3 L186.0,67.0 L186.0,58.5Z" fill="#2d2a2e"/><path d="M207.4,54.1 L214.9,58.5 L214.9,67.0 L207.4,71.3 L200.0,67.0 L200.0,58.5Z" fill="#2d2a2e"/><path d="M221.5,54.1 L228.9,58.5 L228.9,67.0 L221.5,71.3 L214.0,67.0 L214.0,58.5Z" fill="#45353a"/><path d="M235.5,54.1 L242.9,58.5 L242.9,67.0 L235.5,71.3 L228.0,67.0 L228.0,58.5Z" fill="#45353a"/><path d="M249.5,54.1 L257.0,58.5 L257.0,67.0 L249.5,71.3 L242.1,67.0 L242.1,58.5Z" fill="#2d2a2e"/><path d="M263.5,54.1 L271.0,58.5 L271.0,67.0 L263.5,71.3 L256.1,67.0 L256.1,58.5Z" fill="#211e23"/><path d="M277.6,54.1 L285.0,58.5 L285.0,67.0 L277.6,71.3 L270.1,67.0 L270.1,58.5Z" fill="#2d2a2e"/><path d="M291.6,54.1 L299.1,58.5 L299.1,67.0 L291.6,71.3 L284.2,67.0 L284.2,58.5Z" fill="#2d2a2e"/><path d="M74.1,66.3 L81.6,70.6 L81.6,79.2 L74.1,83.5 L66.7,79.2 L66.7,70.6Z" fill="#2d2a2e"/><path d="M88.2,66.3 L95.6,70.6 L95.6,79.2 L88.2,83.5 L80.7,79.2 L80.7,70.6Z" fill="#2d2a2e"/><path d="M102.2,66.3 L109.7,70.6 L109.7,79.2 L102.2,83.5 L94.8,79.2 L94.8,70.6Z" fill="#2d2a2e"/><path d="M116.2,66.3 L123.7,70.6 L123.7,79.2 L116.2,83.5 L108.8,79.2 L108.8,70.6Z" fill="#2d2a2e"/><path d="M130.3,66.3 L137.7,70.6 L137.7,79.2 L130.3,83.5 L122.8,79.2 L122.8,70.6Z" fill="#2d2a2e"/><path d="M144.3,66.3 L151.7,70.6 L151.7,79.2 L144.3,83.5 L136.8,79.2 L136.8,70.6Z" fill="#211e23"/><path d="M158.3,66.3 L165.8,70.6 L165.8,79.2 L158.3,83.5 L150.9,79.2 L150.9,70.6Z" fill="#2d2a2e"/><path d="M172.4,66.3 L179.8,70.6 L179.8,79.2 L172.4,83.5 L164.9,79.2 L164.9,70.6Z" fill="#2d2a2e"/><path d="M186.4,66.3 L193.8,70.6 L193.8,79.2 L186.4,83.5 L178.9,79.2 L178.9,70.6Z" fill="#2d2a2e"/><path d="M200.4,66.3 L207.9,70.6 L207.9,79.2 L200.4,83.5 L193.0,79.2 L193.0,70.6Z" fill="#2d2a2e"/><path d="M214.4,66.3 L221.9,70.6 L221.9,79.2 L214.4,83.5 L207.0,79.2 L207.0,70.6Z" fill="#2d2a2e"/><path d="M228.5,66.3 L235.9,70.6 L235.9,79.2 L228.5,83.5 L221.0,79.2 L221.0,70.6Z" fill="#2d2a2e"/><path d="M242.5,66.3 L250.0,70.6 L250.0,79.2 L242.5,83.5 L235.1,79.2 L235.1,70.6Z" fill="#2d2a2e"/><path d="M256.5,66.3 L264.0,70.6 L264.0,79.2 L256.5,83.5 L249.1,79.2 L249.1,70.6Z" fill="#2d2a2e"/><path d="M270.6,66.3 L278.0,70.6 L278.0,79.2 L270.6,83.5 L263.1,79.2 L263.1,70.6Z" fill="#211e23"/><path d="M284.6,66.3 L292.0,70.6 L292.0,79.2 L284.6,83.5 L277.1,79.2 L277.1,70.6Z" fill="#2d2a2e"/><path d="M298.6,66.3 L306.1,70.6 L306.1,79.2 L298.6,83.5 L291.2,79.2 L291.2,70.6Z" fill="#2d2a2e"/><path d="M81.2,78.5 L88.6,82.8 L88.6,91.3 L81.2,95.6 L73.7,91.3 L73.7,82.8Z" fill="#2d2a2e"/><path d="M95.2,78.5 L102.6,82.8 L102.6,91.3 L95.2,95.6 L87.7,91.3 L87.7,82.8Z" fill="#2d2a2e"/><path d="M109.2,78.5 L116.7,82.8 L116.7,91.3 L109.2,95.6 L101.8,91.3 L101.8,82.8Z" fill="#211e23"/><path d="M123.3,78.5 L130.7,82.8 L130.7,91.3 L123.3,95.6 L115.8,91.3 L115.8,82.8Z" fill="#2d2a2e"/><path d="M137.3,78.5 L144.7,82.8 L144.7,91.3 L137.3,95.6 L129.8,91.3 L129.8,82.8Z" fill="#2d2a2e"/><path d="M151.3,78.5 L158.8,82.8 L158.8,91.3 L151.3,95.6 L143.9,91.3 L143.9,82.8Z" fill="#2d2a2e"/><path d="M165.3,78.5 L172.8,82.8 L172.8,91.3 L165.3,95.6 L157.9,91.3 L157.9,82.8Z" fill="#2d2a2e"/><path d="M179.4,78.5 L186.8,82.8 L186.8,91.3 L179.4,95.6 L171.9,91.3 L171.9,82.8Z" fill="#2d2a2e"/><path d="M193.4,78.5 L200.8,82.8 L200.8,91.3 L193.4,95.6 L186.0,91.3 L186.0,82.8Z" fill="#2d2a2e"/><path d="M207.4,78.5 L214.9,82.8 L214.9,91.3 L207.4,95.6 L200.0,91.3 L200.0,82.8Z" fill="#2d2a2e"/><path d="M221.5,78.5 L228.9,82.8 L228.9,91.3 L221.5,95.6 L214.0,91.3 L214.0,82.8Z" fill="#2d2a2e"/><path d="M235.5,78.5 L242.9,82.8 L242.9,91.3 L235.5,95.6 L228.0,91.3 L228.0,82.8Z" fill="#2d2a2e"/><path d="M249.5,78.5 L257.0,82.8 L257.0,91.3 L249.5,95.6 L242.1,91.3 L242.1,82.8Z" fill="#2d2a2e"/><path d="M263.5,78.5 L271.0,82.8 L271.0,91.3 L263.5,95.6 L256.1,91.3 L256.1,82.8Z" fill="#211e23"/><path d="M277.6,78.5 L285.0,82.8 L285.0,91.3 L277.6,95.6 L270.1,91.3 L270.1,82.8Z" fill="#2d2a2e"/><path d="M291.6,78.5 L299.1,82.8 L299.1,91.3 L291.6,95.6 L284.2,91.3 L284.2,82.8Z" fill="#211e23"/><path d="M74.1,90.6 L81.6,94.9 L81.6,103.5 L74.1,107.8 L66.7,103.5 L66.7,94.9Z" fill="#2d2a2e"/><path d="M88.2,90.6 L95.6,94.9 L95.6,103.5 L88.2,107.8 L80.7,103.5 L80.7,94.9Z" fill="#2d2a2e"/><path d="M102.2,90.6 L109.7,94.9 L109.7,103.5 L102.2,107.8 L94.8,103.5 L94.8,94.9Z" fill="#2d2a2e"/><path d="M116.2,90.6 L123.7,94.9 L123.7,103.5 L116.2,107.8 L108.8,103.5 L108.8,94.9Z" fill="#2d2a2e"/><path d="M130.3,90.6 L137.7,94.9 L137.7,103.5 L130.3,107.8 L122.8,103.5 L122.8,94.9Z" fill="#2d2a2e"/><path d="M144.3,90.6 L151.7,94.9 L151.7,103.5 L144.3,107.8 L136.8,103.5 L136.8,94.9Z" fill="#2d2a2e"/><path d="M158.3,90.6 L165.8,94.9 L165.8,103.5 L158.3,107.8 L150.9,103.5 L150.9,94.9Z" fill="#2d2a2e"/><path d="M172.4,90.6 L179.8,94.9 L179.8,103.5 L172.4,107.8 L164.9,103.5 L164.9,94.9Z" fill="#2d2a2e"/><path d="M186.4,90.6 L193.8,94.9 L193.8,103.5 L186.4,107.8 L178.9,103.5 L178.9,94.9Z" fill="#433a37"/><path d="M200.4,90.6 L207.9,94.9 L207.9,103.5 L200.4,107.8 L193.0,103.5 L193.0,94.9Z" fill="#433a37"/><path d="M214.4,90.6 L221.9,94.9 L221.9,103.5 L214.4,107.8 L207.0,103.5 L207.0,94.9Z" fill="#433a37"/><path d="M228.5,90.6 L235.9,94.9 L235.9,103.5 L228.5,107.8 L221.0,103.5 L221.0,94.9Z" fill="#433a37"/><path d="M242.5,90.6 L250.0,94.9 L250.0,103.5 L242.5,107.8 L235.1,103.5 L235.1,94.9Z" fill="#433a37"/><path d="M256.5,90.6 L264.0,94.9 L264.0,103.5 L256.5,107.8 L249.1,103.5 L249.1,94.9Z" fill="#433a37"/><path d="M270.6,90.6 L278.0,94.9 L278.0,103.5 L270.6,107.8 L263.1,103.5 L263.1,94.9Z" fill="#433a37"/><path d="M284.6,90.6 L292.0,94.9 L292.0,103.5 L284.6,107.8 L277.1,103.5 L277.1,94.9Z" fill="#433a37"/><path d="M298.6,90.6 L306.1,94.9 L306.1,103.5 L298.6,107.8 L291.2,103.5 L291.2,94.9Z" fill="#211e23"/><path d="M67.1,102.8 L74.6,107.0 L74.6,115.6 L67.1,119.9 L59.7,115.6 L59.7,107.0Z" fill="#211e23"/><path d="M81.2,102.8 L88.6,107.0 L88.6,115.6 L81.2,119.9 L73.7,115.6 L73.7,107.0Z" fill="#2d2a2e"/><path d="M95.2,102.8 L102.6,107.0 L102.6,115.6 L95.2,119.9 L87.7,115.6 L87.7,107.0Z" fill="#2d2a2e"/><path d="M109.2,102.8 L116.7,107.0 L116.7,115.6 L109.2,119.9 L101.8,115.6 L101.8,107.0Z" fill="#2d2a2e"/><path d="M123.3,102.8 L130.7,107.0 L130.7,115.6 L123.3,119.9 L115.8,115.6 L115.8,107.0Z" fill="#2d2a2e"/><path d="M137.3,102.8 L144.7,107.0 L144.7,115.6 L137.3,119.9 L129.8,115.6 L129.8,107.0Z" fill="#2d2a2e"/><path d="M151.3,102.8 L158.8,107.0 L158.8,115.6 L151.3,119.9 L143.9,115.6 L143.9,107.0Z" fill="#2d2a2e"/><path d="M165.3,102.8 L172.8,107.0 L172.8,115.6 L165.3,119.9 L157.9,115.6 L157.9,107.0Z" fill="#2d2a2e"/><path d="M179.4,102.8 L186.8,107.0 L186.8,115.6 L179.4,119.9 L171.9,115.6 L171.9,107.0Z" fill="#433a37"/><path d="M193.4,102.8 L200.8,107.0 L200.8,115.6 L193.4,119.9 L186.0,115.6 L186.0,107.0Z" fill="#433a37"/><path d="M207.4,102.8 L214.9,107.0 L214.9,115.6 L207.4,119.9 L200.0,115.6 L200.0,107.0Z" fill="#433a37"/><path d="M221.5,102.8 L228.9,107.0 L228.9,115.6 L221.5,119.9 L214.0,115.6 L214.0,107.0Z" fill="#433a37"/><path d="M235.5,102.8 L242.9,107.0 L242.9,115.6 L235.5,119.9 L228.0,115.6 L228.0,107.0Z" fill="#433a37"/><path d="M249.5,102.8 L257.0,107.0 L257.0,115.6 L249.5,119.9 L242.1,115.6 L242.1,107.0Z" fill="#433a37"/><path d="M263.5,102.8 L271.0,107.0 L271.0,115.6 L263.5,119.9 L256.1,115.6 L256.1,107.0Z" fill="#433a37"/><path d="M277.6,102.8 L285.0,107.0 L285.0,115.6 L277.6,119.9 L270.1,115.6 L270.1,107.0Z" fill="#433a37"/><path d="M291.6,102.8 L299.1,107.0 L299.1,115.6 L291.6,119.9 L284.2,115.6 L284.2,107.0Z" fill="#433a37"/><path d="M305.6,102.8 L313.1,107.0 L313.1,115.6 L305.6,119.9 L298.2,115.6 L298.2,107.0Z" fill="#2d2a2e"/><path d="M60.1,114.9 L67.6,119.2 L67.6,127.8 L60.1,132.1 L52.7,127.8 L52.7,119.2Z" fill="#2d2a2e"/><path d="M74.1,114.9 L81.6,119.2 L81.6,127.8 L74.1,132.1 L66.7,127.8 L66.7,119.2Z" fill="#2d2a2e"/><path d="M88.2,114.9 L95.6,119.2 L95.6,127.8 L88.2,132.1 L80.7,127.8 L80.7,119.2Z" fill="#2d2a2e"/><path d="M102.2,114.9 L109.7,119.2 L109.7,127.8 L102.2,132.1 L94.8,127.8 L94.8,119.2Z" fill="#2d2a2e"/><path d="M116.2,114.9 L123.7,119.2 L123.7,127.8 L116.2,132.1 L108.8,127.8 L108.8,119.2Z" fill="#2d2a2e"/><path d="M130.3,114.9 L137.7,119.2 L137.7,127.8 L130.3,132.1 L122.8,127.8 L122.8,119.2Z" fill="#2d2a2e"/><path d="M144.3,114.9 L151.7,119.2 L151.7,127.8 L144.3,132.1 L136.8,127.8 L136.8,119.2Z" fill="#2d2a2e"/><path d="M158.3,114.9 L165.8,119.2 L165.8,127.8 L158.3,132.1 L150.9,127.8 L150.9,119.2Z" fill="#2d2a2e"/><path d="M172.4,114.9 L179.8,119.2 L179.8,127.8 L172.4,132.1 L164.9,127.8 L164.9,119.2Z" fill="#2d2a2e"/><path d="M186.4,114.9 L193.8,119.2 L193.8,127.8 L186.4,132.1 L178.9,127.8 L178.9,119.2Z" fill="#433a37"/><path d="M200.4,114.9 L207.9,119.2 L207.9,127.8 L200.4,132.1 L193.0,127.8 L193.0,119.2Z" fill="#433a37"/><path d="M214.4,114.9 L221.9,119.2 L221.9,127.8 L214.4,132.1 L207.0,127.8 L207.0,119.2Z" fill="#433a37"/><path d="M228.5,114.9 L235.9,119.2 L235.9,127.8 L228.5,132.1 L221.0,127.8 L221.0,119.2Z" fill="#433a37"/><path d="M242.5,114.9 L250.0,119.2 L250.0,127.8 L242.5,132.1 L235.1,127.8 L235.1,119.2Z" fill="#433a37"/><path d="M256.5,114.9 L264.0,119.2 L264.0,127.8 L256.5,132.1 L249.1,127.8 L249.1,119.2Z" fill="#433a37"/><path d="M270.6,114.9 L278.0,119.2 L278.0,127.8 L270.6,132.1 L263.1,127.8 L263.1,119.2Z" fill="#433a37"/><path d="M284.6,114.9 L292.0,119.2 L292.0,127.8 L284.6,132.1 L277.1,127.8 L277.1,119.2Z" fill="#433a37"/><path d="M298.6,114.9 L306.1,119.2 L306.1,127.8 L298.6,132.1 L291.2,127.8 L291.2,119.2Z" fill="#2d2a2e"/><path d="M312.7,114.9 L320.1,119.2 L320.1,127.8 L312.7,132.1 L305.2,127.8 L305.2,119.2Z" fill="#2d2a2e"/><path d="M53.1,127.1 L60.6,131.3 L60.6,140.0 L53.1,144.2 L45.7,140.0 L45.7,131.3Z" fill="#2d2a2e"/><path d="M67.1,127.1 L74.6,131.3 L74.6,140.0 L67.1,144.2 L59.7,140.0 L59.7,131.3Z" fill="#2d2a2e"/><path d="M81.2,127.1 L88.6,131.3 L88.6,140.0 L81.2,144.2 L73.7,140.0 L73.7,131.3Z" fill="#2d2a2e"/><path d="M95.2,127.1 L102.6,131.3 L102.6,140.0 L95.2,144.2 L87.7,140.0 L87.7,131.3Z" fill="#2d2a2e"/><path d="M109.2,127.1 L116.7,131.3 L116.7,140.0 L109.2,144.2 L101.8,140.0 L101.8,131.3Z" fill="#2d2a2e"/><path d="M123.3,127.1 L130.7,131.3 L130.7,140.0 L123.3,144.2 L115.8,140.0 L115.8,131.3Z" fill="#2d2a2e"/><path d="M137.3,127.1 L144.7,131.3 L144.7,140.0 L137.3,144.2 L129.8,140.0 L129.8,131.3Z" fill="#2d2a2e"/><path d="M151.3,127.1 L158.8,131.3 L158.8,140.0 L151.3,144.2 L143.9,140.0 L143.9,131.3Z" fill="#211e23"/><path d="M165.3,127.1 L172.8,131.3 L172.8,140.0 L165.3,144.2 L157.9,140.0 L157.9,131.3Z" fill="#2d2a2e"/><path d="M179.4,127.1 L186.8,131.3 L186.8,140.0 L179.4,144.2 L171.9,140.0 L171.9,131.3Z" fill="#433a37"/><path d="M193.4,127.1 L200.8,131.3 L200.8,140.0 L193.4,144.2 L186.0,140.0 L186.0,131.3Z" fill="#433a37"/><path d="M207.4,127.1 L214.9,131.3 L214.9,140.0 L207.4,144.2 L200.0,140.0 L200.0,131.3Z" fill="#433a37"/><path d="M221.5,127.1 L228.9,131.3 L228.9,140.0 L221.5,144.2 L214.0,140.0 L214.0,131.3Z" fill="#433a37"/><path d="M235.5,127.1 L242.9,131.3 L242.9,140.0 L235.5,144.2 L228.0,140.0 L228.0,131.3Z" fill="#433a37"/><path d="M249.5,127.1 L257.0,131.3 L257.0,140.0 L249.5,144.2 L242.1,140.0 L242.1,131.3Z" fill="#433a37"/><path d="M263.5,127.1 L271.0,131.3 L271.0,140.0 L263.5,144.2 L256.1,140.0 L256.1,131.3Z" fill="#433a37"/><path d="M277.6,127.1 L285.0,131.3 L285.0,140.0 L277.6,144.2 L270.1,140.0 L270.1,131.3Z" fill="#433a37"/><path d="M291.6,127.1 L299.1,131.3 L299.1,140.0 L291.6,144.2 L284.2,140.0 L284.2,131.3Z" fill="#433a37"/><path d="M305.6,127.1 L313.1,131.3 L313.1,140.0 L305.6,144.2 L298.2,140.0 L298.2,131.3Z" fill="#2d2a2e"/><path d="M319.7,127.1 L327.1,131.3 L327.1,140.0 L319.7,144.2 L312.2,140.0 L312.2,131.3Z" fill="#2d2a2e"/><path d="M60.1,139.2 L67.6,143.5 L67.6,152.1 L60.1,156.4 L52.7,152.1 L52.7,143.5Z" fill="#2d2a2e"/><path d="M74.1,139.2 L81.6,143.5 L81.6,152.1 L74.1,156.4 L66.7,152.1 L66.7,143.5Z" fill="#211e23"/><path d="M88.2,139.2 L95.6,143.5 L95.6,152.1 L88.2,156.4 L80.7,152.1 L80.7,143.5Z" fill="#2d2a2e"/><path d="M102.2,139.2 L109.7,143.5 L109.7,152.1 L102.2,156.4 L94.8,152.1 L94.8,143.5Z" fill="#2d2a2e"/><path d="M116.2,139.2 L123.7,143.5 L123.7,152.1 L116.2,156.4 L108.8,152.1 L108.8,143.5Z" fill="#2d2a2e"/><path d="M130.3,139.2 L137.7,143.5 L137.7,152.1 L130.3,156.4 L122.8,152.1 L122.8,143.5Z" fill="#2d2a2e"/><path d="M144.3,139.2 L151.7,143.5 L151.7,152.1 L144.3,156.4 L136.8,152.1 L136.8,143.5Z" fill="#2d2a2e"/><path d="M158.3,139.2 L165.8,143.5 L165.8,152.1 L158.3,156.4 L150.9,152.1 L150.9,143.5Z" fill="#211e23"/><path d="M172.4,139.2 L179.8,143.5 L179.8,152.1 L172.4,156.4 L164.9,152.1 L164.9,143.5Z" fill="#2d2a2e"/><path d="M186.4,139.2 L193.8,143.5 L193.8,152.1 L186.4,156.4 L178.9,152.1 L178.9,143.5Z" fill="#2d2a2e"/><path d="M200.4,139.2 L207.9,143.5 L207.9,152.1 L200.4,156.4 L193.0,152.1 L193.0,143.5Z" fill="#2d2a2e"/><path d="M214.4,139.2 L221.9,143.5 L221.9,152.1 L214.4,156.4 L207.0,152.1 L207.0,143.5Z" fill="#2d2a2e"/><path d="M228.5,139.2 L235.9,143.5 L235.9,152.1 L228.5,156.4 L221.0,152.1 L221.0,143.5Z" fill="#2d2a2e"/><path d="M242.5,139.2 L250.0,143.5 L250.0,152.1 L242.5,156.4 L235.1,152.1 L235.1,143.5Z" fill="#2d2a2e"/><path d="M256.5,139.2 L264.0,143.5 L264.0,152.1 L256.5,156.4 L249.1,152.1 L249.1,143.5Z" fill="#2d2a2e"/><path d="M270.6,139.2 L278.0,143.5 L278.0,152.1 L270.6,156.4 L263.1,152.1 L263.1,143.5Z" fill="#2d2a2e"/><path d="M284.6,139.2 L292.0,143.5 L292.0,152.1 L284.6,156.4 L277.1,152.1 L277.1,143.5Z" fill="#2d2a2e"/><path d="M298.6,139.2 L306.1,143.5 L306.1,152.1 L298.6,156.4 L291.2,152.1 L291.2,143.5Z" fill="#2d2a2e"/><path d="M312.7,139.2 L320.1,143.5 L320.1,152.1 L312.7,156.4 L305.2,152.1 L305.2,143.5Z" fill="#2d2a2e"/><path d="M67.1,151.3 L74.6,155.6 L74.6,164.2 L67.1,168.5 L59.7,164.2 L59.7,155.6Z" fill="#2d2a2e"/><path d="M81.2,151.3 L88.6,155.6 L88.6,164.2 L81.2,168.5 L73.7,164.2 L73.7,155.6Z" fill="#2d2a2e"/><path d="M95.2,151.3 L102.6,155.6 L102.6,164.2 L95.2,168.5 L87.7,164.2 L87.7,155.6Z" fill="#2d2a2e"/><path d="M109.2,151.3 L116.7,155.6 L116.7,164.2 L109.2,168.5 L101.8,164.2 L101.8,155.6Z" fill="#2d2a2e"/><path d="M123.3,151.3 L130.7,155.6 L130.7,164.2 L123.3,168.5 L115.8,164.2 L115.8,155.6Z" fill="#211e23"/><path d="M137.3,151.3 L144.7,155.6 L144.7,164.2 L137.3,168.5 L129.8,164.2 L129.8,155.6Z" fill="#2d2a2e"/><path d="M151.3,151.3 L158.8,155.6 L158.8,164.2 L151.3,168.5 L143.9,164.2 L143.9,155.6Z" fill="#2d2a2e"/><path d="M165.3,151.3 L172.8,155.6 L172.8,164.2 L165.3,168.5 L157.9,164.2 L157.9,155.6Z" fill="#2d2a2e"/><path d="M179.4,151.3 L186.8,155.6 L186.8,164.2 L179.4,168.5 L171.9,164.2 L171.9,155.6Z" fill="#2d2a2e"/><path d="M193.4,151.3 L200.8,155.6 L200.8,164.2 L193.4,168.5 L186.0,164.2 L186.0,155.6Z" fill="#2d2a2e"/><path d="M207.4,151.3 L214.9,155.6 L214.9,164.2 L207.4,168.5 L200.0,164.2 L200.0,155.6Z" fill="#2d2a2e"/><path d="M221.5,151.3 L228.9,155.6 L228.9,164.2 L221.5,168.5 L214.0,164.2 L214.0,155.6Z" fill="#2d2a2e"/><path d="M235.5,151.3 L242.9,155.6 L242.9,164.2 L235.5,168.5 L228.0,164.2 L228.0,155.6Z" fill="#2d2a2e"/><path d="M249.5,151.3 L257.0,155.6 L257.0,164.2 L249.5,168.5 L242.1,164.2 L242.1,155.6Z" fill="#2d2a2e"/><path d="M263.5,151.3 L271.0,155.6 L271.0,164.2 L263.5,168.5 L256.1,164.2 L256.1,155.6Z" fill="#2d2a2e"/><path d="M277.6,151.3 L285.0,155.6 L285.0,164.2 L277.6,168.5 L270.1,164.2 L270.1,155.6Z" fill="#2d2a2e"/><path d="M291.6,151.3 L299.1,155.6 L299.1,164.2 L291.6,168.5 L284.2,164.2 L284.2,155.6Z" fill="#2d2a2e"/><path d="M305.6,151.3 L313.1,155.6 L313.1,164.2 L305.6,168.5 L298.2,164.2 L298.2,155.6Z" fill="#2d2a2e"/><path d="M319.7,151.3 L327.1,155.6 L327.1,164.2 L319.7,168.5 L312.2,164.2 L312.2,155.6Z" fill="#2d2a2e"/><path d="M74.1,163.5 L81.6,167.8 L81.6,176.4 L74.1,180.7 L66.7,176.4 L66.7,167.8Z" fill="#2d2a2e"/><path d="M88.2,163.5 L95.6,167.8 L95.6,176.4 L88.2,180.7 L80.7,176.4 L80.7,167.8Z" fill="#2d2a2e"/><path d="M102.2,163.5 L109.7,167.8 L109.7,176.4 L102.2,180.7 L94.8,176.4 L94.8,167.8Z" fill="#2d2a2e"/><path d="M116.2,163.5 L123.7,167.8 L123.7,176.4 L116.2,180.7 L108.8,176.4 L108.8,167.8Z" fill="#2d2a2e"/><path d="M130.3,163.5 L137.7,167.8 L137.7,176.4 L130.3,180.7 L122.8,176.4 L122.8,167.8Z" fill="#2d2a2e"/><path d="M144.3,163.5 L151.7,167.8 L151.7,176.4 L144.3,180.7 L136.8,176.4 L136.8,167.8Z" fill="#2d2a2e"/><path d="M158.3,163.5 L165.8,167.8 L165.8,176.4 L158.3,180.7 L150.9,176.4 L150.9,167.8Z" fill="#2d2a2e"/><path d="M172.4,163.5 L179.8,167.8 L179.8,176.4 L172.4,180.7 L164.9,176.4 L164.9,167.8Z" fill="#2d2a2e"/><path d="M186.4,163.5 L193.8,167.8 L193.8,176.4 L186.4,180.7 L178.9,176.4 L178.9,167.8Z" fill="#2d2a2e"/><path d="M200.4,163.5 L207.9,167.8 L207.9,176.4 L200.4,180.7 L193.0,176.4 L193.0,167.8Z" fill="#2d2a2e"/><path d="M214.4,163.5 L221.9,167.8 L221.9,176.4 L214.4,180.7 L207.0,176.4 L207.0,167.8Z" fill="#333744"/><path d="M228.5,163.5 L235.9,167.8 L235.9,176.4 L228.5,180.7 L221.0,176.4 L221.0,167.8Z" fill="#333744"/><path d="M242.5,163.5 L250.0,167.8 L250.0,176.4 L242.5,180.7 L235.1,176.4 L235.1,167.8Z" fill="#333744"/><path d="M256.5,163.5 L264.0,167.8 L264.0,176.4 L256.5,180.7 L249.1,176.4 L249.1,167.8Z" fill="#333744"/><path d="M270.6,163.5 L278.0,167.8 L278.0,176.4 L270.6,180.7 L263.1,176.4 L263.1,167.8Z" fill="#333744"/><path d="M284.6,163.5 L292.0,167.8 L292.0,176.4 L284.6,180.7 L277.1,176.4 L277.1,167.8Z" fill="#2d2a2e"/><path d="M298.6,163.5 L306.1,167.8 L306.1,176.4 L298.6,180.7 L291.2,176.4 L291.2,167.8Z" fill="#2d2a2e"/><path d="M312.7,163.5 L320.1,167.8 L320.1,176.4 L312.7,180.7 L305.2,176.4 L305.2,167.8Z" fill="#2d2a2e"/><path d="M81.2,175.7 L88.6,179.9 L88.6,188.6 L81.2,192.8 L73.7,188.6 L73.7,179.9Z" fill="#2d2a2e"/><path d="M95.2,175.7 L102.6,179.9 L102.6,188.6 L95.2,192.8 L87.7,188.6 L87.7,179.9Z" fill="#2d2a2e"/><path d="M109.2,175.7 L116.7,179.9 L116.7,188.6 L109.2,192.8 L101.8,188.6 L101.8,179.9Z" fill="#2d2a2e"/><path d="M123.3,175.7 L130.7,179.9 L130.7,188.6 L123.3,192.8 L115.8,188.6 L115.8,179.9Z" fill="#2d2a2e"/><path d="M137.3,175.7 L144.7,179.9 L144.7,188.6 L137.3,192.8 L129.8,188.6 L129.8,179.9Z" fill="#2d2a2e"/><path d="M151.3,175.7 L158.8,179.9 L158.8,188.6 L151.3,192.8 L143.9,188.6 L143.9,179.9Z" fill="#2d2a2e"/><path d="M165.3,175.7 L172.8,179.9 L172.8,188.6 L165.3,192.8 L157.9,188.6 L157.9,179.9Z" fill="#2d2a2e"/><path d="M179.4,175.7 L186.8,179.9 L186.8,188.6 L179.4,192.8 L171.9,188.6 L171.9,179.9Z" fill="#2d2a2e"/><path d="M193.4,175.7 L200.8,179.9 L200.8,188.6 L193.4,192.8 L186.0,188.6 L186.0,179.9Z" fill="#2d2a2e"/><path d="M207.4,175.7 L214.9,179.9 L214.9,188.6 L207.4,192.8 L200.0,188.6 L200.0,179.9Z" fill="#333744"/><path d="M221.5,175.7 L228.9,179.9 L228.9,188.6 L221.5,192.8 L214.0,188.6 L214.0,179.9Z" fill="#333744"/><path d="M235.5,175.7 L242.9,179.9 L242.9,188.6 L235.5,192.8 L228.0,188.6 L228.0,179.9Z" fill="#333744"/><path d="M249.5,175.7 L257.0,179.9 L257.0,188.6 L249.5,192.8 L242.1,188.6 L242.1,179.9Z" fill="#333744"/><path d="M263.5,175.7 L271.0,179.9 L271.0,188.6 L263.5,192.8 L256.1,188.6 L256.1,179.9Z" fill="#333744"/><path d="M277.6,175.7 L285.0,179.9 L285.0,188.6 L277.6,192.8 L270.1,188.6 L270.1,179.9Z" fill="#2d2a2e"/><path d="M291.6,175.7 L299.1,179.9 L299.1,188.6 L291.6,192.8 L284.2,188.6 L284.2,179.9Z" fill="#2d2a2e"/><path d="M88.2,187.8 L95.6,192.1 L95.6,200.7 L88.2,205.0 L80.7,200.7 L80.7,192.1Z" fill="#2d2a2e"/><path d="M102.2,187.8 L109.7,192.1 L109.7,200.7 L102.2,205.0 L94.8,200.7 L94.8,192.1Z" fill="#2d2a2e"/><path d="M116.2,187.8 L123.7,192.1 L123.7,200.7 L116.2,205.0 L108.8,200.7 L108.8,192.1Z" fill="#2d2a2e"/><path d="M130.3,187.8 L137.7,192.1 L137.7,200.7 L130.3,205.0 L122.8,200.7 L122.8,192.1Z" fill="#2d2a2e"/><path d="M144.3,187.8 L151.7,192.1 L151.7,200.7 L144.3,205.0 L136.8,200.7 L136.8,192.1Z" fill="#2d2a2e"/><path d="M158.3,187.8 L165.8,192.1 L165.8,200.7 L158.3,205.0 L150.9,200.7 L150.9,192.1Z" fill="#2d2a2e"/><path d="M172.4,187.8 L179.8,192.1 L179.8,200.7 L172.4,205.0 L164.9,200.7 L164.9,192.1Z" fill="#2d2a2e"/><path d="M186.4,187.8 L193.8,192.1 L193.8,200.7 L186.4,205.0 L178.9,200.7 L178.9,192.1Z" fill="#2d2a2e"/><path d="M200.4,187.8 L207.9,192.1 L207.9,200.7 L200.4,205.0 L193.0,200.7 L193.0,192.1Z" fill="#2d2a2e"/><path d="M214.4,187.8 L221.9,192.1 L221.9,200.7 L214.4,205.0 L207.0,200.7 L207.0,192.1Z" fill="#333744"/><path d="M228.5,187.8 L235.9,192.1 L235.9,200.7 L228.5,205.0 L221.0,200.7 L221.0,192.1Z" fill="#333744"/><path d="M242.5,187.8 L250.0,192.1 L250.0,200.7 L242.5,205.0 L235.1,200.7 L235.1,192.1Z" fill="#333744"/><path d="M256.5,187.8 L264.0,192.1 L264.0,200.7 L256.5,205.0 L249.1,200.7 L249.1,192.1Z" fill="#333744"/><path d="M270.6,187.8 L278.0,192.1 L278.0,200.7 L270.6,205.0 L263.1,200.7 L263.1,192.1Z" fill="#333744"/><path d="M284.6,187.8 L292.0,192.1 L292.0,200.7 L284.6,205.0 L277.1,200.7 L277.1,192.1Z" fill="#2d2a2e"/><path d="M95.2,199.9 L102.6,204.2 L102.6,212.8 L95.2,217.1 L87.7,212.8 L87.7,204.2Z" fill="#2d2a2e"/><path d="M109.2,199.9 L116.7,204.2 L116.7,212.8 L109.2,217.1 L101.8,212.8 L101.8,204.2Z" fill="#2d2a2e"/><path d="M123.3,199.9 L130.7,204.2 L130.7,212.8 L123.3,217.1 L115.8,212.8 L115.8,204.2Z" fill="#2d2a2e"/><path d="M137.3,199.9 L144.7,204.2 L144.7,212.8 L137.3,217.1 L129.8,212.8 L129.8,204.2Z" fill="#2d2a2e"/><path d="M151.3,199.9 L158.8,204.2 L158.8,212.8 L151.3,217.1 L143.9,212.8 L143.9,204.2Z" fill="#2d2a2e"/><path d="M165.3,199.9 L172.8,204.2 L172.8,212.8 L165.3,217.1 L157.9,212.8 L157.9,204.2Z" fill="#2d2a2e"/><path d="M179.4,199.9 L186.8,204.2 L186.8,212.8 L179.4,217.1 L171.9,212.8 L171.9,204.2Z" fill="#3c3242"/><path d="M193.4,199.9 L200.8,204.2 L200.8,212.8 L193.4,217.1 L186.0,212.8 L186.0,204.2Z" fill="#3c3242"/><path d="M207.4,199.9 L214.9,204.2 L214.9,212.8 L207.4,217.1 L200.0,212.8 L200.0,204.2Z" fill="#3c3242"/><path d="M221.5,199.9 L228.9,204.2 L228.9,212.8 L221.5,217.1 L214.0,212.8 L214.0,204.2Z" fill="#3c3242"/><path d="M235.5,199.9 L242.9,204.2 L242.9,212.8 L235.5,217.1 L228.0,212.8 L228.0,204.2Z" fill="#333744"/><path d="M249.5,199.9 L257.0,204.2 L257.0,212.8 L249.5,217.1 L242.1,212.8 L242.1,204.2Z" fill="#333744"/><path d="M263.5,199.9 L271.0,204.2 L271.0,212.8 L263.5,217.1 L256.1,212.8 L256.1,204.2Z" fill="#333744"/><path d="M102.2,212.1 L109.7,216.4 L109.7,225.0 L102.2,229.3 L94.8,225.0 L94.8,216.4Z" fill="#2d2a2e"/><path d="M116.2,212.1 L123.7,216.4 L123.7,225.0 L116.2,229.3 L108.8,225.0 L108.8,216.4Z" fill="#2d2a2e"/><path d="M130.3,212.1 L137.7,216.4 L137.7,225.0 L130.3,229.3 L122.8,225.0 L122.8,216.4Z" fill="#2d2a2e"/><path d="M144.3,212.1 L151.7,216.4 L151.7,225.0 L144.3,229.3 L136.8,225.0 L136.8,216.4Z" fill="#2d2a2e"/><path d="M158.3,212.1 L165.8,216.4 L165.8,225.0 L158.3,229.3 L150.9,225.0 L150.9,216.4Z" fill="#2d2a2e"/><path d="M172.4,212.1 L179.8,216.4 L179.8,225.0 L172.4,229.3 L164.9,225.0 L164.9,216.4Z" fill="#2d2a2e"/><path d="M186.4,212.1 L193.8,216.4 L193.8,225.0 L186.4,229.3 L178.9,225.0 L178.9,216.4Z" fill="#3c3242"/><path d="M200.4,212.1 L207.9,216.4 L207.9,225.0 L200.4,229.3 L193.0,225.0 L193.0,216.4Z" fill="#3c3242"/><path d="M214.4,212.1 L221.9,216.4 L221.9,225.0 L214.4,229.3 L207.0,225.0 L207.0,216.4Z" fill="#3c3242"/><path d="M228.5,212.1 L235.9,216.4 L235.9,225.0 L228.5,229.3 L221.0,225.0 L221.0,216.4Z" fill="#333744"/><path d="M242.5,212.1 L250.0,216.4 L250.0,225.0 L242.5,229.3 L235.1,225.0 L235.1,216.4Z" fill="#333744"/><path d="M256.5,212.1 L264.0,216.4 L264.0,225.0 L256.5,229.3 L249.1,225.0 L249.1,216.4Z" fill="#333744"/><path d="M123.3,224.2 L130.7,228.5 L130.7,237.2 L123.3,241.4 L115.8,237.2 L115.8,228.5Z" fill="#2d2a2e"/><path d="M137.3,224.2 L144.7,228.5 L144.7,237.2 L137.3,241.4 L129.8,237.2 L129.8,228.5Z" fill="#211e23"/><path d="M151.3,224.2 L158.8,228.5 L158.8,237.2 L151.3,241.4 L143.9,237.2 L143.9,228.5Z" fill="#2d2a2e"/><path d="M165.3,224.2 L172.8,228.5 L172.8,237.2 L165.3,241.4 L157.9,237.2 L157.9,228.5Z" fill="#2d2a2e"/><path d="M179.4,224.2 L186.8,228.5 L186.8,237.2 L179.4,241.4 L171.9,237.2 L171.9,228.5Z" fill="#3c3242"/><path d="M193.4,224.2 L200.8,228.5 L200.8,237.2 L193.4,241.4 L186.0,237.2 L186.0,228.5Z" fill="#3c3242"/><path d="M207.4,224.2 L214.9,228.5 L214.9,237.2 L207.4,241.4 L200.0,237.2 L200.0,228.5Z" fill="#3c3242"/><path d="M221.5,224.2 L228.9,228.5 L228.9,237.2 L221.5,241.4 L214.0,237.2 L214.0,228.5Z" fill="#3c3242"/><path d="M235.5,224.2 L242.9,228.5 L242.9,237.2 L235.5,241.4 L228.0,237.2 L228.0,228.5Z" fill="#333744"/><path d="M144.3,236.4 L151.7,240.7 L151.7,249.3 L144.3,253.6 L136.8,249.3 L136.8,240.7Z" fill="#2d2a2e"/><path d="M158.3,236.4 L165.8,240.7 L165.8,249.3 L158.3,253.6 L150.9,249.3 L150.9,240.7Z" fill="#2d2a2e"/><path d="M172.4,236.4 L179.8,240.7 L179.8,249.3 L172.4,253.6 L164.9,249.3 L164.9,240.7Z" fill="#2d2a2e"/><path d="M186.4,236.4 L193.8,240.7 L193.8,249.3 L186.4,253.6 L178.9,249.3 L178.9,240.7Z" fill="#3c3242"/><path d="M200.4,236.4 L207.9,240.7 L207.9,249.3 L200.4,253.6 L193.0,249.3 L193.0,240.7Z" fill="#3c3242"/><path d="M214.4,236.4 L221.9,240.7 L221.9,249.3 L214.4,253.6 L207.0,249.3 L207.0,240.7Z" fill="#3c3242"/><path d="M228.5,236.4 L235.9,240.7 L235.9,249.3 L228.5,253.6 L221.0,249.3 L221.0,240.7Z" fill="#333744"/><path d="M165.3,248.5 L172.8,252.8 L172.8,261.4 L165.3,265.8 L157.9,261.4 L157.9,252.8Z" fill="#2d2a2e"/><path d="M179.4,248.5 L186.8,252.8 L186.8,261.4 L179.4,265.8 L171.9,261.4 L171.9,252.8Z" fill="#3c3242"/><path d="M193.4,248.5 L200.8,252.8 L200.8,261.4 L193.4,265.8 L186.0,261.4 L186.0,252.8Z" fill="#3c3242"/><path d="M207.4,248.5 L214.9,252.8 L214.9,261.4 L207.4,265.8 L200.0,261.4 L200.0,252.8Z" fill="#3c3242"/><path d="M186.4,260.7 L193.8,265.0 L193.8,273.6 L186.4,277.9 L178.9,273.6 L178.9,265.0Z" fill="#2d2a2e"/><path d="M200.4,260.7 L207.9,265.0 L207.9,273.6 L200.4,277.9 L193.0,273.6 L193.0,265.0Z" fill="#2d2a2e"/><path d="M193.4,-2.0L193.4,6.0M151.3,22.2L144.3,18.2M193.4,6.0L200.4,10.1M200.4,10.1L200.4,18.2M207.4,22.2L200.4,18.2M151.3,22.2L151.3,30.3M151.3,30.3L144.3,34.4M207.4,22.2L207.4,30.3M249.5,22.2L249.5,30.3M249.5,30.3L242.5,34.4M144.3,34.4L144.3,42.5M144.3,42.5L137.3,46.5M158.3,42.5L151.3,46.5M151.3,46.5L144.3,42.5M172.4,42.5L165.3,46.5M165.3,46.5L158.3,42.5M186.4,42.5L179.4,46.5M179.4,46.5L172.4,42.5M200.4,42.5L193.4,46.5M193.4,46.5L186.4,42.5M207.4,30.3L214.4,34.4M214.4,34.4L214.4,42.5M214.4,42.5L207.4,46.5M207.4,46.5L200.4,42.5M221.5,46.5L214.4,42.5M242.5,34.4L242.5,42.5M242.5,42.5L235.5,46.5M95.2,46.5L95.2,54.6M95.2,54.6L88.2,58.7M123.3,54.6L116.2,58.7M137.3,46.5L137.3,54.6M137.3,54.6L130.3,58.7M151.3,46.5L151.3,54.6M221.5,46.5L221.5,54.6M235.5,46.5L235.5,54.6M235.5,54.6L228.5,58.7M277.6,46.5L277.6,54.6M277.6,54.6L270.6,58.7M291.6,54.6L284.6,58.7M81.2,54.6L88.2,58.7M95.2,54.6L102.2,58.7M102.2,58.7L102.2,66.8M116.2,58.7L116.2,66.8M116.2,66.8L109.2,70.8M109.2,70.8L102.2,66.8M123.3,54.6L130.3,58.7M151.3,54.6L158.3,58.7M158.3,58.7L158.3,66.8M172.4,66.8L165.3,70.8M165.3,70.8L158.3,66.8M179.4,70.8L172.4,66.8M221.5,54.6L228.5,58.7M228.5,58.7L228.5,66.8M235.5,70.8L228.5,66.8M256.5,66.8L249.5,70.8M270.6,58.7L270.6,66.8M270.6,66.8L263.5,70.8M263.5,70.8L256.5,66.8M277.6,54.6L284.6,58.7M284.6,58.7L284.6,66.8M291.6,70.8L284.6,66.8M95.2,78.9L88.2,83.0M109.2,70.8L109.2,78.9M109.2,78.9L102.2,83.0M179.4,70.8L179.4,78.9M179.4,78.9L172.4,83.0M193.4,78.9L186.4,83.0M221.5,78.9L214.4,83.0M235.5,70.8L235.5,78.9M235.5,78.9L228.5,83.0M249.5,70.8L249.5,78.9M249.5,78.9L242.5,83.0M291.6,70.8L291.6,78.9M291.6,78.9L284.6,83.0M88.2,83.0L88.2,91.1M88.2,91.1L81.2,95.1M81.2,95.1L74.1,91.1M95.2,79.0L102.2,83.0M109.2,79.0L116.2,83.0M116.2,83.0L116.2,91.1M116.2,91.1L109.2,95.1M130.3,91.1L123.3,95.1M123.3,95.1L116.2,91.1M137.3,95.1L130.3,91.1M172.4,83.0L172.4,91.1M172.4,91.1L165.3,95.1M179.4,79.0L186.4,83.0M193.4,79.0L200.4,83.0M200.4,83.0L200.4,91.1M214.4,83.0L214.4,91.1M214.4,91.1L207.4,95.1M207.4,95.1L200.4,91.1M221.5,79.0L228.5,83.0M235.5,79.0L242.5,83.0M242.5,83.0L242.5,91.1M256.5,91.1L249.5,95.1M249.5,95.1L242.5,91.1M270.6,91.1L263.5,95.1M263.5,95.1L256.5,91.1M284.6,83.0L284.6,91.1M284.6,91.1L277.6,95.1M277.6,95.1L270.6,91.1M298.6,91.1L291.6,95.1M291.6,95.1L284.6,91.1M109.2,95.1L109.2,103.2M137.3,95.1L137.3,103.2M151.3,103.2L144.3,107.3M165.3,95.1L165.3,103.2M165.3,103.2L158.3,107.3M207.4,95.1L207.4,103.2M207.4,103.2L200.4,107.3M263.5,95.1L263.5,103.2M263.5,103.2L256.5,107.3M291.6,95.1L291.6,103.2M109.2,103.2L116.2,107.3M116.2,107.3L116.2,115.4M116.2,115.4L109.2,119.4M137.3,103.2L144.3,107.3M151.3,103.2L158.3,107.3M158.3,107.3L158.3,115.4M172.4,115.4L165.3,119.4M165.3,119.4L158.3,115.4M186.4,115.4L179.4,119.4M179.4,119.4L172.4,115.4M200.4,107.3L200.4,115.4M200.4,115.4L193.4,119.4M193.4,119.4L186.4,115.4M256.5,107.3L256.5,115.4M263.5,119.4L256.5,115.4M291.6,103.2L298.6,107.3M298.6,107.3L298.6,115.4M305.6,119.4L298.6,115.4M109.2,119.5L109.2,127.5M165.3,119.5L165.3,127.5M165.3,127.5L158.3,131.6M193.4,119.5L193.4,127.5M263.5,119.5L263.5,127.5M263.5,127.5L256.5,131.6M305.6,119.5L305.6,127.5M319.7,127.5L312.7,131.6M102.2,139.7L95.2,143.8M109.2,127.6L116.2,131.6M116.2,131.6L116.2,139.7M116.2,139.7L109.2,143.8M109.2,143.8L102.2,139.7M158.3,131.6L158.3,139.7M158.3,139.7L151.3,143.8M193.4,127.6L200.4,131.6M200.4,131.6L200.4,139.7M207.4,143.8L200.4,139.7M256.5,131.6L256.5,139.7M256.5,139.7L249.5,143.8M298.6,139.7L291.6,143.8M305.6,127.6L312.7,131.6M312.7,131.6L312.7,139.7M312.7,139.7L305.6,143.8M305.6,143.8L298.6,139.7M67.1,151.8L60.1,155.9M81.2,151.8L74.1,155.9M95.2,143.7L95.2,151.8M95.2,151.8L88.2,155.9M109.2,143.7L109.2,151.8M123.3,151.8L116.2,155.9M151.3,143.7L151.3,151.8M151.3,151.8L144.3,155.9M207.4,143.7L207.4,151.8M207.4,151.8L200.4,155.9M221.5,151.8L214.4,155.9M249.5,143.7L249.5,151.8M277.6,151.8L270.6,155.9M291.6,143.7L291.6,151.8M291.6,151.8L284.6,155.9M67.1,151.8L74.1,155.9M81.2,151.8L88.2,155.9M109.2,151.8L116.2,155.9M123.3,151.8L130.3,155.9M130.3,155.9L130.3,164.0M144.3,155.9L144.3,164.0M144.3,164.0L137.3,168.0M137.3,168.0L130.3,164.0M200.4,155.9L200.4,164.0M200.4,164.0L193.4,168.0M207.4,151.8L214.4,155.9M221.5,151.8L228.5,155.9M228.5,155.9L228.5,164.0M242.5,164.0L235.5,168.0M235.5,168.0L228.5,164.0M249.5,151.8L256.5,155.9M256.5,155.9L256.5,164.0M256.5,164.0L249.5,168.0M249.5,168.0L242.5,164.0M270.6,155.9L270.6,164.0M270.6,164.0L263.5,168.0M263.5,168.0L256.5,164.0M277.6,151.8L284.6,155.9M277.6,168.0L270.6,164.0M123.3,176.2L116.2,180.2M137.3,168.0L137.3,176.2M137.3,176.2L130.3,180.2M179.4,176.2L172.4,180.2M193.4,168.0L193.4,176.2M193.4,176.2L186.4,180.2M249.5,168.0L249.5,176.2M249.5,176.2L242.5,180.2M277.6,168.0L277.6,176.2M88.2,188.3L81.2,192.3M102.2,188.3L95.2,192.3M95.2,192.3L88.2,188.3M116.2,180.2L116.2,188.3M116.2,188.3L109.2,192.3M109.2,192.3L102.2,188.3M123.3,176.2L130.3,180.2M137.3,176.2L144.3,180.2M144.3,180.2L144.3,188.3M158.3,188.3L151.3,192.3M151.3,192.3L144.3,188.3M172.4,180.2L172.4,188.3M172.4,188.3L165.3,192.3M165.3,192.3L158.3,188.3M179.4,176.2L186.4,180.2M242.5,180.2L242.5,188.3M242.5,188.3L235.5,192.3M277.6,176.2L284.6,180.2M284.6,180.2L284.6,188.3M291.6,192.3L284.6,188.3M95.2,192.3L95.2,200.4M165.3,192.3L165.3,200.4M165.3,200.4L158.3,204.5M235.5,192.3L235.5,200.4M95.2,200.4L102.2,204.5M102.2,204.5L102.2,212.6M102.2,212.6L95.2,216.6M158.3,204.5L158.3,212.6M165.3,216.6L158.3,212.6M235.5,200.4L242.5,204.5M242.5,204.5L242.5,212.6M242.5,212.6L235.5,216.6M165.3,216.6L165.3,224.8M165.3,224.8L158.3,228.8M235.5,216.6L235.5,224.8M235.5,224.8L228.5,228.8M158.3,228.8L158.3,236.9M165.3,240.9L158.3,236.9M228.5,228.8L228.5,236.9M235.5,240.9L228.5,236.9M165.3,240.9L165.3,249.1M165.3,249.0L172.4,253.1M172.4,253.1L172.4,261.2" stroke="#141215" stroke-width="1.8" fill="none" stroke-linecap="round"/><line x1="21.5" y1="0" x2="21.5" y2="266" stroke="rgba(120,105,85,0.22)" stroke-width="1"/><line x1="43.6" y1="0" x2="43.6" y2="266" stroke="rgba(120,105,85,0.22)" stroke-width="1"/><line x1="65.7" y1="0" x2="65.7" y2="266" stroke="rgba(120,105,85,0.22)" stroke-width="1"/><line x1="87.80000000000001" y1="0" x2="87.80000000000001" y2="266" stroke="rgba(120,105,85,0.22)" stroke-width="1"/><line x1="109.9" y1="0" x2="109.9" y2="266" stroke="rgba(120,105,85,0.22)" stroke-width="1"/><line x1="132.0" y1="0" x2="132.0" y2="266" stroke="rgba(120,105,85,0.22)" stroke-width="1"/><line x1="154.1" y1="0" x2="154.1" y2="266" stroke="rgba(120,105,85,0.22)" stroke-width="1"/><line x1="176.2" y1="0" x2="176.2" y2="266" stroke="rgba(120,105,85,0.22)" stroke-width="1"/><line x1="198.29999999999998" y1="0" x2="198.29999999999998" y2="266" stroke="rgba(120,105,85,0.22)" stroke-width="1"/><line x1="220.39999999999998" y1="0" x2="220.39999999999998" y2="266" stroke="rgba(120,105,85,0.22)" stroke-width="1"/><line x1="242.49999999999997" y1="0" x2="242.49999999999997" y2="266" stroke="rgba(120,105,85,0.22)" stroke-width="1"/><line x1="264.59999999999997" y1="0" x2="264.59999999999997" y2="266" stroke="rgba(120,105,85,0.22)" stroke-width="1"/><line x1="286.7" y1="0" x2="286.7" y2="266" stroke="rgba(120,105,85,0.22)" stroke-width="1"/><line x1="308.8" y1="0" x2="308.8" y2="266" stroke="rgba(120,105,85,0.22)" stroke-width="1"/><line x1="330.90000000000003" y1="0" x2="330.90000000000003" y2="266" stroke="rgba(120,105,85,0.22)" stroke-width="1"/><line x1="353.00000000000006" y1="0" x2="353.00000000000006" y2="266" stroke="rgba(120,105,85,0.22)" stroke-width="1"/><line x1="375.1000000000001" y1="0" x2="375.1000000000001" y2="266" stroke="rgba(120,105,85,0.22)" stroke-width="1"/><line x1="0" y1="21.5" x2="383" y2="21.5" stroke="rgba(120,105,85,0.22)" stroke-width="1"/><line x1="0" y1="43.6" x2="383" y2="43.6" stroke="rgba(120,105,85,0.22)" stroke-width="1"/><line x1="0" y1="65.7" x2="383" y2="65.7" stroke="rgba(120,105,85,0.22)" stroke-width="1"/><line x1="0" y1="87.80000000000001" x2="383" y2="87.80000000000001" stroke="rgba(120,105,85,0.22)" stroke-width="1"/><line x1="0" y1="109.9" x2="383" y2="109.9" stroke="rgba(120,105,85,0.22)" stroke-width="1"/><line x1="0" y1="132.0" x2="383" y2="132.0" stroke="rgba(120,105,85,0.22)" stroke-width="1"/><line x1="0" y1="154.1" x2="383" y2="154.1" stroke="rgba(120,105,85,0.22)" stroke-width="1"/><line x1="0" y1="176.2" x2="383" y2="176.2" stroke="rgba(120,105,85,0.22)" stroke-width="1"/><line x1="0" y1="198.29999999999998" x2="383" y2="198.29999999999998" stroke="rgba(120,105,85,0.22)" stroke-width="1"/><line x1="0" y1="220.39999999999998" x2="383" y2="220.39999999999998" stroke="rgba(120,105,85,0.22)" stroke-width="1"/><line x1="0" y1="242.49999999999997" x2="383" y2="242.49999999999997" stroke="rgba(120,105,85,0.22)" stroke-width="1"/><line x1="0" y1="264.59999999999997" x2="383" y2="264.59999999999997" stroke="rgba(120,105,85,0.22)" stroke-width="1"/><rect x="146.4" y="31.9" width="5.4" height="5.4" fill="#8b7cbb" stroke="#666" stroke-width="0.4"/><rect x="145.0" y="32.3" width="5.4" height="5.4" fill="#d6878f" stroke="#666" stroke-width="0.4"/><rect x="154.4" y="35.3" width="5.4" height="5.4" fill="#d6878f" stroke="#666" stroke-width="0.4"/><rect x="155.7" y="32.5" width="5.4" height="5.4" fill="#f0cea6" stroke="#666" stroke-width="0.4"/><rect x="144.8" y="28.3" width="5.4" height="5.4" fill="#f0cea6" stroke="#666" stroke-width="0.4"/><rect x="147.9" y="27.3" width="5.4" height="5.4" fill="#8b7cbb" stroke="#666" stroke-width="0.4"/><rect x="148.5" y="24.9" width="5.4" height="5.4" fill="#d6878f" stroke="#666" stroke-width="0.4"/><rect x="146.9" y="25.0" width="5.4" height="5.4" fill="#f0cea6" stroke="#666" stroke-width="0.4"/><rect x="155.3" y="31.4" width="5.4" height="5.4" fill="#d6878f" stroke="#666" stroke-width="0.4"/><rect x="146.4" y="26.0" width="5.4" height="5.4" fill="#b1a49a" stroke="#666" stroke-width="0.4"/><rect x="211.8" y="53.8" width="5.4" height="5.4" fill="#ebe4a8" stroke="#666" stroke-width="0.4"/><rect x="222.7" y="56.2" width="5.4" height="5.4" fill="#f0cea6" stroke="#666" stroke-width="0.4"/><rect x="217.8" y="42.8" width="5.4" height="5.4" fill="#b1a49a" stroke="#666" stroke-width="0.4"/><rect x="214.7" y="54.7" width="5.4" height="5.4" fill="#f0cea6" stroke="#666" stroke-width="0.4"/><rect x="220.3" y="43.2" width="5.4" height="5.4" fill="#f0cea6" stroke="#666" stroke-width="0.4"/><rect x="220.0" y="49.6" width="5.4" height="5.4" fill="#ebe4a8" stroke="#666" stroke-width="0.4"/><rect x="222.8" y="42.2" width="5.4" height="5.4" fill="#b1a49a" stroke="#666" stroke-width="0.4"/><rect x="213.2" y="57.4" width="5.4" height="5.4" fill="#ebe4a8" stroke="#666" stroke-width="0.4"/><rect x="227.6" y="49.8" width="5.4" height="5.4" fill="#f0cea6" stroke="#666" stroke-width="0.4"/><rect x="210.4" y="52.0" width="5.4" height="5.4" fill="#b1a49a" stroke="#666" stroke-width="0.4"/><rect x="214.2" y="54.1" width="5.4" height="5.4" fill="#f0cea6" stroke="#666" stroke-width="0.4"/><rect x="223.2" y="43.6" width="5.4" height="5.4" fill="#f0cea6" stroke="#666" stroke-width="0.4"/><rect x="221.5" y="51.1" width="5.4" height="5.4" fill="#b1a49a" stroke="#666" stroke-width="0.4"/><rect x="222.3" y="45.6" width="5.4" height="5.4" fill="#f0cea6" stroke="#666" stroke-width="0.4"/><rect x="221.7" y="48.5" width="5.4" height="5.4" fill="#b1a49a" stroke="#666" stroke-width="0.4"/><rect x="223.5" y="44.9" width="5.4" height="5.4" fill="#ebe4a8" stroke="#666" stroke-width="0.4"/><rect x="225.3" y="57.7" width="5.4" height="5.4" fill="#ebe4a8" stroke="#666" stroke-width="0.4"/><rect x="223.0" y="42.0" width="5.4" height="5.4" fill="#b1a49a" stroke="#666" stroke-width="0.4"/><rect x="223.5" y="26.2" width="5.4" height="5.4" fill="#a9c4a5" stroke="#666" stroke-width="0.4"/><rect x="227.1" y="22.7" width="5.4" height="5.4" fill="#d6878f" stroke="#666" stroke-width="0.4"/><rect x="217.1" y="29.8" width="5.4" height="5.4" fill="#a9c4a5" stroke="#666" stroke-width="0.4"/><rect x="222.7" y="30.1" width="5.4" height="5.4" fill="#d6878f" stroke="#666" stroke-width="0.4"/><rect x="218.0" y="20.8" width="5.4" height="5.4" fill="#a9c4a5" stroke="#666" stroke-width="0.4"/><rect x="220.5" y="26.7" width="5.4" height="5.4" fill="#d6878f" stroke="#666" stroke-width="0.4"/><rect x="217.5" y="26.6" width="5.4" height="5.4" fill="#a9c4a5" stroke="#666" stroke-width="0.4"/><rect x="222.9" y="24.4" width="5.4" height="5.4" fill="#d6878f" stroke="#666" stroke-width="0.4"/><rect x="219.9" y="28.9" width="5.4" height="5.4" fill="#9bc2b7" stroke="#666" stroke-width="0.4"/><rect x="217.6" y="20.7" width="5.4" height="5.4" fill="#d6878f" stroke="#666" stroke-width="0.4"/><rect x="268.4" y="57.6" width="5.4" height="5.4" fill="#8b7cbb" stroke="#666" stroke-width="0.4"/><rect x="274.8" y="59.6" width="5.4" height="5.4" fill="#9bc2b7" stroke="#666" stroke-width="0.4"/><rect x="275.1" y="53.9" width="5.4" height="5.4" fill="#9bc2b7" stroke="#666" stroke-width="0.4"/><rect x="276.7" y="61.8" width="5.4" height="5.4" fill="#f0cea6" stroke="#666" stroke-width="0.4"/><rect x="275.9" y="63.5" width="5.4" height="5.4" fill="#8b7cbb" stroke="#666" stroke-width="0.4"/><rect x="270.0" y="54.4" width="5.4" height="5.4" fill="#9bc2b7" stroke="#666" stroke-width="0.4"/><rect x="277.5" y="60.3" width="5.4" height="5.4" fill="#8b7cbb" stroke="#666" stroke-width="0.4"/><rect x="274.1" y="63.0" width="5.4" height="5.4" fill="#8b7cbb" stroke="#666" stroke-width="0.4"/><rect x="197.3" y="140.0" width="5.4" height="5.4" fill="#ffffff" stroke="#666" stroke-width="0.4"/><rect x="208.1" y="139.3" width="5.4" height="5.4" fill="#ffffff" stroke="#666" stroke-width="0.4"/><rect x="217.1" y="140.6" width="5.4" height="5.4" fill="#ffffff" stroke="#666" stroke-width="0.4"/><rect x="207.1" y="147.3" width="5.4" height="5.4" fill="#f0cea6" stroke="#666" stroke-width="0.4"/><rect x="209.8" y="129.3" width="5.4" height="5.4" fill="#ffffff" stroke="#666" stroke-width="0.4"/><rect x="206.3" y="134.5" width="5.4" height="5.4" fill="#f0cea6" stroke="#666" stroke-width="0.4"/><rect x="207.6" y="143.9" width="5.4" height="5.4" fill="#f0cea6" stroke="#666" stroke-width="0.4"/><rect x="214.5" y="136.3" width="5.4" height="5.4" fill="#ffffff" stroke="#666" stroke-width="0.4"/><rect x="221.9" y="131.7" width="5.4" height="5.4" fill="#f0cea6" stroke="#666" stroke-width="0.4"/><rect x="197.6" y="125.5" width="5.4" height="5.4" fill="#ffffff" stroke="#666" stroke-width="0.4"/><rect x="220.4" y="126.5" width="5.4" height="5.4" fill="#ffffff" stroke="#666" stroke-width="0.4"/><rect x="221.7" y="134.8" width="5.4" height="5.4" fill="#ffffff" stroke="#666" stroke-width="0.4"/><rect x="217.4" y="136.6" width="5.4" height="5.4" fill="#f0cea6" stroke="#666" stroke-width="0.4"/><rect x="213.9" y="133.2" width="5.4" height="5.4" fill="#9bc2b7" stroke="#666" stroke-width="0.4"/><rect x="208.6" y="119.0" width="5.4" height="5.4" fill="#f0cea6" stroke="#666" stroke-width="0.4"/><rect x="213.6" y="119.4" width="5.4" height="5.4" fill="#9bc2b7" stroke="#666" stroke-width="0.4"/><rect x="218.7" y="138.5" width="5.4" height="5.4" fill="#ffffff" stroke="#666" stroke-width="0.4"/><rect x="216.5" y="126.2" width="5.4" height="5.4" fill="#ffffff" stroke="#666" stroke-width="0.4"/><rect x="217.2" y="124.6" width="5.4" height="5.4" fill="#ffffff" stroke="#666" stroke-width="0.4"/><rect x="208.6" y="134.4" width="5.4" height="5.4" fill="#ffffff" stroke="#666" stroke-width="0.4"/><rect x="220.3" y="139.0" width="5.4" height="5.4" fill="#9bc2b7" stroke="#666" stroke-width="0.4"/><rect x="219.1" y="124.4" width="5.4" height="5.4" fill="#ffffff" stroke="#666" stroke-width="0.4"/><rect x="221.2" y="128.2" width="5.4" height="5.4" fill="#ffffff" stroke="#666" stroke-width="0.4"/><rect x="197.0" y="138.3" width="5.4" height="5.4" fill="#ffffff" stroke="#666" stroke-width="0.4"/><rect x="199.1" y="132.0" width="5.4" height="5.4" fill="#9bc2b7" stroke="#666" stroke-width="0.4"/><rect x="259.8" y="109.5" width="5.4" height="5.4" fill="#9bc2b7" stroke="#666" stroke-width="0.4"/><rect x="273.9" y="114.6" width="5.4" height="5.4" fill="#a9c4a5" stroke="#666" stroke-width="0.4"/><rect x="262.7" y="106.6" width="5.4" height="5.4" fill="#ffffff" stroke="#666" stroke-width="0.4"/><rect x="264.6" y="120.5" width="5.4" height="5.4" fill="#a9c4a5" stroke="#666" stroke-width="0.4"/><rect x="270.7" y="122.3" width="5.4" height="5.4" fill="#8b7cbb" stroke="#666" stroke-width="0.4"/><rect x="263.0" y="107.1" width="5.4" height="5.4" fill="#9bc2b7" stroke="#666" stroke-width="0.4"/><rect x="262.7" y="127.6" width="5.4" height="5.4" fill="#9bc2b7" stroke="#666" stroke-width="0.4"/><rect x="259.2" y="105.3" width="5.4" height="5.4" fill="#9bc2b7" stroke="#666" stroke-width="0.4"/><rect x="276.0" y="109.2" width="5.4" height="5.4" fill="#a9c4a5" stroke="#666" stroke-width="0.4"/><rect x="275.2" y="112.5" width="5.4" height="5.4" fill="#9bc2b7" stroke="#666" stroke-width="0.4"/><rect x="254.1" y="116.4" width="5.4" height="5.4" fill="#ffffff" stroke="#666" stroke-width="0.4"/><rect x="264.9" y="100.9" width="5.4" height="5.4" fill="#8b7cbb" stroke="#666" stroke-width="0.4"/><rect x="271.1" y="111.2" width="5.4" height="5.4" fill="#ebe4a8" stroke="#666" stroke-width="0.4"/><rect x="267.6" y="123.3" width="5.4" height="5.4" fill="#ebe4a8" stroke="#666" stroke-width="0.4"/><rect x="260.2" y="123.8" width="5.4" height="5.4" fill="#8b7cbb" stroke="#666" stroke-width="0.4"/><rect x="265.6" y="101.7" width="5.4" height="5.4" fill="#a9c4a5" stroke="#666" stroke-width="0.4"/><rect x="264.5" y="117.3" width="5.4" height="5.4" fill="#ffffff" stroke="#666" stroke-width="0.4"/><rect x="266.5" y="128.3" width="5.4" height="5.4" fill="#8b7cbb" stroke="#666" stroke-width="0.4"/><rect x="260.7" y="112.2" width="5.4" height="5.4" fill="#a9c4a5" stroke="#666" stroke-width="0.4"/><rect x="274.6" y="116.7" width="5.4" height="5.4" fill="#ebe4a8" stroke="#666" stroke-width="0.4"/><rect x="273.9" y="129.1" width="5.4" height="5.4" fill="#8b7cbb" stroke="#666" stroke-width="0.4"/><rect x="269.2" y="122.0" width="5.4" height="5.4" fill="#ffffff" stroke="#666" stroke-width="0.4"/><rect x="274.1" y="115.5" width="5.4" height="5.4" fill="#ffffff" stroke="#666" stroke-width="0.4"/><rect x="259.8" y="106.6" width="5.4" height="5.4" fill="#8b7cbb" stroke="#666" stroke-width="0.4"/><rect x="281.5" y="112.6" width="5.4" height="5.4" fill="#9bc2b7" stroke="#666" stroke-width="0.4"/><rect x="272.3" y="108.8" width="5.4" height="5.4" fill="#ffffff" stroke="#666" stroke-width="0.4"/><rect x="269.1" y="104.3" width="5.4" height="5.4" fill="#ffffff" stroke="#666" stroke-width="0.4"/><rect x="272.3" y="123.6" width="5.4" height="5.4" fill="#8b7cbb" stroke="#666" stroke-width="0.4"/><rect x="253.6" y="112.2" width="5.4" height="5.4" fill="#a9c4a5" stroke="#666" stroke-width="0.4"/><rect x="258.2" y="106.9" width="5.4" height="5.4" fill="#ebe4a8" stroke="#666" stroke-width="0.4"/><rect x="304.5" y="144.0" width="5.4" height="5.4" fill="#9bc2b7" stroke="#666" stroke-width="0.4"/><rect x="308.9" y="159.4" width="5.4" height="5.4" fill="#a9c4a5" stroke="#666" stroke-width="0.4"/><rect x="304.2" y="159.2" width="5.4" height="5.4" fill="#ebe4a8" stroke="#666" stroke-width="0.4"/><rect x="291.2" y="159.7" width="5.4" height="5.4" fill="#cb8bc8" stroke="#666" stroke-width="0.4"/><rect x="288.0" y="155.2" width="5.4" height="5.4" fill="#9bc2b7" stroke="#666" stroke-width="0.4"/><rect x="308.0" y="159.9" width="5.4" height="5.4" fill="#ebe4a8" stroke="#666" stroke-width="0.4"/><rect x="301.0" y="164.9" width="5.4" height="5.4" fill="#ebe4a8" stroke="#666" stroke-width="0.4"/><rect x="307.6" y="151.5" width="5.4" height="5.4" fill="#cb8bc8" stroke="#666" stroke-width="0.4"/><rect x="297.4" y="163.9" width="5.4" height="5.4" fill="#ebe4a8" stroke="#666" stroke-width="0.4"/><rect x="296.0" y="155.9" width="5.4" height="5.4" fill="#a9c4a5" stroke="#666" stroke-width="0.4"/><rect x="293.6" y="159.9" width="5.4" height="5.4" fill="#cb8bc8" stroke="#666" stroke-width="0.4"/><rect x="296.0" y="153.0" width="5.4" height="5.4" fill="#ebe4a8" stroke="#666" stroke-width="0.4"/><rect x="296.0" y="153.9" width="5.4" height="5.4" fill="#cb8bc8" stroke="#666" stroke-width="0.4"/><rect x="293.3" y="141.4" width="5.4" height="5.4" fill="#a9c4a5" stroke="#666" stroke-width="0.4"/><rect x="303.8" y="160.4" width="5.4" height="5.4" fill="#a9c4a5" stroke="#666" stroke-width="0.4"/><rect x="306.8" y="149.8" width="5.4" height="5.4" fill="#ebe4a8" stroke="#666" stroke-width="0.4"/><rect x="298.6" y="144.3" width="5.4" height="5.4" fill="#cb8bc8" stroke="#666" stroke-width="0.4"/><rect x="302.9" y="144.3" width="5.4" height="5.4" fill="#9bc2b7" stroke="#666" stroke-width="0.4"/><rect x="268.8" y="186.2" width="5.4" height="5.4" fill="#ffffff" stroke="#666" stroke-width="0.4"/><rect x="274.2" y="191.8" width="5.4" height="5.4" fill="#ffffff" stroke="#666" stroke-width="0.4"/><rect x="275.1" y="190.1" width="5.4" height="5.4" fill="#ffffff" stroke="#666" stroke-width="0.4"/><rect x="272.9" y="185.7" width="5.4" height="5.4" fill="#ffffff" stroke="#666" stroke-width="0.4"/><rect x="269.9" y="187.1" width="5.4" height="5.4" fill="#ffffff" stroke="#666" stroke-width="0.4"/><rect x="274.5" y="186.8" width="5.4" height="5.4" fill="#ffffff" stroke="#666" stroke-width="0.4"/><rect x="268.4" y="185.1" width="5.4" height="5.4" fill="#ffffff" stroke="#666" stroke-width="0.4"/><rect x="269.5" y="187.6" width="5.4" height="5.4" fill="#ffffff" stroke="#666" stroke-width="0.4"/><rect x="281.0" y="184.9" width="5.4" height="5.4" fill="#ffffff" stroke="#666" stroke-width="0.4"/><rect x="275.4" y="192.7" width="5.4" height="5.4" fill="#ffffff" stroke="#666" stroke-width="0.4"/><rect x="227.7" y="233.6" width="5.4" height="5.4" fill="#8b7cbb" stroke="#666" stroke-width="0.4"/><rect x="230.9" y="218.2" width="5.4" height="5.4" fill="#8b7cbb" stroke="#666" stroke-width="0.4"/><rect x="224.0" y="207.5" width="5.4" height="5.4" fill="#cb8bc8" stroke="#666" stroke-width="0.4"/><rect x="231.5" y="202.2" width="5.4" height="5.4" fill="#ebe4a8" stroke="#666" stroke-width="0.4"/><rect x="239.8" y="227.2" width="5.4" height="5.4" fill="#9bc2b7" stroke="#666" stroke-width="0.4"/><rect x="232.1" y="228.8" width="5.4" height="5.4" fill="#f0cea6" stroke="#666" stroke-width="0.4"/><rect x="224.1" y="219.3" width="5.4" height="5.4" fill="#f0cea6" stroke="#666" stroke-width="0.4"/><rect x="246.0" y="228.1" width="5.4" height="5.4" fill="#9bc2b7" stroke="#666" stroke-width="0.4"/><rect x="233.7" y="204.4" width="5.4" height="5.4" fill="#8b7cbb" stroke="#666" stroke-width="0.4"/><rect x="251.0" y="221.2" width="5.4" height="5.4" fill="#f0cea6" stroke="#666" stroke-width="0.4"/><rect x="226.9" y="210.4" width="5.4" height="5.4" fill="#f0cea6" stroke="#666" stroke-width="0.4"/><rect x="228.3" y="209.2" width="5.4" height="5.4" fill="#f0cea6" stroke="#666" stroke-width="0.4"/><rect x="224.1" y="208.4" width="5.4" height="5.4" fill="#cb8bc8" stroke="#666" stroke-width="0.4"/><rect x="249.1" y="211.9" width="5.4" height="5.4" fill="#9bc2b7" stroke="#666" stroke-width="0.4"/><rect x="245.1" y="213.3" width="5.4" height="5.4" fill="#9bc2b7" stroke="#666" stroke-width="0.4"/><rect x="242.9" y="214.1" width="5.4" height="5.4" fill="#cb8bc8" stroke="#666" stroke-width="0.4"/><rect x="241.8" y="214.9" width="5.4" height="5.4" fill="#cb8bc8" stroke="#666" stroke-width="0.4"/><rect x="240.4" y="223.1" width="5.4" height="5.4" fill="#8b7cbb" stroke="#666" stroke-width="0.4"/><rect x="250.3" y="228.6" width="5.4" height="5.4" fill="#8b7cbb" stroke="#666" stroke-width="0.4"/><rect x="222.2" y="215.1" width="5.4" height="5.4" fill="#cb8bc8" stroke="#666" stroke-width="0.4"/><rect x="224.6" y="227.7" width="5.4" height="5.4" fill="#ebe4a8" stroke="#666" stroke-width="0.4"/><rect x="248.0" y="226.9" width="5.4" height="5.4" fill="#9bc2b7" stroke="#666" stroke-width="0.4"/><rect x="251.8" y="209.8" width="5.4" height="5.4" fill="#ebe4a8" stroke="#666" stroke-width="0.4"/><rect x="232.7" y="205.4" width="5.4" height="5.4" fill="#9bc2b7" stroke="#666" stroke-width="0.4"/><rect x="221.9" y="218.9" width="5.4" height="5.4" fill="#cb8bc8" stroke="#666" stroke-width="0.4"/><rect x="240.8" y="207.3" width="5.4" height="5.4" fill="#ebe4a8" stroke="#666" stroke-width="0.4"/><rect x="249.8" y="222.3" width="5.4" height="5.4" fill="#f0cea6" stroke="#666" stroke-width="0.4"/><rect x="247.1" y="212.1" width="5.4" height="5.4" fill="#cb8bc8" stroke="#666" stroke-width="0.4"/><rect x="240.1" y="226.6" width="5.4" height="5.4" fill="#cb8bc8" stroke="#666" stroke-width="0.4"/><rect x="254.1" y="218.1" width="5.4" height="5.4" fill="#ebe4a8" stroke="#666" stroke-width="0.4"/><rect x="231.0" y="216.0" width="5.4" height="5.4" fill="#8b7cbb" stroke="#666" stroke-width="0.4"/><rect x="241.8" y="221.8" width="5.4" height="5.4" fill="#8b7cbb" stroke="#666" stroke-width="0.4"/><rect x="224.2" y="221.8" width="5.4" height="5.4" fill="#8b7cbb" stroke="#666" stroke-width="0.4"/><rect x="239.5" y="229.8" width="5.4" height="5.4" fill="#ebe4a8" stroke="#666" stroke-width="0.4"/><rect x="241.1" y="212.8" width="5.4" height="5.4" fill="#8b7cbb" stroke="#666" stroke-width="0.4"/><rect x="198.6" y="241.1" width="5.4" height="5.4" fill="#9bc2b7" stroke="#666" stroke-width="0.4"/><rect x="200.0" y="234.5" width="5.4" height="5.4" fill="#9bc2b7" stroke="#666" stroke-width="0.4"/><rect x="201.1" y="239.0" width="5.4" height="5.4" fill="#b1a49a" stroke="#666" stroke-width="0.4"/><rect x="198.5" y="234.5" width="5.4" height="5.4" fill="#b1a49a" stroke="#666" stroke-width="0.4"/><rect x="204.1" y="231.6" width="5.4" height="5.4" fill="#9bc2b7" stroke="#666" stroke-width="0.4"/><rect x="202.1" y="227.5" width="5.4" height="5.4" fill="#b1a49a" stroke="#666" stroke-width="0.4"/><rect x="206.3" y="240.6" width="5.4" height="5.4" fill="#b1a49a" stroke="#666" stroke-width="0.4"/><rect x="203.4" y="227.7" width="5.4" height="5.4" fill="#b1a49a" stroke="#666" stroke-width="0.4"/><rect x="203.6" y="240.5" width="5.4" height="5.4" fill="#b1a49a" stroke="#666" stroke-width="0.4"/><rect x="201.4" y="239.4" width="5.4" height="5.4" fill="#b1a49a" stroke="#666" stroke-width="0.4"/><rect x="211.9" y="235.8" width="5.4" height="5.4" fill="#9bc2b7" stroke="#666" stroke-width="0.4"/><rect x="203.5" y="246.0" width="5.4" height="5.4" fill="#b1a49a" stroke="#666" stroke-width="0.4"/><rect x="270.7" y="179.8" width="5.4" height="5.4" fill="#ebe4a8" stroke="#666" stroke-width="0.4"/><rect x="269.4" y="174.1" width="5.4" height="5.4" fill="#b1a49a" stroke="#666" stroke-width="0.4"/><rect x="270.0" y="170.4" width="5.4" height="5.4" fill="#b1a49a" stroke="#666" stroke-width="0.4"/><rect x="274.7" y="174.8" width="5.4" height="5.4" fill="#ebe4a8" stroke="#666" stroke-width="0.4"/><rect x="273.4" y="171.4" width="5.4" height="5.4" fill="#b1a49a" stroke="#666" stroke-width="0.4"/><rect x="267.5" y="174.8" width="5.4" height="5.4" fill="#b1a49a" stroke="#666" stroke-width="0.4"/><rect x="126.1" y="39.7" width="4.4" height="4.4" fill="#f0cea6"/><rect x="185.0" y="36.7" width="4.4" height="4.4" fill="#9bc2b7"/><rect x="187.5" y="43.6" width="4.4" height="4.4" fill="#a9c4a5"/><rect x="202.9" y="56.4" width="4.4" height="4.4" fill="#a9c4a5"/><rect x="218.4" y="66.2" width="4.4" height="4.4" fill="#a9c4a5"/><rect x="227.0" y="77.2" width="4.4" height="4.4" fill="#8b7cbb"/><rect x="221.3" y="84.1" width="4.4" height="4.4" fill="#d6878f"/><rect x="260.6" y="78.5" width="4.4" height="4.4" fill="#d6878f"/><rect x="288.9" y="80.9" width="4.4" height="4.4" fill="#d6878f"/><rect x="287.6" y="87.1" width="4.4" height="4.4" fill="#b1a49a"/><rect x="254.5" y="36.7" width="4.4" height="4.4" fill="#d6878f"/><rect x="95.6" y="75.5" width="4.4" height="4.4" fill="#9bc2b7"/><rect x="131.2" y="77.2" width="4.4" height="4.4" fill="#ffffff"/><rect x="132.9" y="87.8" width="4.4" height="4.4" fill="#9bc2b7"/><rect x="187.0" y="92.0" width="4.4" height="4.4" fill="#d6878f"/><rect x="209.1" y="98.6" width="4.4" height="4.4" fill="#f0cea6"/><rect x="218.9" y="99.8" width="4.4" height="4.4" fill="#b1a49a"/><rect x="101.0" y="119.0" width="4.4" height="4.4" fill="#ebe4a8"/><rect x="121.2" y="127.8" width="4.4" height="4.4" fill="#b1a49a"/><rect x="167.8" y="128.1" width="4.4" height="4.4" fill="#ffffff"/><rect x="180.8" y="132.5" width="4.4" height="4.4" fill="#ebe4a8"/><rect x="227.5" y="124.6" width="4.4" height="4.4" fill="#ffffff"/><rect x="239.0" y="117.3" width="4.4" height="4.4" fill="#d6878f"/><rect x="220.1" y="115.3" width="4.4" height="4.4" fill="#f0cea6"/><rect x="298.2" y="113.3" width="4.4" height="4.4" fill="#b1a49a"/><rect x="282.0" y="136.2" width="4.4" height="4.4" fill="#ffffff"/><rect x="117.7" y="145.3" width="4.4" height="4.4" fill="#b1a49a"/><rect x="125.1" y="143.5" width="4.4" height="4.4" fill="#a9c4a5"/><rect x="161.9" y="147.2" width="4.4" height="4.4" fill="#d6878f"/><rect x="248.4" y="154.6" width="4.4" height="4.4" fill="#b1a49a"/><rect x="197.3" y="163.2" width="4.4" height="4.4" fill="#a9c4a5"/><rect x="201.7" y="161.2" width="4.4" height="4.4" fill="#8b7cbb"/><rect x="103.0" y="166.4" width="4.4" height="4.4" fill="#d6878f"/><rect x="72.8" y="178.7" width="4.4" height="4.4" fill="#a9c4a5"/><rect x="105.9" y="190.2" width="4.4" height="4.4" fill="#ffffff"/><rect x="115.8" y="192.7" width="4.4" height="4.4" fill="#a9c4a5"/><rect x="126.3" y="198.3" width="4.4" height="4.4" fill="#d6878f"/><rect x="148.9" y="197.1" width="4.4" height="4.4" fill="#a9c4a5"/><rect x="98.1" y="206.2" width="4.4" height="4.4" fill="#a9c4a5"/><rect x="123.1" y="228.3" width="4.4" height="4.4" fill="#f0cea6"/><rect x="212.7" y="177.9" width="4.4" height="4.4" fill="#f0cea6"/><rect x="234.8" y="181.1" width="4.4" height="4.4" fill="#cb8bc8"/><rect x="235.6" y="189.7" width="4.4" height="4.4" fill="#f0cea6"/><rect x="217.7" y="187.7" width="4.4" height="4.4" fill="#ebe4a8"/><rect x="200.5" y="211.6" width="4.4" height="4.4" fill="#b1a49a"/><rect x="154.5" y="28.700000000000003" width="13" height="13" fill="#000" stroke="#6a6a6a" stroke-width="1.2"/><circle cx="161" cy="35.2" r="4.42" fill="#f4f4f4" stroke="#d22" stroke-width="1.17"/><text x="161" y="36.760000000000005" font-size="3.9" text-anchor="middle" font-family="Liberation Sans" fill="#222">20</text><rect x="218.3" y="33.2" width="13" height="13" fill="#000" stroke="#6a6a6a" stroke-width="1.2"/><circle cx="224.8" cy="39.7" r="4.42" fill="#f4f4f4" stroke="#d22" stroke-width="1.17"/><text x="224.8" y="41.260000000000005" font-size="3.9" text-anchor="middle" font-family="Liberation Sans" fill="#222">30</text><rect x="248.2" y="82.8" width="13" height="13" fill="#000" stroke="#6a6a6a" stroke-width="1.2"/><circle cx="254.7" cy="89.3" r="4.42" fill="#f4f4f4" stroke="#d22" stroke-width="1.17"/><text x="254.7" y="90.86" font-size="3.9" text-anchor="middle" font-family="Liberation Sans" fill="#222">60</text><rect x="186.8" y="130.6" width="13" height="13" fill="#000" stroke="#6a6a6a" stroke-width="1.2"/><circle cx="193.3" cy="137.1" r="4.42" fill="#f4f4f4" stroke="#d22" stroke-width="1.17"/><text x="193.3" y="138.66" font-size="3.9" text-anchor="middle" font-family="Liberation Sans" fill="#222">50</text><rect x="251.89999999999998" y="113.5" width="13" height="13" fill="#000" stroke="#6a6a6a" stroke-width="1.2"/><circle cx="258.4" cy="120" r="4.42" fill="#f4f4f4" stroke="#d22" stroke-width="1.17"/><text x="258.4" y="121.56" font-size="3.9" text-anchor="middle" font-family="Liberation Sans" fill="#222">50</text><rect x="272.3" y="144.2" width="13" height="13" fill="#000" stroke="#6a6a6a" stroke-width="1.2"/><circle cx="278.8" cy="150.7" r="4.42" fill="#f4f4f4" stroke="#d22" stroke-width="1.17"/><text x="278.8" y="152.26" font-size="3.9" text-anchor="middle" font-family="Liberation Sans" fill="#222">120</text><rect x="222.6" y="196.9" width="18" height="18" fill="#000" stroke="#6a6a6a" stroke-width="1.2"/><circle cx="231.6" cy="205.9" r="6.12" fill="#f4f4f4" stroke="#d22" stroke-width="1.6199999999999999"/><text x="231.6" y="208.06" font-size="5.3999999999999995" text-anchor="middle" font-family="Liberation Sans" fill="#222">80</text><rect x="255.60000000000002" y="172.4" width="13" height="13" fill="#000" stroke="#6a6a6a" stroke-width="1.2"/><circle cx="262.1" cy="178.9" r="4.42" fill="#f4f4f4" stroke="#d22" stroke-width="1.17"/><text x="262.1" y="180.46" font-size="3.9" text-anchor="middle" font-family="Liberation Sans" fill="#222">60</text><rect x="189.5" y="225.2" width="13" height="13" fill="#000" stroke="#6a6a6a" stroke-width="1.2"/><circle cx="196" cy="231.7" r="4.42" fill="#f4f4f4" stroke="#d22" stroke-width="1.17"/><text x="196" y="233.26" font-size="3.9" text-anchor="middle" font-family="Liberation Sans" fill="#222">100</text></svg><div class="abs" style="left:7.5px;top:239px;width:100px;height:22px"><div class="abs" style="left:0.0px;top:0;width:20px;height:20px;background:#d2d2d2;border:1px solid #888;box-shadow:inset 1px 1px 0 #eee,inset -1px -1px 0 #999"><svg width="18" height="18" style="position:absolute;left:0;top:0"><rect x="4" y="4" width="9" height="9" fill="#111"/><circle cx="14" cy="14" r="3.5" fill="#111" stroke="#ddd" stroke-width="1"/></svg></div><div class="abs" style="left:21.5px;top:0;width:20px;height:20px;background:#d2d2d2;border:1px solid #888;box-shadow:inset 1px 1px 0 #eee,inset -1px -1px 0 #999"><svg width="18" height="18" style="position:absolute;left:0;top:0"><circle cx="9" cy="9" r="6" fill="#111"/><circle cx="7" cy="7" r="1.3" fill="#ddd"/><circle cx="10" cy="6" r="1.2" fill="#ddd"/><circle cx="14" cy="14" r="3.5" fill="#111" stroke="#ddd" stroke-width="1"/></svg></div><div class="abs" style="left:43.0px;top:0;width:20px;height:20px;background:#c4c4c4;border:1px solid #888;box-shadow:inset 1px 1px 0 #eee,inset -1px -1px 0 #999"><svg width="18" height="18" style="position:absolute;left:0;top:0"><circle cx="10" cy="7" r="2.5" fill="#aaa"/><rect x="9.3" y="8" width="1.4" height="7" fill="#aaa"/></svg></div><div class="abs" style="left:64.5px;top:0;width:20px;height:20px;background:#d2d2d2;border:1px solid #888;box-shadow:inset 1px 1px 0 #eee,inset -1px -1px 0 #999"><svg width="18" height="18" style="position:absolute;left:0;top:0"><path d="M5,9 A5,5 0 0 1 14,6 M15,10 A5,5 0 0 1 6,13" stroke="#111" stroke-width="1.8" fill="none"/><path d="M12,3 L15,7 L11,7Z M8,16 L5,12 L9,12Z" fill="#111"/></svg></div></div></div>
<div class="abs" style="left:937px;top:237px;width:543px;height:544px;border:2px solid #d4d4d4;border-radius:6px;background:#3c393d;overflow:hidden"><svg class="abs" style="left:0;top:0" width="539" height="540"><path d="M233.5,8.7 L249.3,17.9 L249.3,36.1 L233.5,45.3 L217.7,36.1 L217.7,17.8Z" fill="#5f5b56"/><path d="M264.7,8.7 L280.5,17.9 L280.5,36.1 L264.7,45.3 L248.8,36.1 L248.8,17.8Z" fill="#5f5b56"/><path d="M295.9,8.7 L311.7,17.9 L311.7,36.1 L295.9,45.3 L280.0,36.1 L280.0,17.8Z" fill="#5f5b56"/><path d="M217.9,35.7 L233.8,44.9 L233.8,63.1 L217.9,72.3 L202.1,63.1 L202.1,44.8Z" fill="#5f5b56"/><path d="M249.1,35.7 L264.9,44.9 L264.9,63.1 L249.1,72.3 L233.2,63.1 L233.2,44.8Z" fill="#5f5b56"/><path d="M280.3,35.7 L296.1,44.9 L296.1,63.1 L280.3,72.3 L264.4,63.1 L264.4,44.8Z" fill="#5f5b56"/><path d="M311.4,35.7 L327.3,44.9 L327.3,63.1 L311.4,72.3 L295.6,63.1 L295.6,44.8Z" fill="#5f5b56"/><path d="M342.6,35.7 L358.5,44.9 L358.5,63.1 L342.6,72.3 L326.8,63.1 L326.8,44.8Z" fill="#5f5b56"/><path d="M202.3,62.7 L218.2,71.8 L218.2,90.2 L202.3,99.3 L186.5,90.2 L186.5,71.8Z" fill="#5f5b56"/><path d="M233.5,62.7 L249.3,71.8 L249.3,90.2 L233.5,99.3 L217.7,90.2 L217.7,71.8Z" fill="#5f5b56"/><path d="M264.7,62.7 L280.5,71.8 L280.5,90.2 L264.7,99.3 L248.8,90.2 L248.8,71.8Z" fill="#5f5b56"/><path d="M295.9,62.7 L311.7,71.8 L311.7,90.2 L295.9,99.3 L280.0,90.2 L280.0,71.8Z" fill="#5f5b56"/><path d="M327.0,62.7 L342.9,71.8 L342.9,90.2 L327.0,99.3 L311.2,90.2 L311.2,71.8Z" fill="#5f5b56"/><path d="M249.1,89.7 L264.9,98.8 L264.9,117.2 L249.1,126.3 L233.2,117.2 L233.2,98.8Z" fill="#5f5b56"/><path d="M280.3,89.7 L296.1,98.8 L296.1,117.2 L280.3,126.3 L264.4,117.2 L264.4,98.8Z" fill="#5f5b56"/><path d="M311.4,89.7 L327.3,98.8 L327.3,117.2 L311.4,126.3 L295.6,117.2 L295.6,98.8Z" fill="#5f5b56"/><path d="M233.5,170.7 L249.3,179.8 L249.3,198.2 L233.5,207.3 L217.7,198.2 L217.7,179.8Z" fill="#4d5561"/><path d="M155.6,197.7 L171.4,206.8 L171.4,225.2 L155.6,234.3 L139.7,225.2 L139.7,206.8Z" fill="#4d5561"/><path d="M186.7,197.7 L202.6,206.8 L202.6,225.2 L186.7,234.3 L170.9,225.2 L170.9,206.8Z" fill="#4d5561"/><path d="M217.9,197.7 L233.8,206.8 L233.8,225.2 L217.9,234.3 L202.1,225.2 L202.1,206.8Z" fill="#4d5561"/><path d="M249.1,197.7 L264.9,206.8 L264.9,225.2 L249.1,234.3 L233.2,225.2 L233.2,206.8Z" fill="#4d5561"/><path d="M77.6,224.7 L93.4,233.8 L93.4,252.2 L77.6,261.3 L61.8,252.2 L61.8,233.8Z" fill="#4d5561"/><path d="M108.8,224.7 L124.6,233.8 L124.6,252.2 L108.8,261.3 L92.9,252.2 L92.9,233.8Z" fill="#4d5561"/><path d="M140.0,224.7 L155.8,233.8 L155.8,252.2 L140.0,261.3 L124.1,252.2 L124.1,233.8Z" fill="#4d5561"/><path d="M171.1,224.7 L187.0,233.8 L187.0,252.2 L171.1,261.3 L155.3,252.2 L155.3,233.8Z" fill="#4d5561"/><path d="M202.3,224.7 L218.2,233.8 L218.2,252.2 L202.3,261.3 L186.5,252.2 L186.5,233.8Z" fill="#4d5561"/><path d="M233.5,224.7 L249.3,233.8 L249.3,252.2 L233.5,261.3 L217.7,252.2 L217.7,233.8Z" fill="#4d5561"/><path d="M264.7,224.7 L280.5,233.8 L280.5,252.2 L264.7,261.3 L248.8,252.2 L248.8,233.8Z" fill="#4d5561"/><path d="M30.8,251.7 L46.7,260.9 L46.7,279.1 L30.8,288.3 L15.0,279.1 L15.0,260.9Z" fill="#4d5561"/><path d="M62.0,251.7 L77.9,260.9 L77.9,279.1 L62.0,288.3 L46.2,279.1 L46.2,260.9Z" fill="#4d5561"/><path d="M93.2,251.7 L109.0,260.9 L109.0,279.1 L93.2,288.3 L77.3,279.1 L77.3,260.9Z" fill="#4d5561"/><path d="M124.4,251.7 L140.2,260.9 L140.2,279.1 L124.4,288.3 L108.5,279.1 L108.5,260.9Z" fill="#4d5561"/><path d="M155.6,251.7 L171.4,260.9 L171.4,279.1 L155.6,288.3 L139.7,279.1 L139.7,260.9Z" fill="#4d5561"/><path d="M186.7,251.7 L202.6,260.9 L202.6,279.1 L186.7,288.3 L170.9,279.1 L170.9,260.9Z" fill="#4d5561"/><path d="M217.9,251.7 L233.8,260.9 L233.8,279.1 L217.9,288.3 L202.1,279.1 L202.1,260.9Z" fill="#4d5561"/><path d="M249.1,251.7 L264.9,260.9 L264.9,279.1 L249.1,288.3 L233.2,279.1 L233.2,260.9Z" fill="#4d5561"/><path d="M15.2,278.7 L31.1,287.9 L31.1,306.1 L15.2,315.3 L-0.6,306.1 L-0.6,287.9Z" fill="#4d5561"/><path d="M46.4,278.7 L62.3,287.9 L62.3,306.1 L46.4,315.3 L30.6,306.1 L30.6,287.9Z" fill="#4d5561"/><path d="M77.6,278.7 L93.4,287.9 L93.4,306.1 L77.6,315.3 L61.8,306.1 L61.8,287.9Z" fill="#4d5561"/><path d="M108.8,278.7 L124.6,287.9 L124.6,306.1 L108.8,315.3 L92.9,306.1 L92.9,287.9Z" fill="#4d5561"/><path d="M140.0,278.7 L155.8,287.9 L155.8,306.1 L140.0,315.3 L124.1,306.1 L124.1,287.9Z" fill="#4d5561"/><path d="M171.1,278.7 L187.0,287.9 L187.0,306.1 L171.1,315.3 L155.3,306.1 L155.3,287.9Z" fill="#4d5561"/><path d="M202.3,278.7 L218.2,287.9 L218.2,306.1 L202.3,315.3 L186.5,306.1 L186.5,287.9Z" fill="#4d5561"/><path d="M233.5,278.7 L249.3,287.9 L249.3,306.1 L233.5,315.3 L217.7,306.1 L217.7,287.9Z" fill="#4d5561"/><path d="M264.7,278.7 L280.5,287.9 L280.5,306.1 L264.7,315.3 L248.8,306.1 L248.8,287.9Z" fill="#4d5561"/><path d="M30.8,305.7 L46.7,314.9 L46.7,333.1 L30.8,342.3 L15.0,333.1 L15.0,314.9Z" fill="#4d5561"/><path d="M62.0,305.7 L77.9,314.9 L77.9,333.1 L62.0,342.3 L46.2,333.1 L46.2,314.9Z" fill="#4d5561"/><path d="M93.2,305.7 L109.0,314.9 L109.0,333.1 L93.2,342.3 L77.3,333.1 L77.3,314.9Z" fill="#4d5561"/><path d="M124.4,305.7 L140.2,314.9 L140.2,333.1 L124.4,342.3 L108.5,333.1 L108.5,314.9Z" fill="#4d5561"/><path d="M155.6,305.7 L171.4,314.9 L171.4,333.1 L155.6,342.3 L139.7,333.1 L139.7,314.9Z" fill="#4d5561"/><path d="M186.7,305.7 L202.6,314.9 L202.6,333.1 L186.7,342.3 L170.9,333.1 L170.9,314.9Z" fill="#4d5561"/><path d="M217.9,305.7 L233.8,314.9 L233.8,333.1 L217.9,342.3 L202.1,333.1 L202.1,314.9Z" fill="#4d5561"/><path d="M249.1,305.7 L264.9,314.9 L264.9,333.1 L249.1,342.3 L233.2,333.1 L233.2,314.9Z" fill="#4d5561"/><path d="M46.4,332.7 L62.3,341.9 L62.3,360.1 L46.4,369.3 L30.6,360.1 L30.6,341.9Z" fill="#4d5561"/><path d="M77.6,332.7 L93.4,341.9 L93.4,360.1 L77.6,369.3 L61.8,360.1 L61.8,341.9Z" fill="#4d5561"/><path d="M108.8,332.7 L124.6,341.9 L124.6,360.1 L108.8,369.3 L92.9,360.1 L92.9,341.9Z" fill="#4d5561"/><path d="M140.0,332.7 L155.8,341.9 L155.8,360.1 L140.0,369.3 L124.1,360.1 L124.1,341.9Z" fill="#4d5561"/><path d="M171.1,332.7 L187.0,341.9 L187.0,360.1 L171.1,369.3 L155.3,360.1 L155.3,341.9Z" fill="#4d5561"/><path d="M202.3,332.7 L218.2,341.9 L218.2,360.1 L202.3,369.3 L186.5,360.1 L186.5,341.9Z" fill="#4d5561"/><path d="M233.5,332.7 L249.3,341.9 L249.3,360.1 L233.5,369.3 L217.7,360.1 L217.7,341.9Z" fill="#4d5561"/><path d="M30.8,359.7 L46.7,368.9 L46.7,387.1 L30.8,396.3 L15.0,387.1 L15.0,368.9Z" fill="#4d5561"/><path d="M62.0,359.7 L77.9,368.9 L77.9,387.1 L62.0,396.3 L46.2,387.1 L46.2,368.9Z" fill="#4d5561"/><path d="M93.2,359.7 L109.0,368.9 L109.0,387.1 L93.2,396.3 L77.3,387.1 L77.3,368.9Z" fill="#4d5561"/><path d="M124.4,359.7 L140.2,368.9 L140.2,387.1 L124.4,396.3 L108.5,387.1 L108.5,368.9Z" fill="#4d5561"/><path d="M155.6,359.7 L171.4,368.9 L171.4,387.1 L155.6,396.3 L139.7,387.1 L139.7,368.9Z" fill="#4d5561"/><path d="M186.7,359.7 L202.6,368.9 L202.6,387.1 L186.7,396.3 L170.9,387.1 L170.9,368.9Z" fill="#4d5561"/><path d="M46.4,386.7 L62.3,395.9 L62.3,414.1 L46.4,423.3 L30.6,414.1 L30.6,395.9Z" fill="#4d5561"/><path d="M77.6,386.7 L93.4,395.9 L93.4,414.1 L77.6,423.3 L61.8,414.1 L61.8,395.9Z" fill="#4d5561"/><path d="M108.8,386.7 L124.6,395.9 L124.6,414.1 L108.8,423.3 L92.9,414.1 L92.9,395.9Z" fill="#4d5561"/><path d="M140.0,386.7 L155.8,395.9 L155.8,414.1 L140.0,423.3 L124.1,414.1 L124.1,395.9Z" fill="#4d5561"/><path d="M171.1,386.7 L187.0,395.9 L187.0,414.1 L171.1,423.3 L155.3,414.1 L155.3,395.9Z" fill="#4d5561"/><path d="M93.2,413.7 L109.0,422.9 L109.0,441.1 L93.2,450.3 L77.3,441.1 L77.3,422.9Z" fill="#4d5561"/><path d="M280.3,305.7 L296.1,314.9 L296.1,333.1 L280.3,342.3 L264.4,333.1 L264.4,314.9Z" fill="#4d4a49"/><path d="M264.7,332.7 L280.5,341.9 L280.5,360.1 L264.7,369.3 L248.8,360.1 L248.8,341.9Z" fill="#464347"/><path d="M217.9,359.7 L233.8,368.9 L233.8,387.1 L217.9,396.3 L202.1,387.1 L202.1,368.9Z" fill="#464347"/><path d="M233.5,386.7 L249.3,395.9 L249.3,414.1 L233.5,423.3 L217.7,414.1 L217.7,395.9Z" fill="#464347"/><path d="M124.4,413.7 L140.2,422.9 L140.2,441.1 L124.4,450.3 L108.5,441.1 L108.5,422.9Z" fill="#464347"/><path d="M373.8,197.7 L389.7,206.8 L389.7,225.2 L373.8,234.3 L358.0,225.2 L358.0,206.8Z" fill="#574a5c"/><path d="M405.0,197.7 L420.8,206.8 L420.8,225.2 L405.0,234.3 L389.1,225.2 L389.1,206.8Z" fill="#574a5c"/><path d="M358.2,224.7 L374.1,233.8 L374.1,252.2 L358.2,261.3 L342.4,252.2 L342.4,233.8Z" fill="#574a5c"/><path d="M389.4,224.7 L405.2,233.8 L405.2,252.2 L389.4,261.3 L373.6,252.2 L373.6,233.8Z" fill="#574a5c"/><path d="M482.9,278.7 L498.8,287.9 L498.8,306.1 L482.9,315.3 L467.1,306.1 L467.1,287.9Z" fill="#5c5852"/><path d="M514.1,278.7 L530.0,287.9 L530.0,306.1 L514.1,315.3 L498.3,306.1 L498.3,287.9Z" fill="#5c5852"/><path d="M436.2,305.7 L452.0,314.9 L452.0,333.1 L436.2,342.3 L420.3,333.1 L420.3,314.9Z" fill="#5c5852"/><path d="M467.3,305.7 L483.2,314.9 L483.2,333.1 L467.3,342.3 L451.5,333.1 L451.5,314.9Z" fill="#5c5852"/><path d="M498.5,305.7 L514.4,314.9 L514.4,333.1 L498.5,342.3 L482.7,333.1 L482.7,314.9Z" fill="#5c5852"/><path d="M529.7,305.7 L545.6,314.9 L545.6,333.1 L529.7,342.3 L513.9,333.1 L513.9,314.9Z" fill="#5c5852"/><path d="M451.8,332.7 L467.6,341.9 L467.6,360.1 L451.8,369.3 L435.9,360.1 L435.9,341.9Z" fill="#5c5852"/><path d="M482.9,332.7 L498.8,341.9 L498.8,360.1 L482.9,369.3 L467.1,360.1 L467.1,341.9Z" fill="#5c5852"/><path d="M420.6,332.7 L436.4,341.9 L436.4,360.1 L420.6,369.3 L404.7,360.1 L404.7,341.9Z" fill="#4d4650"/><path d="M405.0,359.7 L420.8,368.9 L420.8,387.1 L405.0,396.3 L389.1,387.1 L389.1,368.9Z" fill="#49464a"/><path d="M327.0,332.7 L342.9,341.9 L342.9,360.1 L327.0,369.3 L311.2,360.1 L311.2,341.9Z" fill="#535050"/><path d="M358.2,332.7 L374.1,341.9 L374.1,360.1 L358.2,369.3 L342.4,360.1 L342.4,341.9Z" fill="#535050"/><path d="M280.3,413.7 L296.1,422.9 L296.1,441.1 L280.3,450.3 L264.4,441.1 L264.4,422.9Z" fill="#4e5260"/><path d="M342.6,413.7 L358.5,422.9 L358.5,441.1 L342.6,450.3 L326.8,441.1 L326.8,422.9Z" fill="#4e5260"/><path d="M233.5,440.7 L249.3,449.9 L249.3,468.1 L233.5,477.3 L217.7,468.1 L217.7,449.9Z" fill="#4e5260"/><path d="M264.7,440.7 L280.5,449.9 L280.5,468.1 L264.7,477.3 L248.8,468.1 L248.8,449.9Z" fill="#4e5260"/><path d="M295.9,440.7 L311.7,449.9 L311.7,468.1 L295.9,477.3 L280.0,468.1 L280.0,449.9Z" fill="#4e5260"/><path d="M327.0,440.7 L342.9,449.9 L342.9,468.1 L327.0,477.3 L311.2,468.1 L311.2,449.9Z" fill="#4e5260"/><path d="M358.2,440.7 L374.1,449.9 L374.1,468.1 L358.2,477.3 L342.4,468.1 L342.4,449.9Z" fill="#4e5260"/><path d="M249.1,467.7 L264.9,476.9 L264.9,495.1 L249.1,504.3 L233.2,495.1 L233.2,476.9Z" fill="#4e5260"/><path d="M280.3,467.7 L296.1,476.9 L296.1,495.1 L280.3,504.3 L264.4,495.1 L264.4,476.9Z" fill="#4e5260"/><path d="M311.4,467.7 L327.3,476.9 L327.3,495.1 L311.4,504.3 L295.6,495.1 L295.6,476.9Z" fill="#4e5260"/><path d="M342.6,467.7 L358.5,476.9 L358.5,495.1 L342.6,504.3 L326.8,495.1 L326.8,476.9Z" fill="#4e5260"/><path d="M373.8,467.7 L389.7,476.9 L389.7,495.1 L373.8,504.3 L358.0,495.1 L358.0,476.9Z" fill="#4e5260"/><path d="M264.7,494.7 L280.5,503.9 L280.5,522.1 L264.7,531.3 L248.8,522.1 L248.8,503.9Z" fill="#4e5260"/><path d="M295.9,494.7 L311.7,503.9 L311.7,522.1 L295.9,531.3 L280.0,522.1 L280.0,503.9Z" fill="#4e5260"/><path d="M327.0,494.7 L342.9,503.9 L342.9,522.1 L327.0,531.3 L311.2,522.1 L311.2,503.9Z" fill="#4e5260"/><path d="M358.2,494.7 L374.1,503.9 L374.1,522.1 L358.2,531.3 L342.4,522.1 L342.4,503.9Z" fill="#4e5260"/><path d="M373.8,413.7 L389.7,422.9 L389.7,441.1 L373.8,450.3 L358.0,441.1 L358.0,422.9Z" fill="#4f5163" stroke="#333" stroke-width="1.2"/><line x1="27.5" y1="0" x2="27.5" y2="540" stroke="rgba(165,145,145,0.28)" stroke-width="1"/><line x1="54.5" y1="0" x2="54.5" y2="540" stroke="rgba(165,145,145,0.28)" stroke-width="1"/><line x1="81.5" y1="0" x2="81.5" y2="540" stroke="rgba(165,145,145,0.28)" stroke-width="1"/><line x1="108.5" y1="0" x2="108.5" y2="540" stroke="rgba(165,145,145,0.28)" stroke-width="1"/><line x1="135.5" y1="0" x2="135.5" y2="540" stroke="rgba(165,145,145,0.28)" stroke-width="1"/><line x1="162.5" y1="0" x2="162.5" y2="540" stroke="rgba(165,145,145,0.28)" stroke-width="1"/><line x1="189.5" y1="0" x2="189.5" y2="540" stroke="rgba(165,145,145,0.28)" stroke-width="1"/><line x1="216.5" y1="0" x2="216.5" y2="540" stroke="rgba(165,145,145,0.28)" stroke-width="1"/><line x1="243.5" y1="0" x2="243.5" y2="540" stroke="rgba(165,145,145,0.28)" stroke-width="1"/><line x1="270.5" y1="0" x2="270.5" y2="540" stroke="rgba(165,145,145,0.28)" stroke-width="1"/><line x1="297.5" y1="0" x2="297.5" y2="540" stroke="rgba(165,145,145,0.28)" stroke-width="1"/><line x1="324.5" y1="0" x2="324.5" y2="540" stroke="rgba(165,145,145,0.28)" stroke-width="1"/><line x1="351.5" y1="0" x2="351.5" y2="540" stroke="rgba(165,145,145,0.28)" stroke-width="1"/><line x1="378.5" y1="0" x2="378.5" y2="540" stroke="rgba(165,145,145,0.28)" stroke-width="1"/><line x1="405.5" y1="0" x2="405.5" y2="540" stroke="rgba(165,145,145,0.28)" stroke-width="1"/><line x1="432.5" y1="0" x2="432.5" y2="540" stroke="rgba(165,145,145,0.28)" stroke-width="1"/><line x1="459.5" y1="0" x2="459.5" y2="540" stroke="rgba(165,145,145,0.28)" stroke-width="1"/><line x1="486.5" y1="0" x2="486.5" y2="540" stroke="rgba(165,145,145,0.28)" stroke-width="1"/><line x1="513.5" y1="0" x2="513.5" y2="540" stroke="rgba(165,145,145,0.28)" stroke-width="1"/><line x1="0" y1="27.5" x2="539" y2="27.5" stroke="rgba(165,145,145,0.28)" stroke-width="1"/><line x1="0" y1="54.5" x2="539" y2="54.5" stroke="rgba(165,145,145,0.28)" stroke-width="1"/><line x1="0" y1="81.5" x2="539" y2="81.5" stroke="rgba(165,145,145,0.28)" stroke-width="1"/><line x1="0" y1="108.5" x2="539" y2="108.5" stroke="rgba(165,145,145,0.28)" stroke-width="1"/><line x1="0" y1="135.5" x2="539" y2="135.5" stroke="rgba(165,145,145,0.28)" stroke-width="1"/><line x1="0" y1="162.5" x2="539" y2="162.5" stroke="rgba(165,145,145,0.28)" stroke-width="1"/><line x1="0" y1="189.5" x2="539" y2="189.5" stroke="rgba(165,145,145,0.28)" stroke-width="1"/><line x1="0" y1="216.5" x2="539" y2="216.5" stroke="rgba(165,145,145,0.28)" stroke-width="1"/><line x1="0" y1="243.5" x2="539" y2="243.5" stroke="rgba(165,145,145,0.28)" stroke-width="1"/><line x1="0" y1="270.5" x2="539" y2="270.5" stroke="rgba(165,145,145,0.28)" stroke-width="1"/><line x1="0" y1="297.5" x2="539" y2="297.5" stroke="rgba(165,145,145,0.28)" stroke-width="1"/><line x1="0" y1="324.5" x2="539" y2="324.5" stroke="rgba(165,145,145,0.28)" stroke-width="1"/><line x1="0" y1="351.5" x2="539" y2="351.5" stroke="rgba(165,145,145,0.28)" stroke-width="1"/><line x1="0" y1="378.5" x2="539" y2="378.5" stroke="rgba(165,145,145,0.28)" stroke-width="1"/><line x1="0" y1="405.5" x2="539" y2="405.5" stroke="rgba(165,145,145,0.28)" stroke-width="1"/><line x1="0" y1="432.5" x2="539" y2="432.5" stroke="rgba(165,145,145,0.28)" stroke-width="1"/><line x1="0" y1="459.5" x2="539" y2="459.5" stroke="rgba(165,145,145,0.28)" stroke-width="1"/><line x1="0" y1="486.5" x2="539" y2="486.5" stroke="rgba(165,145,145,0.28)" stroke-width="1"/><line x1="0" y1="513.5" x2="539" y2="513.5" stroke="rgba(165,145,145,0.28)" stroke-width="1"/><circle cx="221.7" cy="199.2" r="7.7" fill="#8fb4cf" stroke="#25282f" stroke-width="1.3"/><circle cx="216.4" cy="203.1" r="7.7" fill="#8fb4cf" stroke="#25282f" stroke-width="1.3"/><circle cx="229.6" cy="201.8" r="7.7" fill="#8fb4cf" stroke="#25282f" stroke-width="1.3"/><circle cx="223.0" cy="221.5" r="7.7" fill="#8fb4cf" stroke="#25282f" stroke-width="1.3"/><circle cx="234.8" cy="225.5" r="7.7" fill="#8fb4cf" stroke="#25282f" stroke-width="1.3"/><circle cx="241.4" cy="218.9" r="7.7" fill="#8fb4cf" stroke="#25282f" stroke-width="1.3"/><circle cx="150.6" cy="217.6" r="7.7" fill="#8fb4cf" stroke="#25282f" stroke-width="1.3"/><circle cx="153.3" cy="225.5" r="7.7" fill="#8fb4cf" stroke="#25282f" stroke-width="1.3"/><circle cx="182.2" cy="216.3" r="7.7" fill="#8fb4cf" stroke="#25282f" stroke-width="1.3"/><circle cx="188.8" cy="209.7" r="7.7" fill="#8fb4cf" stroke="#25282f" stroke-width="1.3"/><circle cx="188.8" cy="217.6" r="7.7" fill="#8fb4cf" stroke="#25282f" stroke-width="1.3"/><circle cx="192.7" cy="224.2" r="7.7" fill="#8fb4cf" stroke="#25282f" stroke-width="1.3"/><circle cx="91.4" cy="234.7" r="7.7" fill="#8fb4cf" stroke="#25282f" stroke-width="1.3"/><circle cx="98.0" cy="239.9" r="7.7" fill="#8fb4cf" stroke="#25282f" stroke-width="1.3"/><circle cx="95.4" cy="251.8" r="7.7" fill="#8fb4cf" stroke="#25282f" stroke-width="1.3"/><circle cx="96.7" cy="257.1" r="7.7" fill="#8fb4cf" stroke="#25282f" stroke-width="1.3"/><circle cx="70.4" cy="250.5" r="7.7" fill="#8fb4cf" stroke="#25282f" stroke-width="1.3"/><circle cx="66.4" cy="262.3" r="7.7" fill="#8fb4cf" stroke="#25282f" stroke-width="1.3"/><circle cx="74.3" cy="263.6" r="7.7" fill="#8fb4cf" stroke="#25282f" stroke-width="1.3"/><circle cx="117.7" cy="267.6" r="7.7" fill="#8fb4cf" stroke="#25282f" stroke-width="1.3"/><circle cx="134.8" cy="263.6" r="7.7" fill="#8fb4cf" stroke="#25282f" stroke-width="1.3"/><circle cx="142.7" cy="257.1" r="7.7" fill="#8fb4cf" stroke="#25282f" stroke-width="1.3"/><circle cx="144.1" cy="262.3" r="7.7" fill="#8fb4cf" stroke="#25282f" stroke-width="1.3"/><circle cx="162.5" cy="250.5" r="7.7" fill="#8fb4cf" stroke="#25282f" stroke-width="1.3"/><circle cx="170.4" cy="254.4" r="7.7" fill="#8fb4cf" stroke="#25282f" stroke-width="1.3"/><circle cx="179.6" cy="250.5" r="7.7" fill="#8fb4cf" stroke="#25282f" stroke-width="1.3"/><circle cx="176.9" cy="242.6" r="7.7" fill="#8fb4cf" stroke="#25282f" stroke-width="1.3"/><circle cx="165.1" cy="262.3" r="7.7" fill="#8fb4cf" stroke="#25282f" stroke-width="1.3"/><circle cx="191.4" cy="262.3" r="7.7" fill="#8fb4cf" stroke="#25282f" stroke-width="1.3"/><circle cx="205.9" cy="246.5" r="7.7" fill="#8fb4cf" stroke="#25282f" stroke-width="1.3"/><circle cx="216.4" cy="241.3" r="7.7" fill="#8fb4cf" stroke="#25282f" stroke-width="1.3"/><circle cx="221.7" cy="258.4" r="7.7" fill="#8fb4cf" stroke="#25282f" stroke-width="1.3"/><circle cx="223.0" cy="267.6" r="7.7" fill="#8fb4cf" stroke="#25282f" stroke-width="1.3"/><circle cx="205.9" cy="262.3" r="7.7" fill="#8fb4cf" stroke="#25282f" stroke-width="1.3"/><circle cx="242.7" cy="267.6" r="7.7" fill="#8fb4cf" stroke="#25282f" stroke-width="1.3"/><circle cx="253.3" cy="251.8" r="7.7" fill="#8fb4cf" stroke="#25282f" stroke-width="1.3"/><circle cx="257.2" cy="251.8" r="7.7" fill="#8fb4cf" stroke="#25282f" stroke-width="1.3"/><circle cx="36.2" cy="276.8" r="7.7" fill="#8fb4cf" stroke="#25282f" stroke-width="1.3"/><circle cx="36.2" cy="283.4" r="7.7" fill="#8fb4cf" stroke="#25282f" stroke-width="1.3"/><circle cx="51.9" cy="288.6" r="7.7" fill="#8fb4cf" stroke="#25282f" stroke-width="1.3"/><circle cx="48.0" cy="299.2" r="7.7" fill="#8fb4cf" stroke="#25282f" stroke-width="1.3"/><circle cx="21.7" cy="297.8" r="7.7" fill="#8fb4cf" stroke="#25282f" stroke-width="1.3"/><circle cx="17.7" cy="305.7" r="7.7" fill="#8fb4cf" stroke="#25282f" stroke-width="1.3"/><circle cx="83.5" cy="289.9" r="7.7" fill="#8fb4cf" stroke="#25282f" stroke-width="1.3"/><circle cx="91.4" cy="289.9" r="7.7" fill="#8fb4cf" stroke="#25282f" stroke-width="1.3"/><circle cx="111.2" cy="284.7" r="7.7" fill="#8fb4cf" stroke="#25282f" stroke-width="1.3"/><circle cx="109.8" cy="293.9" r="7.7" fill="#8fb4cf" stroke="#25282f" stroke-width="1.3"/><circle cx="137.5" cy="276.8" r="7.7" fill="#8fb4cf" stroke="#25282f" stroke-width="1.3"/><circle cx="145.4" cy="274.2" r="7.7" fill="#8fb4cf" stroke="#25282f" stroke-width="1.3"/><circle cx="142.7" cy="284.7" r="7.7" fill="#8fb4cf" stroke="#25282f" stroke-width="1.3"/><circle cx="150.6" cy="272.8" r="7.7" fill="#8fb4cf" stroke="#25282f" stroke-width="1.3"/><circle cx="162.5" cy="274.2" r="7.7" fill="#8fb4cf" stroke="#25282f" stroke-width="1.3"/><circle cx="173.0" cy="284.7" r="7.7" fill="#8fb4cf" stroke="#25282f" stroke-width="1.3"/><circle cx="178.3" cy="272.8" r="7.7" fill="#8fb4cf" stroke="#25282f" stroke-width="1.3"/><circle cx="184.8" cy="274.2" r="7.7" fill="#8fb4cf" stroke="#25282f" stroke-width="1.3"/><circle cx="198.0" cy="280.7" r="7.7" fill="#8fb4cf" stroke="#25282f" stroke-width="1.3"/><circle cx="204.6" cy="271.5" r="7.7" fill="#8fb4cf" stroke="#25282f" stroke-width="1.3"/><circle cx="221.7" cy="279.4" r="7.7" fill="#8fb4cf" stroke="#25282f" stroke-width="1.3"/><circle cx="232.2" cy="283.4" r="7.7" fill="#8fb4cf" stroke="#25282f" stroke-width="1.3"/><circle cx="224.3" cy="289.9" r="7.7" fill="#8fb4cf" stroke="#25282f" stroke-width="1.3"/><circle cx="245.4" cy="280.7" r="7.7" fill="#8fb4cf" stroke="#25282f" stroke-width="1.3"/><circle cx="254.6" cy="286.0" r="7.7" fill="#8fb4cf" stroke="#25282f" stroke-width="1.3"/><circle cx="250.6" cy="295.2" r="7.7" fill="#8fb4cf" stroke="#25282f" stroke-width="1.3"/><circle cx="145.4" cy="296.5" r="7.7" fill="#8fb4cf" stroke="#25282f" stroke-width="1.3"/><circle cx="153.3" cy="296.5" r="7.7" fill="#8fb4cf" stroke="#25282f" stroke-width="1.3"/><circle cx="186.2" cy="297.8" r="7.7" fill="#8fb4cf" stroke="#25282f" stroke-width="1.3"/><circle cx="182.2" cy="304.4" r="7.7" fill="#8fb4cf" stroke="#25282f" stroke-width="1.3"/><circle cx="199.3" cy="295.2" r="7.7" fill="#8fb4cf" stroke="#25282f" stroke-width="1.3"/><circle cx="208.5" cy="296.5" r="7.7" fill="#8fb4cf" stroke="#25282f" stroke-width="1.3"/><circle cx="216.4" cy="301.8" r="7.7" fill="#8fb4cf" stroke="#25282f" stroke-width="1.3"/><circle cx="199.3" cy="305.7" r="7.7" fill="#8fb4cf" stroke="#25282f" stroke-width="1.3"/><circle cx="175.6" cy="313.6" r="7.7" fill="#8fb4cf" stroke="#25282f" stroke-width="1.3"/><circle cx="194.1" cy="316.3" r="7.7" fill="#8fb4cf" stroke="#25282f" stroke-width="1.3"/><circle cx="117.7" cy="313.6" r="7.7" fill="#8fb4cf" stroke="#25282f" stroke-width="1.3"/><circle cx="128.3" cy="312.3" r="7.7" fill="#8fb4cf" stroke="#25282f" stroke-width="1.3"/><circle cx="148.0" cy="313.6" r="7.7" fill="#8fb4cf" stroke="#25282f" stroke-width="1.3"/><circle cx="230.9" cy="320.2" r="7.7" fill="#8fb4cf" stroke="#25282f" stroke-width="1.3"/><circle cx="253.3" cy="314.9" r="7.7" fill="#8fb4cf" stroke="#25282f" stroke-width="1.3"/><circle cx="55.9" cy="313.6" r="7.7" fill="#8fb4cf" stroke="#25282f" stroke-width="1.3"/><circle cx="54.6" cy="318.9" r="7.7" fill="#8fb4cf" stroke="#25282f" stroke-width="1.3"/><circle cx="71.7" cy="317.6" r="7.7" fill="#8fb4cf" stroke="#25282f" stroke-width="1.3"/><circle cx="80.9" cy="309.7" r="7.7" fill="#8fb4cf" stroke="#25282f" stroke-width="1.3"/><circle cx="80.9" cy="321.5" r="7.7" fill="#8fb4cf" stroke="#25282f" stroke-width="1.3"/><circle cx="88.8" cy="326.8" r="7.7" fill="#8fb4cf" stroke="#25282f" stroke-width="1.3"/><circle cx="95.4" cy="322.8" r="7.7" fill="#8fb4cf" stroke="#25282f" stroke-width="1.3"/><circle cx="99.3" cy="317.6" r="7.7" fill="#8fb4cf" stroke="#25282f" stroke-width="1.3"/><circle cx="74.3" cy="329.4" r="7.7" fill="#8fb4cf" stroke="#25282f" stroke-width="1.3"/><circle cx="86.2" cy="330.7" r="7.7" fill="#8fb4cf" stroke="#25282f" stroke-width="1.3"/><circle cx="37.5" cy="339.9" r="7.7" fill="#8fb4cf" stroke="#25282f" stroke-width="1.3"/><circle cx="48.0" cy="339.9" r="7.7" fill="#8fb4cf" stroke="#25282f" stroke-width="1.3"/><circle cx="44.1" cy="355.7" r="7.7" fill="#8fb4cf" stroke="#25282f" stroke-width="1.3"/><circle cx="45.4" cy="374.2" r="7.7" fill="#8fb4cf" stroke="#25282f" stroke-width="1.3"/><circle cx="45.4" cy="382.1" r="7.7" fill="#8fb4cf" stroke="#25282f" stroke-width="1.3"/><circle cx="65.1" cy="364.9" r="7.7" fill="#8fb4cf" stroke="#25282f" stroke-width="1.3"/><circle cx="79.6" cy="363.6" r="7.7" fill="#8fb4cf" stroke="#25282f" stroke-width="1.3"/><circle cx="71.7" cy="350.5" r="7.7" fill="#8fb4cf" stroke="#25282f" stroke-width="1.3"/><circle cx="82.2" cy="343.9" r="7.7" fill="#8fb4cf" stroke="#25282f" stroke-width="1.3"/><circle cx="98.0" cy="339.9" r="7.7" fill="#8fb4cf" stroke="#25282f" stroke-width="1.3"/><circle cx="126.9" cy="341.3" r="7.7" fill="#8fb4cf" stroke="#25282f" stroke-width="1.3"/><circle cx="134.8" cy="347.8" r="7.7" fill="#8fb4cf" stroke="#25282f" stroke-width="1.3"/><circle cx="140.1" cy="353.1" r="7.7" fill="#8fb4cf" stroke="#25282f" stroke-width="1.3"/><circle cx="150.6" cy="361.0" r="7.7" fill="#8fb4cf" stroke="#25282f" stroke-width="1.3"/><circle cx="99.3" cy="362.3" r="7.7" fill="#8fb4cf" stroke="#25282f" stroke-width="1.3"/><circle cx="103.3" cy="361.0" r="7.7" fill="#8fb4cf" stroke="#25282f" stroke-width="1.3"/><circle cx="174.3" cy="337.3" r="7.7" fill="#8fb4cf" stroke="#25282f" stroke-width="1.3"/><circle cx="183.5" cy="347.8" r="7.7" fill="#8fb4cf" stroke="#25282f" stroke-width="1.3"/><circle cx="212.5" cy="328.1" r="7.7" fill="#8fb4cf" stroke="#25282f" stroke-width="1.3"/><circle cx="205.9" cy="345.2" r="7.7" fill="#8fb4cf" stroke="#25282f" stroke-width="1.3"/><circle cx="175.6" cy="384.7" r="7.7" fill="#8fb4cf" stroke="#25282f" stroke-width="1.3"/><circle cx="184.8" cy="382.1" r="7.7" fill="#8fb4cf" stroke="#25282f" stroke-width="1.3"/><circle cx="74.3" cy="380.7" r="7.7" fill="#8fb4cf" stroke="#25282f" stroke-width="1.3"/><circle cx="94.1" cy="393.9" r="7.7" fill="#8fb4cf" stroke="#25282f" stroke-width="1.3"/><circle cx="112.5" cy="392.6" r="7.7" fill="#8fb4cf" stroke="#25282f" stroke-width="1.3"/><circle cx="119.1" cy="396.5" r="7.7" fill="#8fb4cf" stroke="#25282f" stroke-width="1.3"/><circle cx="141.4" cy="395.2" r="7.7" fill="#8fb4cf" stroke="#25282f" stroke-width="1.3"/><circle cx="65.1" cy="403.1" r="7.7" fill="#8fb4cf" stroke="#25282f" stroke-width="1.3"/><circle cx="69.1" cy="417.6" r="7.7" fill="#8fb4cf" stroke="#25282f" stroke-width="1.3"/><circle cx="82.2" cy="425.5" r="7.7" fill="#8fb4cf" stroke="#25282f" stroke-width="1.3"/><circle cx="88.8" cy="429.4" r="7.7" fill="#8fb4cf" stroke="#25282f" stroke-width="1.3"/><circle cx="90.1" cy="422.8" r="7.7" fill="#8fb4cf" stroke="#25282f" stroke-width="1.3"/><rect x="258.5" y="300.5" width="15" height="15" fill="#cb8bc8" stroke="#f0f0f0" stroke-width="1.2"/><path d="M258.5,300.5 L273.5,315.5 L258.5,315.5Z" fill="#8fb3d0"/></svg><svg class="abs" style="left:7px;top:9px" width="18" height="18"><path d="M3.5,3 Q3.5,1 5.5,2 L15.5,7.8 Q17,8.7 15.5,9.6 L5.5,15.5 Q3.5,16.5 3.5,14.5Z" fill="#fff" stroke="#fff" stroke-width="1" stroke-linejoin="round"/></svg><div class="abs" style="left:31.5px;top:12px;color:#fff;font-family:'Liberation Mono',monospace;font-size:17px;line-height:18px;font-weight:bold;letter-spacing:0.1px;transform:scaleY(1.16);transform-origin:0 100%;text-shadow:1px 1px 1px #222">PLAYING</div><div class="abs" style="left:109.8px;top:22px;width:2.6px;height:2.6px;background:#fff"></div><div class="abs" style="left:114.2px;top:22px;width:2.6px;height:2.6px;background:#fff"></div><div class="abs" style="left:118.6px;top:22px;width:2.6px;height:2.6px;background:#aaa"></div><div class="abs" style="left:8px;top:515px;width:19.5px;height:19.5px;background:#cacaca;border:1px solid #e6e6e6;box-shadow:inset -1px -1px 0 #9a9a9a"><div style="position:absolute;left:5px;top:8px;width:8px;height:1.5px;background:#888"></div></div><div class="abs" style="left:33px;top:521px;width:158px;height:7px;background:#a8a8a8;border:1px solid #8a8a8a;border-radius:4px"></div><div class="abs" style="left:35.5px;top:518px;width:14px;height:14px;background:#c2c2c2;border-radius:50%;box-shadow:0 1px 2px #222"></div><div class="abs" style="left:195.8px;top:515px;width:19.5px;height:19.5px;background:#cdcdcd;border:1px solid #e6e6e6;box-shadow:inset -1px -1px 0 #9a9a9a"><svg width="19" height="19" style="position:absolute;left:-1px;top:-1px"><path d="M9.5,4 V15 M4,9.5 H15" stroke="#9a9a9a" stroke-width="1.5"/></svg></div><div class="abs" style="left:217.4px;top:515px;width:19.5px;height:19.5px;background:#cdcdcd;border:1px solid #e6e6e6;box-shadow:inset -1px -1px 0 #9a9a9a"><svg width="19" height="19" style="position:absolute;left:-1px;top:-1px"><path d="M4,9 L14,4 L10,14 L9,10Z" fill="#9a9a9a"/><circle cx="14" cy="14" r="2.5" fill="none" stroke="#9a9a9a"/></svg></div><div class="abs" style="left:239.0px;top:515px;width:19.5px;height:19.5px;background:#e2e2e2;border:1px solid #ddd;border-right:2px solid #111;border-bottom:2px solid #111"><svg width="19" height="19" style="position:absolute;left:-1px;top:-1px"><circle cx="8" cy="9" r="5.5" fill="#111"/><circle cx="6" cy="7" r="1.2" fill="#eee"/><circle cx="9" cy="6" r="1.1" fill="#eee"/><circle cx="13.5" cy="14" r="3" fill="#111" stroke="#eee" stroke-width="0.8"/><text x="15" y="6" font-size="6" fill="#111" font-family="Liberation Sans">1</text></svg></div><div class="abs" style="left:260.6px;top:515px;width:19.5px;height:19.5px;background:#e2e2e2;border:1px solid #ddd;border-right:2px solid #111;border-bottom:2px solid #111"><svg width="19" height="19" style="position:absolute;left:-1px;top:-1px"><rect x="5" y="5" width="9" height="9" fill="#111"/></svg></div><div class="abs" style="left:282.2px;top:515px;width:19.5px;height:19.5px;background:#cdcdcd;border:1px solid #e6e6e6;box-shadow:inset -1px -1px 0 #9a9a9a"><svg width="19" height="19" style="position:absolute;left:-1px;top:-1px"><circle cx="9.5" cy="7" r="2.5" fill="#9a9a9a"/><rect x="9" y="8" width="1.2" height="7" fill="#9a9a9a"/></svg></div><div class="abs" style="left:303.8px;top:515px;width:19.5px;height:19.5px;background:#cdcdcd;border:1px solid #e6e6e6;box-shadow:inset -1px -1px 0 #9a9a9a"><svg width="19" height="19" style="position:absolute;left:-1px;top:-1px"><path d="M5,9 A4.5,4.5 0 0 1 13.5,6.5 M14,10 A4.5,4.5 0 0 1 5.5,12.5" stroke="#9a9a9a" stroke-width="1.5" fill="none"/><path d="M12,3.5 L14.5,7 L11,7.2Z M7,15.5 L4.5,12 L8,11.8Z" fill="#9a9a9a"/></svg></div></div>
<div class="inp" style="left:1488px;top:236.5px;width:177px;height:23px;line-height:19px">Search Instance (Image)</div>
<div class="btn" style="left:1489px;top:266px;width:86px;height:21px;line-height:19px">Label = #</div>
<div class="btn" style="left:1580px;top:266px;width:86px;height:21px;line-height:19px">Show All</div>
<div class="abs" style="left:1486px;top:289px;width:183px;height:517px;background:#bdbbbe;border:1.5px solid #a8a8a8;border-radius:4px;overflow:hidden"><div class="abs" style="left:0;top:0.5px;width:50px;height:37.6px;background:#cac8cb;border-bottom:1.5px solid #e4e4e6;font-size:8.5px;line-height:36px;text-align:center;color:#222;padding-left:2px">04116.ppm</div><div class="abs" style="left:50px;top:0.5px;width:60.5px;height:37.6px;background:repeating-linear-gradient(45deg,#8f8e90 0 1.1px,#7d7c7e 1.1px 2.2px);border-left:1px solid #6a6a6a;border-bottom:1.3px solid #9a9a9a"></div><div class="abs" style="left:55.5px;top:7.7px;width:23.5px;height:23.5px;background:#231e1e"><div style="position:absolute;left:6.8px;top:6.8px;width:10px;height:10px;border-radius:50%;background:#a8a8a0;border:1.2px solid #7a4a3a;opacity:0.8;box-sizing:border-box"></div></div><div class="abs" style="left:81px;top:0.5px;font-size:8.6px;line-height:37px;color:#222;white-space:nowrap">5 <b>→</b> 7</div><div class="abs" style="left:110.5px;top:0.5px;width:60.5px;height:37.6px;background:repeating-linear-gradient(45deg,#dcd6da 0 1.1px,#e8c6d4 1.1px 2.2px);border-left:1px solid #6a6a6a;border-bottom:1.3px solid #9a9a9a"></div><div class="abs" style="left:116.0px;top:7.7px;width:23.5px;height:23.5px;background:#231e1e"><div style="position:absolute;left:6.8px;top:6.8px;width:10px;height:10px;border-radius:50%;background:#a8a8a0;border:1.2px solid #7a4a3a;opacity:0.8;box-sizing:border-box"></div></div><div class="abs" style="left:141.5px;top:0.5px;font-size:8.6px;line-height:37px;color:#222;white-space:nowrap">5 <b>→</b> 7</div><div class="abs" style="left:0;top:38.1px;width:50px;height:37.6px;background:#cac8cb;border-bottom:1.5px solid #e4e4e6;font-size:8.5px;line-height:36px;text-align:center;color:#222;padding-left:2px">04164.ppm</div><div class="abs" style="left:50px;top:38.1px;width:60.5px;height:37.6px;background:repeating-linear-gradient(45deg,#d6d6d2 0 1.1px,#b3cb8e 1.1px 2.2px);border-left:1px solid #6a6a6a;border-bottom:1.3px solid #9a9a9a"></div><div class="abs" style="left:55.5px;top:45.3px;width:23.5px;height:23.5px;background:#1e1a1a"><div style="position:absolute;left:2.8px;top:2.8px;width:18px;height:18px;border-radius:50%;background:#c8d4e4;border:1.6px solid #b83030;opacity:1;box-sizing:border-box"><div style="position:absolute;left:0;top:0;width:18px;height:18px;line-height:15px;text-align:center;font-size:9.5px;font-weight:bold;color:#2a2e40;letter-spacing:-0.5px">80</div></div></div><div class="abs" style="left:81px;top:38.1px;font-size:8.6px;line-height:37px;color:#222;white-space:nowrap">5 <b>→</b> 5</div><div class="abs" style="left:110.5px;top:38.1px;width:60.5px;height:37.6px;background:repeating-linear-gradient(45deg,#d6d4d7 0 1.1px,#bebcbf 1.1px 2.2px);border-left:1px solid #6a6a6a;border-bottom:1.3px solid #9a9a9a"></div><div class="abs" style="left:116.0px;top:45.3px;width:23.5px;height:23.5px;background:#1e1a1a"><div style="position:absolute;left:2.8px;top:2.8px;width:18px;height:18px;border-radius:50%;background:#c8d4e4;border:1.6px solid #b83030;opacity:1;box-sizing:border-box"><div style="position:absolute;left:0;top:0;width:18px;height:18px;line-height:15px;text-align:center;font-size:9.5px;font-weight:bold;color:#2a2e40;letter-spacing:-0.5px">80</div></div></div><div class="abs" style="left:141.5px;top:38.1px;font-size:8.6px;line-height:37px;color:#222;white-space:nowrap">5 <b>→</b> 3</div><div class="abs" style="left:0;top:75.7px;width:50px;height:37.6px;background:#cac8cb;border-bottom:1.5px solid #e4e4e6;font-size:8.5px;line-height:36px;text-align:center;color:#222;padding-left:2px">04376.ppm</div><div class="abs" style="left:50px;top:75.7px;width:60.5px;height:37.6px;background:repeating-linear-gradient(45deg,#d6d4d7 0 1.1px,#bebcbf 1.1px 2.2px);border-left:1px solid #6a6a6a;border-bottom:1.3px solid #9a9a9a"></div><div class="abs" style="left:55.5px;top:82.9px;width:23.5px;height:23.5px;background:#1e1a1c"><div style="position:absolute;left:3.8px;top:3.8px;width:16px;height:16px;border-radius:50%;background:#4a4e60;border:1.6px solid #6a2a30;opacity:0.7;box-sizing:border-box"></div></div><div class="abs" style="left:81px;top:75.7px;font-size:8.6px;line-height:37px;color:#222;white-space:nowrap">5 <b>→</b> 5</div><div class="abs" style="left:110.5px;top:75.7px;width:60.5px;height:37.6px;background:repeating-linear-gradient(45deg,#dcd6da 0 1.1px,#e8c6d4 1.1px 2.2px);border-left:1px solid #6a6a6a;border-bottom:1.3px solid #9a9a9a"></div><div class="abs" style="left:116.0px;top:82.9px;width:23.5px;height:23.5px;background:#1e1a1c"><div style="position:absolute;left:3.8px;top:3.8px;width:16px;height:16px;border-radius:50%;background:#4a4e60;border:1.6px solid #6a2a30;opacity:0.7;box-sizing:border-box"></div></div><div class="abs" style="left:141.5px;top:75.7px;font-size:8.6px;line-height:37px;color:#222;white-space:nowrap">5 <b>→</b> 3</div><div class="abs" style="left:0;top:113.3px;width:50px;height:37.6px;background:#cac8cb;border-bottom:1.5px solid #e4e4e6;font-size:8.5px;line-height:36px;text-align:center;color:#222;padding-left:2px">04440.ppm</div><div class="abs" style="left:50px;top:113.3px;width:60.5px;height:37.6px;background:repeating-linear-gradient(45deg,#d6d6d2 0 1.1px,#b3cb8e 1.1px 2.2px);border-left:1px solid #6a6a6a;border-bottom:1.3px solid #9a9a9a"></div><div class="abs" style="left:55.5px;top:120.5px;width:23.5px;height:23.5px;background:#0e0c0e"><div style="position:absolute;left:2.8px;top:2.8px;width:18px;height:18px;border-radius:50%;background:#e6e6e6;border:1.6px solid #c02828;opacity:1;box-sizing:border-box"><div style="position:absolute;left:0;top:0;width:18px;height:18px;line-height:15px;text-align:center;font-size:9.5px;font-weight:bold;color:#333;letter-spacing:-0.5px">80</div></div></div><div class="abs" style="left:81px;top:113.3px;font-size:8.6px;line-height:37px;color:#222;white-space:nowrap">5 <b>→</b> 5</div><div class="abs" style="left:110.5px;top:113.3px;width:60.5px;height:37.6px;background:repeating-linear-gradient(45deg,#d6d4d7 0 1.1px,#bebcbf 1.1px 2.2px);border-left:1px solid #6a6a6a;border-bottom:1.3px solid #9a9a9a"></div><div class="abs" style="left:116.0px;top:120.5px;width:23.5px;height:23.5px;background:#0e0c0e"><div style="position:absolute;left:2.8px;top:2.8px;width:18px;height:18px;border-radius:50%;background:#e6e6e6;border:1.6px solid #c02828;opacity:1;box-sizing:border-box"><div style="position:absolute;left:0;top:0;width:18px;height:18px;line-height:15px;text-align:center;font-size:9.5px;font-weight:bold;color:#333;letter-spacing:-0.5px">80</div></div></div><div class="abs" style="left:141.5px;top:113.3px;font-size:8.6px;line-height:37px;color:#222;white-space:nowrap">5 <b>→</b> 1</div><div class="abs" style="left:0;top:150.9px;width:50px;height:37.6px;background:#cac8cb;border-bottom:1.5px solid #e4e4e6;font-size:8.5px;line-height:36px;text-align:center;color:#222;padding-left:2px">04484.ppm</div><div class="abs" style="left:50px;top:150.9px;width:60.5px;height:37.6px;background:repeating-linear-gradient(45deg,#d6d4d7 0 1.1px,#bebcbf 1.1px 2.2px);border-left:1px solid #6a6a6a;border-bottom:1.3px solid #9a9a9a"></div><div class="abs" style="left:55.5px;top:158.1px;width:23.5px;height:23.5px;background:#0c0b0d"><div style="position:absolute;left:3.8px;top:3.8px;width:16px;height:16px;border-radius:50%;background:#1e1c20;border:1.6px solid #2a2024;opacity:0.6;box-sizing:border-box"></div></div><div class="abs" style="left:81px;top:150.9px;font-size:8.6px;line-height:37px;color:#222;white-space:nowrap">5 <b>→</b> 5</div><div class="abs" style="left:110.5px;top:150.9px;width:60.5px;height:37.6px;background:repeating-linear-gradient(45deg,#dcd6da 0 1.1px,#e8c6d4 1.1px 2.2px);border-left:1px solid #6a6a6a;border-bottom:1.3px solid #9a9a9a"></div><div class="abs" style="left:116.0px;top:158.1px;width:23.5px;height:23.5px;background:#0c0b0d"><div style="position:absolute;left:3.8px;top:3.8px;width:16px;height:16px;border-radius:50%;background:#1e1c20;border:1.6px solid #2a2024;opacity:0.6;box-sizing:border-box"></div></div><div class="abs" style="left:141.5px;top:150.9px;font-size:8.6px;line-height:37px;color:#222;white-space:nowrap">5 <b>→</b> 7</div><div class="abs" style="left:0;top:188.5px;width:50px;height:37.6px;background:#cac8cb;border-bottom:1.5px solid #e4e4e6;font-size:8.5px;line-height:36px;text-align:center;color:#222;padding-left:2px">04536.ppm</div><div class="abs" style="left:50px;top:188.5px;width:60.5px;height:37.6px;background:repeating-linear-gradient(45deg,#d6d6d2 0 1.1px,#b3cb8e 1.1px 2.2px);border-left:1px solid #6a6a6a;border-bottom:1.3px solid #9a9a9a"></div><div class="abs" style="left:55.5px;top:195.7px;width:23.5px;height:23.5px;background:#1c1a1c"><div style="position:absolute;left:3.8px;top:3.8px;width:16px;height:16px;border-radius:50%;background:#6a6e78;border:1.6px solid #6a3a3a;opacity:0.9;box-sizing:border-box"><div style="position:absolute;left:0;top:0;width:16px;height:16px;line-height:13px;text-align:center;font-size:8.4px;font-weight:bold;color:#2a2e40;letter-spacing:-0.5px">80</div></div></div><div class="abs" style="left:81px;top:188.5px;font-size:8.6px;line-height:37px;color:#222;white-space:nowrap">5 <b>→</b> 5</div><div class="abs" style="left:110.5px;top:188.5px;width:60.5px;height:37.6px;background:repeating-linear-gradient(45deg,#d6d4d7 0 1.1px,#bebcbf 1.1px 2.2px);border-left:1px solid #6a6a6a;border-bottom:1.3px solid #9a9a9a"></div><div class="abs" style="left:116.0px;top:195.7px;width:23.5px;height:23.5px;background:#1c1a1c"><div style="position:absolute;left:3.8px;top:3.8px;width:16px;height:16px;border-radius:50%;background:#6a6e78;border:1.6px solid #6a3a3a;opacity:0.9;box-sizing:border-box"><div style="position:absolute;left:0;top:0;width:16px;height:16px;line-height:13px;text-align:center;font-size:8.4px;font-weight:bold;color:#2a2e40;letter-spacing:-0.5px">80</div></div></div><div class="abs" style="left:141.5px;top:188.5px;font-size:8.6px;line-height:37px;color:#222;white-space:nowrap">5 <b>→</b> 2</div><div class="abs" style="left:0;top:226.1px;width:50px;height:37.6px;background:#cac8cb;border-bottom:1.5px solid #e4e4e6;font-size:8.5px;line-height:36px;text-align:center;color:#222;padding-left:2px">04560.ppm</div><div class="abs" style="left:50px;top:226.1px;width:60.5px;height:37.6px;background:repeating-linear-gradient(45deg,#d6d4d7 0 1.1px,#bebcbf 1.1px 2.2px);border-left:1px solid #6a6a6a;border-bottom:1.3px solid #9a9a9a"></div><div class="abs" style="left:55.5px;top:233.3px;width:23.5px;height:23.5px;background:#2a2420"><div style="position:absolute;left:3.8px;top:3.8px;width:16px;height:16px;border-radius:50%;background:#f0f0f0;border:1.6px solid #e03020;opacity:1;box-sizing:border-box"></div></div><div class="abs" style="left:81px;top:226.1px;font-size:8.6px;line-height:37px;color:#222;white-space:nowrap">5 <b>→</b> 5</div><div class="abs" style="left:110.5px;top:226.1px;width:60.5px;height:37.6px;background:repeating-linear-gradient(45deg,#dcd6da 0 1.1px,#e8c6d4 1.1px 2.2px);border-left:1px solid #6a6a6a;border-bottom:1.3px solid #9a9a9a"></div><div class="abs" style="left:116.0px;top:233.3px;width:23.5px;height:23.5px;background:#2a2420"><div style="position:absolute;left:3.8px;top:3.8px;width:16px;height:16px;border-radius:50%;background:#f0f0f0;border:1.6px solid #e03020;opacity:1;box-sizing:border-box"></div></div><div class="abs" style="left:141.5px;top:226.1px;font-size:8.6px;line-height:37px;color:#222;white-space:nowrap">5 <b>→</b> 2</div><div class="abs" style="left:0;top:263.7px;width:50px;height:37.6px;background:#cac8cb;border-bottom:1.5px solid #e4e4e6;font-size:8.5px;line-height:36px;text-align:center;color:#222;padding-left:2px">04580.ppm</div><div class="abs" style="left:50px;top:263.7px;width:60.5px;height:37.6px;background:repeating-linear-gradient(45deg,#d6d6d2 0 1.1px,#b3cb8e 1.1px 2.2px);border-left:1px solid #6a6a6a;border-bottom:1.3px solid #9a9a9a"></div><div class="abs" style="left:55.5px;top:270.9px;width:23.5px;height:23.5px;background:#2e2e34"><div style="position:absolute;left:1.8px;top:1.8px;width:20px;height:20px;border-radius:50%;background:#8a8a8e;border:1.6px solid #3a2a2a;opacity:1;box-sizing:border-box"><div style="position:absolute;left:0;top:0;width:20px;height:20px;line-height:17px;text-align:center;font-size:10.5px;font-weight:bold;color:#333;letter-spacing:-0.5px">80</div></div></div><div class="abs" style="left:81px;top:263.7px;font-size:8.6px;line-height:37px;color:#222;white-space:nowrap">5 <b>→</b> 5</div><div class="abs" style="left:110.5px;top:263.7px;width:60.5px;height:37.6px;background:repeating-linear-gradient(45deg,#d6d4d7 0 1.1px,#bebcbf 1.1px 2.2px);border-left:1px solid #6a6a6a;border-bottom:1.3px solid #9a9a9a"></div><div class="abs" style="left:116.0px;top:270.9px;width:23.5px;height:23.5px;background:#2e2e34"><div style="position:absolute;left:1.8px;top:1.8px;width:20px;height:20px;border-radius:50%;background:#8a8a8e;border:1.6px solid #3a2a2a;opacity:1;box-sizing:border-box"><div style="position:absolute;left:0;top:0;width:20px;height:20px;line-height:17px;text-align:center;font-size:10.5px;font-weight:bold;color:#333;letter-spacing:-0.5px">80</div></div></div><div class="abs" style="left:141.5px;top:263.7px;font-size:8.6px;line-height:37px;color:#222;white-space:nowrap">5 <b>→</b> 3</div><div class="abs" style="left:0;top:301.3px;width:50px;height:37.6px;background:#cac8cb;border-bottom:1.5px solid #e4e4e6;font-size:8.5px;line-height:36px;text-align:center;color:#222;padding-left:2px">04644.ppm</div><div class="abs" style="left:50px;top:301.3px;width:60.5px;height:37.6px;background:repeating-linear-gradient(45deg,#d6d4d7 0 1.1px,#bebcbf 1.1px 2.2px);border-left:1px solid #6a6a6a;border-bottom:1.3px solid #9a9a9a"></div><div class="abs" style="left:55.5px;top:308.5px;width:23.5px;height:23.5px;background:#14121a"><div style="position:absolute;left:3.8px;top:3.8px;width:16px;height:16px;border-radius:50%;background:#b8c0d8;border:1.6px solid #c03030;opacity:1;box-sizing:border-box"><div style="position:absolute;left:0;top:0;width:16px;height:16px;line-height:13px;text-align:center;font-size:8.4px;font-weight:bold;color:#2a2e40;letter-spacing:-0.5px">80</div></div></div><div class="abs" style="left:81px;top:301.3px;font-size:8.6px;line-height:37px;color:#222;white-space:nowrap">5 <b>→</b> 5</div><div class="abs" style="left:110.5px;top:301.3px;width:60.5px;height:37.6px;background:repeating-linear-gradient(45deg,#dcd6da 0 1.1px,#e8c6d4 1.1px 2.2px);border-left:1px solid #6a6a6a;border-bottom:1.3px solid #9a9a9a"></div><div class="abs" style="left:116.0px;top:308.5px;width:23.5px;height:23.5px;background:#14121a"><div style="position:absolute;left:3.8px;top:3.8px;width:16px;height:16px;border-radius:50%;background:#b8c0d8;border:1.6px solid #c03030;opacity:1;box-sizing:border-box"><div style="position:absolute;left:0;top:0;width:16px;height:16px;line-height:13px;text-align:center;font-size:8.4px;font-weight:bold;color:#2a2e40;letter-spacing:-0.5px">80</div></div></div><div class="abs" style="left:141.5px;top:301.3px;font-size:8.6px;line-height:37px;color:#222;white-space:nowrap">5 <b>→</b> 1</div><div class="abs" style="left:0;top:338.9px;width:50px;height:37.6px;background:#cac8cb;border-bottom:1.5px solid #e4e4e6;font-size:8.5px;line-height:36px;text-align:center;color:#222;padding-left:2px">04712.ppm</div><div class="abs" style="left:50px;top:338.9px;width:60.5px;height:37.6px;background:repeating-linear-gradient(45deg,#d6d6d2 0 1.1px,#b3cb8e 1.1px 2.2px);border-left:1px solid #6a6a6a;border-bottom:1.3px solid #9a9a9a"></div><div class="abs" style="left:55.5px;top:346.1px;width:23.5px;height:23.5px;background:#1a1818"><div style="position:absolute;left:4.8px;top:4.8px;width:14px;height:14px;border-radius:50%;background:#3a3a3c;border:1.2px solid #3a2a2a;opacity:0.8;box-sizing:border-box"></div></div><div class="abs" style="left:81px;top:338.9px;font-size:8.6px;line-height:37px;color:#222;white-space:nowrap">5 <b>→</b> 5</div><div class="abs" style="left:110.5px;top:338.9px;width:60.5px;height:37.6px;background:repeating-linear-gradient(45deg,#d6d4d7 0 1.1px,#bebcbf 1.1px 2.2px);border-left:1px solid #6a6a6a;border-bottom:1.3px solid #9a9a9a"></div><div class="abs" style="left:116.0px;top:346.1px;width:23.5px;height:23.5px;background:#1a1818"><div style="position:absolute;left:4.8px;top:4.8px;width:14px;height:14px;border-radius:50%;background:#3a3a3c;border:1.2px solid #3a2a2a;opacity:0.8;box-sizing:border-box"></div></div><div class="abs" style="left:141.5px;top:338.9px;font-size:8.6px;line-height:37px;color:#222;white-space:nowrap">5 <b>→</b> 2</div><div class="abs" style="left:0;top:376.5px;width:50px;height:37.6px;background:#cac8cb;border-bottom:1.5px solid #e4e4e6;font-size:8.5px;line-height:36px;text-align:center;color:#222;padding-left:2px">04728.ppm</div><div class="abs" style="left:50px;top:376.5px;width:60.5px;height:37.6px;background:repeating-linear-gradient(45deg,#d6d4d7 0 1.1px,#bebcbf 1.1px 2.2px);border-left:1px solid #6a6a6a;border-bottom:1.3px solid #9a9a9a"></div><div class="abs" style="left:55.5px;top:383.7px;width:23.5px;height:23.5px;background:#181616"><div style="position:absolute;left:4.8px;top:4.8px;width:14px;height:14px;border-radius:50%;background:#2e2e30;border:1.2px solid #3a2a2a;opacity:0.8;box-sizing:border-box"></div></div><div class="abs" style="left:81px;top:376.5px;font-size:8.6px;line-height:37px;color:#222;white-space:nowrap">5 <b>→</b> 5</div><div class="abs" style="left:110.5px;top:376.5px;width:60.5px;height:37.6px;background:repeating-linear-gradient(45deg,#dcd6da 0 1.1px,#e8c6d4 1.1px 2.2px);border-left:1px solid #6a6a6a;border-bottom:1.3px solid #9a9a9a"></div><div class="abs" style="left:116.0px;top:383.7px;width:23.5px;height:23.5px;background:#181616"><div style="position:absolute;left:4.8px;top:4.8px;width:14px;height:14px;border-radius:50%;background:#2e2e30;border:1.2px solid #3a2a2a;opacity:0.8;box-sizing:border-box"></div></div><div class="abs" style="left:141.5px;top:376.5px;font-size:8.6px;line-height:37px;color:#222;white-space:nowrap">5 <b>→</b> 2</div><div class="abs" style="left:0;top:414.1px;width:50px;height:37.6px;background:#cac8cb;border-bottom:1.5px solid #e4e4e6;font-size:8.5px;line-height:36px;text-align:center;color:#222;padding-left:2px">04812.ppm</div><div class="abs" style="left:50px;top:414.1px;width:60.5px;height:37.6px;background:repeating-linear-gradient(45deg,#d6d6d2 0 1.1px,#b3cb8e 1.1px 2.2px);border-left:1px solid #6a6a6a;border-bottom:1.3px solid #9a9a9a"></div><div class="abs" style="left:55.5px;top:421.3px;width:23.5px;height:23.5px;background:#2a2420"><div style="position:absolute;left:3.8px;top:3.8px;width:16px;height:16px;border-radius:50%;background:#f2f2f2;border:1.6px solid #e03020;opacity:1;box-sizing:border-box"></div></div><div class="abs" style="left:81px;top:414.1px;font-size:8.6px;line-height:37px;color:#222;white-space:nowrap">5 <b>→</b> 5</div><div class="abs" style="left:110.5px;top:414.1px;width:60.5px;height:37.6px;background:repeating-linear-gradient(45deg,#d6d4d7 0 1.1px,#bebcbf 1.1px 2.2px);border-left:1px solid #6a6a6a;border-bottom:1.3px solid #9a9a9a"></div><div class="abs" style="left:116.0px;top:421.3px;width:23.5px;height:23.5px;background:#2a2420"><div style="position:absolute;left:3.8px;top:3.8px;width:16px;height:16px;border-radius:50%;background:#f2f2f2;border:1.6px solid #e03020;opacity:1;box-sizing:border-box"></div></div><div class="abs" style="left:141.5px;top:414.1px;font-size:8.6px;line-height:37px;color:#222;white-space:nowrap">5 <b>→</b> 2</div><div class="abs" style="left:0;top:451.7px;width:50px;height:37.6px;background:#cac8cb;border-bottom:1.5px solid #e4e4e6;font-size:8.5px;line-height:36px;text-align:center;color:#222;padding-left:2px">04836.ppm</div><div class="abs" style="left:50px;top:451.7px;width:60.5px;height:37.6px;background:repeating-linear-gradient(45deg,#d6d4d7 0 1.1px,#bebcbf 1.1px 2.2px);border-left:1px solid #6a6a6a;border-bottom:1.3px solid #9a9a9a"></div><div class="abs" style="left:55.5px;top:458.9px;width:23.5px;height:23.5px;background:#0e0e10"><div style="position:absolute;left:4.8px;top:4.8px;width:14px;height:14px;border-radius:50%;background:#202024;border:1.2px solid #2a2024;opacity:0.6;box-sizing:border-box"></div></div><div class="abs" style="left:81px;top:451.7px;font-size:8.6px;line-height:37px;color:#222;white-space:nowrap">5 <b>→</b> 5</div><div class="abs" style="left:110.5px;top:451.7px;width:60.5px;height:37.6px;background:repeating-linear-gradient(45deg,#dcd6da 0 1.1px,#e8c6d4 1.1px 2.2px);border-left:1px solid #6a6a6a;border-bottom:1.3px solid #9a9a9a"></div><div class="abs" style="left:116.0px;top:458.9px;width:23.5px;height:23.5px;background:#0e0e10"><div style="position:absolute;left:4.8px;top:4.8px;width:14px;height:14px;border-radius:50%;background:#202024;border:1.2px solid #2a2024;opacity:0.6;box-sizing:border-box"></div></div><div class="abs" style="left:141.5px;top:451.7px;font-size:8.6px;line-height:37px;color:#222;white-space:nowrap">5 <b>→</b> 2</div><div class="abs" style="left:0;top:489.3px;width:50px;height:37.6px;background:#cac8cb;border-bottom:1.5px solid #e4e4e6;font-size:8.5px;line-height:36px;text-align:center;color:#222;padding-left:2px">04840.ppm</div><div class="abs" style="left:50px;top:489.3px;width:60.5px;height:37.6px;background:repeating-linear-gradient(45deg,#d6d6d2 0 1.1px,#b3cb8e 1.1px 2.2px);border-left:1px solid #6a6a6a;border-bottom:1.3px solid #9a9a9a"></div><div class="abs" style="left:55.5px;top:496.5px;width:23.5px;height:23.5px;background:#1a1818"><div style="position:absolute;left:3.8px;top:3.8px;width:16px;height:16px;border-radius:50%;background:#4a4e58;border:1.6px solid #5a2a30;opacity:0.8;box-sizing:border-box"><div style="position:absolute;left:0;top:0;width:16px;height:16px;line-height:13px;text-align:center;font-size:8.4px;font-weight:bold;color:#2a2e40;letter-spacing:-0.5px">80</div></div></div><div class="abs" style="left:81px;top:489.3px;font-size:8.6px;line-height:37px;color:#222;white-space:nowrap">5 <b>→</b> 5</div><div class="abs" style="left:110.5px;top:489.3px;width:60.5px;height:37.6px;background:repeating-linear-gradient(45deg,#d6d4d7 0 1.1px,#bebcbf 1.1px 2.2px);border-left:1px solid #6a6a6a;border-bottom:1.3px solid #9a9a9a"></div><div class="abs" style="left:116.0px;top:496.5px;width:23.5px;height:23.5px;background:#1a1818"><div style="position:absolute;left:3.8px;top:3.8px;width:16px;height:16px;border-radius:50%;background:#4a4e58;border:1.6px solid #5a2a30;opacity:0.8;box-sizing:border-box"><div style="position:absolute;left:0;top:0;width:16px;height:16px;line-height:13px;text-align:center;font-size:8.4px;font-weight:bold;color:#2a2e40;letter-spacing:-0.5px">80</div></div></div><div class="abs" style="left:141.5px;top:489.3px;font-size:8.6px;line-height:37px;color:#222;white-space:nowrap">5 <b>→</b> 3</div><div class="abs" style="left:170.5px;top:0;width:1.8px;height:515px;background:#e8e8e8"></div><div class="abs" style="left:172.3px;top:0;width:9px;height:515px;background:#9c9c9c"></div><div class="abs" style="left:173.5px;top:176px;width:7px;height:46px;background:#e2e2e2;border-radius:3.5px"></div></div>
<div class="abs" style="left:653px;top:789.5px;color:#fff;font-size:15.4px;line-height:20px;-webkit-text-stroke:0.3px #fff">Model 0</div>
<div class="abs" style="left:730px;top:793px;width:508px;height:9px;background:#8d8d8d;border-radius:5px"></div>
<div class="abs" style="left:729px;top:789px;width:18px;height:18px;background:#858585;border-radius:50%"></div>
<div class="abs" style="left:1259px;top:789.5px;color:#fff;font-size:15.4px;line-height:20px;-webkit-text-stroke:0.3px #fff">Model 0</div>
<div class="btn" style="left:1333px;top:786px;width:91px;height:23px;line-height:21px;font-size:15px;background:#666">Compare</div>
<div class="panel dots" style="left:388px;top:815px;width:463px;height:315px"><div class="abs" style="left:4px;top:3px;color:#fff;font-size:11px;font-weight:bold">INSTANCE VIEW</div><div class="abs" style="left:0;top:16.5px;width:457px;height:2px;background:#a7a7a8"></div><div class="abs" style="left:438px;top:17.5px;width:17.5px;height:17.5px;background:#d5d5d5;border:1px solid #888;border-right:2px solid #111;border-bottom:2px solid #111;font-size:6.5px;color:#222;text-align:center;line-height:10px;letter-spacing:-0.3px">CAM<svg width="8" height="6" style="position:absolute;left:7px;top:8.5px"><ellipse cx="4" cy="3" rx="3.5" ry="2.3" fill="#222"/><circle cx="4" cy="3" r="1.2" fill="#ccc"/></svg></div><div class="abs" style="left:10px;top:28px;width:122px;height:122px;border:3px solid #d2d2d2;border-radius:5px;background:#333;overflow:hidden;box-shadow:0 0 2px #4a5a66"><svg width="116" height="116" style="position:absolute;left:0;top:0"><defs><filter id="bn" x="-30%" y="-30%" width="160%" height="160%"><feGaussianBlur stdDeviation="5"/></filter><filter id="cn" x="-30%" y="-30%" width="160%" height="160%"><feGaussianBlur stdDeviation="2.5"/></filter></defs><rect width="116" height="116" fill="#0d0e64"/><g filter="url(#bn)"><ellipse cx="76" cy="80" rx="58" ry="56" fill="#1030c8"/><ellipse cx="74" cy="77" rx="47" ry="46" fill="#20b0d8"/><ellipse cx="72" cy="73" rx="40" ry="38" fill="#60b868"/><ellipse cx="74" cy="68" rx="36" ry="26" fill="#a8c038"/><ellipse cx="106" cy="106" rx="16" ry="15" fill="#1878c0"/><ellipse cx="60" cy="62" rx="24" ry="24" fill="#e8d048"/><rect x="42" y="70" width="30" height="50" fill="#e09838"/></g><g filter="url(#cn)"><ellipse cx="62" cy="62" rx="18" ry="17" fill="#e05a40"/><rect x="51" y="80" width="14" height="40" fill="#c83820"/><ellipse cx="60" cy="58" rx="9" ry="9" fill="#9a3038"/></g><circle cx="59" cy="58" r="3" fill="#5a2030"/></svg></div><div class="abs" style="left:10px;top:153px;width:122px;text-align:center;color:#fff;font-size:11px;text-shadow:1px 1px 1px #222">Natural Image</div><div class="abs" style="left:10px;top:169px;width:122px;height:122px;border:3px solid #d2d2d2;border-radius:5px;background:#333;overflow:hidden;box-shadow:0 0 2px #4a5a66"><svg width="115" height="115" style="position:absolute;left:0;top:0"><filter id="nz" color-interpolation-filters="sRGB"><feTurbulence type="fractalNoise" baseFrequency="0.55" numOctaves="2" seed="4"/><feColorMatrix type="matrix" values="0.25 0 0 0 0.42  0 0.25 0 0 0.44  0 0 0.25 0 0.44  0 0 0 0 1"/></filter><rect width="115" height="115" filter="url(#nz)"/></svg></div><div class="abs" style="left:10px;top:295px;width:122px;text-align:center;color:#fff;font-size:11px;text-shadow:1px 1px 1px #222">Perturbation</div><div class="abs" style="left:311px;top:98px;width:122px;height:122px;border:3px solid #d2d2d2;border-radius:5px;background:#333;overflow:hidden;box-shadow:0 0 2px #4a5a66"><svg width="116" height="116" style="position:absolute;left:0;top:0"><defs><filter id="ba" x="-30%" y="-30%" width="160%" height="160%"><feGaussianBlur stdDeviation="5"/></filter><filter id="ca" x="-30%" y="-30%" width="160%" height="160%"><feGaussianBlur stdDeviation="2.5"/></filter></defs><rect width="116" height="116" fill="#0d0e64"/><g filter="url(#ba)"><ellipse cx="76" cy="80" rx="58" ry="56" fill="#1030c8"/><ellipse cx="74" cy="77" rx="47" ry="46" fill="#20b0d8"/><ellipse cx="72" cy="73" rx="40" ry="38" fill="#60b868"/><ellipse cx="74" cy="68" rx="36" ry="26" fill="#a8c038"/><ellipse cx="104" cy="104" rx="18" ry="18" fill="#38b090"/><ellipse cx="60" cy="62" rx="24" ry="24" fill="#e8d048"/><rect x="42" y="70" width="30" height="50" fill="#e09838"/></g><g filter="url(#ca)"><ellipse cx="62" cy="62" rx="18" ry="17" fill="#e05a40"/><rect x="50" y="80" width="16" height="40" fill="#b01818"/><ellipse cx="60" cy="58" rx="9" ry="9" fill="#9a3038"/></g><circle cx="59" cy="58" r="3" fill="#5a2030"/></svg></div><div class="abs" style="left:312px;top:224px;width:122px;text-align:center;color:#fff;font-size:11px;text-shadow:1px 1px 1px #222">Adversarial Image</div><div class="abs" style="left:141px;top:25px;color:#fff;font-size:11.6px;text-shadow:1px 1px 1px #222">Nat. predict.:</div><div class="abs" style="left:142px;top:42px;width:103px;height:28px;background:repeating-linear-gradient(135deg,#fde8e6 0 2px,#f7d6d3 2px 4px);border:1px solid #e6b8b0;border-radius:2px;color:#444;font-size:10px;line-height:11px;padding:3px 0 0 6px">7:SPEED LIMIT<br>(100KM/H) ×</div><div class="abs" style="left:253px;top:43px;width:26px;height:26px;border-radius:50%;background:#fff;border:3px solid #d41a1a;box-shadow:0 0 0 1px #aaa;color:#000;font-size:12px;font-weight:bold;text-align:center;line-height:20px;letter-spacing:-0.8px">100</div><div class="abs" style="left:313.5px;top:243px;color:#fff;font-size:11.6px;text-shadow:1px 1px 1px #222">Adv. predict.:</div><div class="abs" style="left:314px;top:259px;width:103px;height:28px;background:repeating-linear-gradient(135deg,#fde8e6 0 2px,#f7d6d3 2px 4px);border:1px solid #e6b8b0;border-radius:2px;color:#444;font-size:10px;line-height:11px;padding:3px 0 0 6px">7:SPEED LIMIT<br>(100KM/H) ×</div><div class="abs" style="left:425px;top:260px;width:26px;height:26px;border-radius:50%;background:#fff;border:3px solid #d41a1a;box-shadow:0 0 0 1px #aaa;color:#000;font-size:12px;font-weight:bold;text-align:center;line-height:20px;letter-spacing:-0.8px">100</div><svg class="abs" style="left:0;top:0" width="460" height="310"><path d="M137,91 L267,91 L267,136 M267,187 L267,231 L137,231 M297,162.5 L310,162.5" stroke="#e6f0f5" stroke-width="3.6" fill="none" stroke-dasharray="9,8"/></svg><div class="abs" style="left:243px;top:137px;width:48px;height:48px;border-radius:50%;background:#8f8f8f;border:2px solid #c8c8c8;color:#fff;font-size:34px;line-height:42px;text-align:center;font-weight:normal">+</div></div>
<div class="panel dots" style="left:861px;top:816px;width:808px;height:314px"><div class="abs" style="left:10px;top:2.5px;color:#fff;font-size:11px;font-weight:bold">CLASS OVERVIEW</div><div class="abs" style="left:0;top:17px;width:802px;height:2px;background:#a7a7a8"></div><div class="abs" style="left:11px;top:28px;width:575px;height:268px;background:#eff1f4;border:2px solid #8a8a8a;border-radius:4px;overflow:hidden"><div class="abs" style="left:0;top:0;width:575px;height:25px;background:#00c5cd"></div><div class="abs" style="left:6.5px;top:5px;font-size:11px;font-weight:bold;color:#111">Data Type</div><div class="abs" style="left:120.2px;top:5px;font-size:11px;font-weight:bold;color:#111">False Positive</div><div class="abs" style="left:113.7px;top:4px;width:1.5px;height:17px;background:#dfe"></div><div class="abs" style="left:233.9px;top:5px;font-size:11px;font-weight:bold;color:#111">Precision</div><div class="abs" style="left:227.4px;top:4px;width:1.5px;height:17px;background:#dfe"></div><div class="abs" style="left:347.6px;top:5px;font-size:11px;font-weight:bold;color:#111">False Negative</div><div class="abs" style="left:341.1px;top:4px;width:1.5px;height:17px;background:#dfe"></div><div class="abs" style="left:461.3px;top:5px;font-size:11px;font-weight:bold;color:#111">Recall</div><div class="abs" style="left:454.8px;top:4px;width:1.5px;height:17px;background:#dfe"></div><div class="abs" style="left:0;top:143px;width:575px;height:2px;background:#b9bcc2"></div><div class="abs" style="left:13px;top:75px;padding:2px 6px;background:#eefce6;border:1px solid #cfe8b8;border-radius:3px;color:#3a8a2a;font-size:12px;line-height:14px">NATURAL</div><div class="abs" style="left:13px;top:195px;padding:2px 6px;background:#fde9e6;border:1px solid #f2c8c0;border-radius:3px;color:#c23a2a;font-size:12px;line-height:14px">ADVERSARIAL</div><svg class="abs" style="left:0;top:0" width="575" height="270"><path d="M173.7,80.7 L173.70,35.20 A45.5,45.5 0 0 1 219.20,80.70Z" fill="#b1a49a" stroke="#eee" stroke-width="0.5"/><path d="M173.7,80.7 L219.20,80.70 A45.5,45.5 0 1 1 173.70,35.20Z" fill="#9bc2b7" stroke="#eee" stroke-width="0.5"/><circle cx="173.7" cy="80.7" r="45.5" fill="none" stroke="#4a4d5a" stroke-width="1.8"/><circle cx="173.7" cy="80.7" r="47.5" fill="none" stroke="rgba(120,220,230,0.35)" stroke-width="2"/><circle cx="173.7" cy="80.7" r="43.5" fill="none" stroke="rgba(230,240,245,0.35)" stroke-width="0.8"/><circle cx="173.7" cy="80.7" r="15.100000000000001" fill="none" stroke="rgba(230,240,245,0.6)" stroke-width="1"/><circle cx="173.7" cy="80.7" r="12.8" fill="#eff1f4" stroke="#4a5866" stroke-width="1.8"/><path d="M288,80.7 L288.00,35.20 A45.5,45.5 0 0 1 293.70,35.56Z" fill="#647888" stroke="#eee" stroke-width="0.5"/><path d="M288,80.7 L293.70,35.56 A45.5,45.5 0 1 1 288.00,35.20Z" fill="#e5a85a" stroke="#eee" stroke-width="0.5"/><circle cx="288" cy="80.7" r="45.5" fill="none" stroke="#4a4d5a" stroke-width="1.8"/><circle cx="288" cy="80.7" r="47.5" fill="none" stroke="rgba(120,220,230,0.35)" stroke-width="2"/><circle cx="288" cy="80.7" r="43.5" fill="none" stroke="rgba(230,240,245,0.35)" stroke-width="0.8"/><circle cx="288" cy="80.7" r="15.100000000000001" fill="none" stroke="rgba(230,240,245,0.6)" stroke-width="1"/><circle cx="288" cy="80.7" r="12.8" fill="#eff1f4" stroke="#4a5866" stroke-width="1.8"/><circle cx="402.4" cy="80.7" r="45.5" fill="#cb8bc8"/><circle cx="402.4" cy="80.7" r="45.5" fill="none" stroke="#4a4d5a" stroke-width="1.8"/><circle cx="402.4" cy="80.7" r="47.5" fill="none" stroke="rgba(120,220,230,0.35)" stroke-width="2"/><line x1="402.4" y1="36.2" x2="402.4" y2="67.9" stroke="#e8eef0" stroke-width="1"/><circle cx="402.4" cy="80.7" r="43.5" fill="none" stroke="rgba(230,240,245,0.35)" stroke-width="0.8"/><circle cx="402.4" cy="80.7" r="15.100000000000001" fill="none" stroke="rgba(230,240,245,0.6)" stroke-width="1"/><circle cx="402.4" cy="80.7" r="12.8" fill="#eff1f4" stroke="#4a5866" stroke-width="1.8"/><path d="M517,80.7 L517.00,35.20 A45.5,45.5 0 0 1 518.43,35.22Z" fill="#aaa" stroke="#eee" stroke-width="0.5"/><path d="M517,80.7 L518.43,35.22 A45.5,45.5 0 1 1 517.00,35.20Z" fill="#e5a85a" stroke="#eee" stroke-width="0.5"/><circle cx="517" cy="80.7" r="45.5" fill="none" stroke="#4a4d5a" stroke-width="1.8"/><circle cx="517" cy="80.7" r="47.5" fill="none" stroke="rgba(120,220,230,0.35)" stroke-width="2"/><line x1="517" y1="36.2" x2="517" y2="67.9" stroke="#e8eef0" stroke-width="1"/><circle cx="517" cy="80.7" r="43.5" fill="none" stroke="rgba(230,240,245,0.35)" stroke-width="0.8"/><circle cx="517" cy="80.7" r="15.100000000000001" fill="none" stroke="rgba(230,240,245,0.6)" stroke-width="1"/><circle cx="517" cy="80.7" r="12.8" fill="#eff1f4" stroke="#4a5866" stroke-width="1.8"/><path d="M173.7,201.3 L173.70,155.80 A45.5,45.5 0 0 1 176.01,155.86Z" fill="#c8c8c8" stroke="#eee" stroke-width="0.5"/><path d="M173.7,201.3 L176.01,155.86 A45.5,45.5 0 0 1 178.32,156.03Z" fill="#888" stroke="#eee" stroke-width="0.5"/><path d="M173.7,201.3 L178.32,156.03 A45.5,45.5 0 0 1 180.61,156.33Z" fill="#999" stroke="#eee" stroke-width="0.5"/><path d="M173.7,201.3 L180.61,156.33 A45.5,45.5 0 0 1 182.89,156.74Z" fill="#777" stroke="#eee" stroke-width="0.5"/><path d="M173.7,201.3 L182.89,156.74 A45.5,45.5 0 0 1 185.14,157.26Z" fill="#8a8a8a" stroke="#eee" stroke-width="0.5"/><path d="M173.7,201.3 L185.14,157.26 A45.5,45.5 0 0 1 187.91,158.08Z" fill="#6a6a6a" stroke="#eee" stroke-width="0.5"/><path d="M173.7,201.3 L187.91,158.08 A45.5,45.5 0 0 1 190.63,159.07Z" fill="#7a7a7a" stroke="#eee" stroke-width="0.5"/><path d="M173.7,201.3 L190.63,159.07 A45.5,45.5 0 0 1 193.79,160.48Z" fill="#5f5f5f" stroke="#eee" stroke-width="0.5"/><path d="M173.7,201.3 L193.79,160.48 A45.5,45.5 0 0 1 196.85,162.13Z" fill="#6f6f6f" stroke="#eee" stroke-width="0.5"/><path d="M173.7,201.3 L196.85,162.13 A45.5,45.5 0 0 1 200.47,164.51Z" fill="#666" stroke="#eee" stroke-width="0.5"/><path d="M173.7,201.3 L200.47,164.51 A45.5,45.5 0 0 1 204.91,168.20Z" fill="#8b7cbb" stroke="#eee" stroke-width="0.5"/><path d="M173.7,201.3 L204.91,168.20 A45.5,45.5 0 0 1 210.62,174.71Z" fill="#5a5a5a" stroke="#eee" stroke-width="0.5"/><path d="M173.7,201.3 L210.62,174.71 A45.5,45.5 0 0 1 214.99,182.18Z" fill="#666" stroke="#eee" stroke-width="0.5"/><path d="M173.7,201.3 L214.99,182.18 A45.5,45.5 0 0 1 219.20,201.81Z" fill="#f0cea6" stroke="#eee" stroke-width="0.5"/><path d="M173.7,201.3 L219.20,201.81 A45.5,45.5 0 0 1 210.02,228.71Z" fill="#b1a49a" stroke="#eee" stroke-width="0.5"/><path d="M173.7,201.3 L210.02,228.71 A45.5,45.5 0 0 1 186.67,244.91Z" fill="#666" stroke="#eee" stroke-width="0.5"/><path d="M173.7,201.3 L186.67,244.91 A45.5,45.5 0 0 1 152.96,241.80Z" fill="#cb8bc8" stroke="#eee" stroke-width="0.5"/><path d="M173.7,201.3 L152.96,241.80 A45.5,45.5 0 0 1 129.18,210.70Z" fill="#9bc2b7" stroke="#eee" stroke-width="0.5"/><path d="M173.7,201.3 L129.18,210.70 A45.5,45.5 0 0 1 173.70,155.80Z" fill="#ebe4a8" stroke="#eee" stroke-width="0.5"/><circle cx="173.7" cy="201.3" r="45.5" fill="none" stroke="#4a4d5a" stroke-width="1.8"/><circle cx="173.7" cy="201.3" r="47.5" fill="none" stroke="rgba(120,220,230,0.35)" stroke-width="2"/><line x1="173.7" y1="156.8" x2="173.7" y2="188.5" stroke="#e8eef0" stroke-width="1"/><circle cx="173.7" cy="201.3" r="43.5" fill="none" stroke="rgba(230,240,245,0.35)" stroke-width="0.8"/><circle cx="173.7" cy="201.3" r="15.100000000000001" fill="none" stroke="rgba(230,240,245,0.6)" stroke-width="1"/><circle cx="173.7" cy="201.3" r="12.8" fill="#eff1f4" stroke="#4a5866" stroke-width="1.8"/><circle cx="288" cy="201.3" r="45.5" fill="#647888"/><circle cx="288" cy="201.3" r="45.5" fill="none" stroke="#4a4d5a" stroke-width="1.8"/><circle cx="288" cy="201.3" r="47.5" fill="none" stroke="rgba(120,220,230,0.35)" stroke-width="2"/><line x1="288" y1="156.8" x2="288" y2="188.5" stroke="#e8eef0" stroke-width="1"/><circle cx="288" cy="201.3" r="43.5" fill="none" stroke="rgba(230,240,245,0.35)" stroke-width="0.8"/><circle cx="288" cy="201.3" r="15.100000000000001" fill="none" stroke="rgba(230,240,245,0.6)" stroke-width="1"/><circle cx="288" cy="201.3" r="12.8" fill="#eff1f4" stroke="#4a5866" stroke-width="1.8"/><path d="M402.4,201.3 L402.40,155.80 A45.5,45.5 0 0 1 405.26,155.89Z" fill="#999" stroke="#eee" stroke-width="0.5"/><path d="M402.4,201.3 L405.26,155.89 A45.5,45.5 0 0 1 407.53,156.09Z" fill="#d6878f" stroke="#eee" stroke-width="0.5"/><path d="M402.4,201.3 L407.53,156.09 A45.5,45.5 0 0 1 410.93,156.61Z" fill="#777" stroke="#eee" stroke-width="0.5"/><path d="M402.4,201.3 L410.93,156.61 A45.5,45.5 0 0 1 419.15,159.00Z" fill="#b1a49a" stroke="#eee" stroke-width="0.5"/><path d="M402.4,201.3 L419.15,159.00 A45.5,45.5 0 0 1 435.57,170.15Z" fill="#cb8bc8" stroke="#eee" stroke-width="0.5"/><path d="M402.4,201.3 L435.57,170.15 A45.5,45.5 0 0 1 442.27,223.22Z" fill="#f0cea6" stroke="#eee" stroke-width="0.5"/><path d="M402.4,201.3 L442.27,223.22 A45.5,45.5 0 0 1 369.23,232.45Z" fill="#9bc2b7" stroke="#eee" stroke-width="0.5"/><path d="M402.4,201.3 L369.23,232.45 A45.5,45.5 0 0 1 402.40,155.80Z" fill="#ebe4a8" stroke="#eee" stroke-width="0.5"/><circle cx="402.4" cy="201.3" r="45.5" fill="none" stroke="#4a4d5a" stroke-width="1.8"/><circle cx="402.4" cy="201.3" r="47.5" fill="none" stroke="rgba(120,220,230,0.35)" stroke-width="2"/><circle cx="402.4" cy="201.3" r="43.5" fill="none" stroke="rgba(230,240,245,0.35)" stroke-width="0.8"/><circle cx="402.4" cy="201.3" r="15.100000000000001" fill="none" stroke="rgba(230,240,245,0.6)" stroke-width="1"/><circle cx="402.4" cy="201.3" r="12.8" fill="#eff1f4" stroke="#4a5866" stroke-width="1.8"/><circle cx="517" cy="201.3" r="45.5" fill="#647888"/><circle cx="517" cy="201.3" r="45.5" fill="none" stroke="#4a4d5a" stroke-width="1.8"/><circle cx="517" cy="201.3" r="47.5" fill="none" stroke="rgba(120,220,230,0.35)" stroke-width="2"/><line x1="517" y1="156.8" x2="517" y2="188.5" stroke="#e8eef0" stroke-width="1"/><circle cx="517" cy="201.3" r="43.5" fill="none" stroke="rgba(230,240,245,0.35)" stroke-width="0.8"/><circle cx="517" cy="201.3" r="15.100000000000001" fill="none" stroke="rgba(230,240,245,0.6)" stroke-width="1"/><circle cx="517" cy="201.3" r="12.8" fill="#eff1f4" stroke="#4a5866" stroke-width="1.8"/><text x="174" y="139" font-size="10.4" font-family="Liberation Sans" text-anchor="middle" fill="#222" stroke="#222" stroke-width="0.15">Total: 4, Classes: 2</text><text x="288" y="139" font-size="10.4" font-family="Liberation Sans" text-anchor="middle" fill="#222" stroke="#222" stroke-width="0.15">97.48%</text><text x="402" y="139" font-size="10.4" font-family="Liberation Sans" text-anchor="middle" fill="#222" stroke="#222" stroke-width="0.15">Total: 1, Classes: 1</text><text x="516" y="139" font-size="10.4" font-family="Liberation Sans" text-anchor="middle" fill="#222" stroke="#222" stroke-width="0.15">99.36%</text><text x="174" y="259" font-size="10.4" font-family="Liberation Sans" text-anchor="middle" fill="#222" stroke="#222" stroke-width="0.15">Total: 410, Classes: 23</text><text x="288" y="259" font-size="10.4" font-family="Liberation Sans" text-anchor="middle" fill="#222" stroke="#222" stroke-width="0.15">0.00%</text><text x="402" y="259" font-size="10.4" font-family="Liberation Sans" text-anchor="middle" fill="#222" stroke="#222" stroke-width="0.15">Total: 156, Classes: 10</text><text x="516" y="259" font-size="10.4" font-family="Liberation Sans" text-anchor="middle" fill="#222" stroke="#222" stroke-width="0.15">0.00%</text></svg></div><div class="abs" style="left:594px;top:27px;width:199px;height:267px;background:#d9dadd;border-radius:7px"><div class="abs" style="left:4px;top:10px;width:191px;height:66px;background:#eff0f3;border:2px solid #bcbcbc"><div class="abs" style="left:7px;top:18px;font-size:9.5px;line-height:14px;font-weight:bold;color:#222;display:flex;align-items:center;height:28px">Class<br>Name</div><div style="position:absolute;left:70px;top:8px;width:90px;height:46px;background:#e6f2fc;border:1px solid #b8d4ea;border-radius:3px;font-size:11px;line-height:13.5px;padding:2px 0 0 6px;color:#222">5:SPEED<br>LIMIT<br>(80KM/H)</div></div><div class="abs" style="left:4px;top:79px;width:191px;height:66px;background:#eff0f3;border:2px solid #bcbcbc"><div class="abs" style="left:7px;top:18px;font-size:9.5px;line-height:14px;font-weight:bold;color:#222;display:flex;align-items:center;height:28px">Example<br>Image</div><div style="position:absolute;left:70px;top:7px;width:44px;height:44px;border-radius:50%;background:#fff;border:3.5px solid #c8201a;font-size:21px;line-height:37px;text-align:center;color:#000;font-weight:bold;letter-spacing:-1px">80</div></div><div class="abs" style="left:4px;top:148px;width:191px;height:51px;background:#eff0f3;border:2px solid #bcbcbc"><div class="abs" style="left:7px;top:10px;font-size:9.5px;line-height:14px;font-weight:bold;color:#222;display:flex;align-items:center;height:28px">Category</div><div style="position:absolute;left:70px;top:8px;width:90px;height:33px;background:#e6f2fc;border:1px solid #b8d4ea;border-radius:3px;font-size:11px;line-height:13.5px;padding:2px 0 0 6px;color:#222">SPEED LIMIT<br>SIGNS</div></div><div class="abs" style="left:4px;top:202px;width:191px;height:54px;background:#eff0f3;border:2px solid #bcbcbc"><div class="abs" style="left:7px;top:12px;font-size:9.5px;line-height:14px;font-weight:bold;color:#222;display:flex;align-items:center;height:28px"># of<br>Instances</div><div style="position:absolute;left:71px;top:18px;font-size:13px;color:#222">156</div></div></div></div>
</body></html>
